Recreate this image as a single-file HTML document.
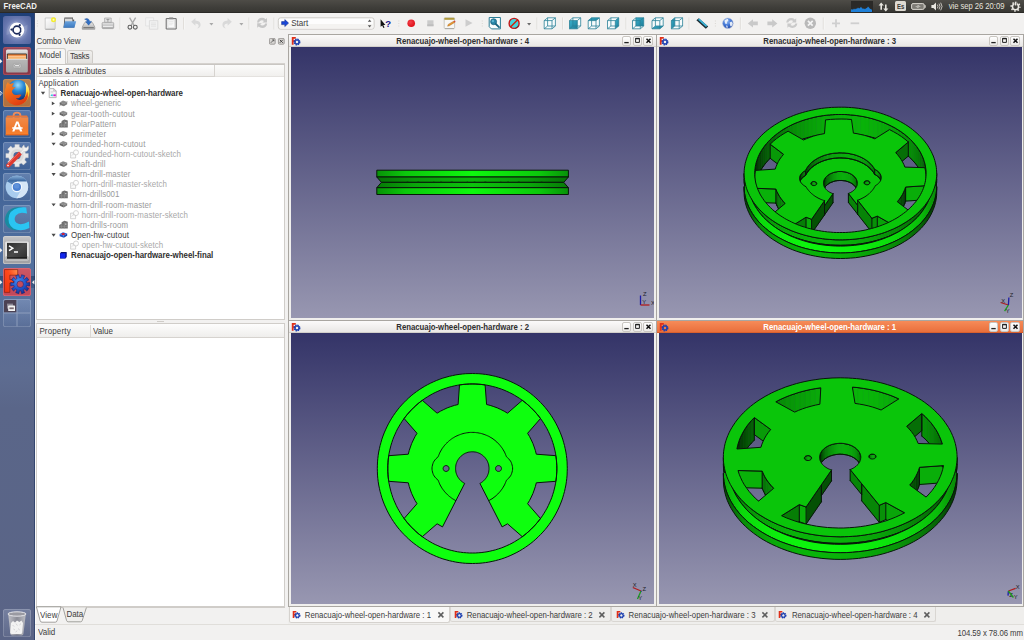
<!DOCTYPE html>
<html lang="es">
<head>
<meta charset="utf-8">
<title>FreeCAD</title>
<style>
html,body{margin:0;padding:0;background:#f2f1f0;}
body{width:1024px;height:640px;overflow:hidden;font-family:"Liberation Sans","DejaVu Sans",sans-serif;}
#root{position:relative;width:1024px;height:640px;overflow:hidden;background:#f2f1f0;}
#root div,#root span,#root svg{position:absolute;box-sizing:border-box;}
.t{white-space:pre;line-height:12px;height:12px;transform:scaleY(1.14);transform-origin:0 55%;}
.sub{border:1px solid #a9a6a1;background:#f0efed;}
.sub .tb{left:0;top:0;right:0;height:12px;background:linear-gradient(#fbfafa,#e9e7e5);border-bottom:1px solid #d2cfcb;}
.sub.active .tb{background:linear-gradient(#f68b58,#e96f3c);border-bottom:1px solid #d9602e;}
.sub .wi{left:1.5px;top:0.8px;}
.sub .wb{top:1.2px;width:9.4px;height:9.4px;border:1px solid #c9c6c1;border-radius:2px;background:linear-gradient(#ffffff,#eceae8);}
.sub.active .wb{border-color:#c9c6c1;}
.sub .wb svg{left:-0.8px;top:-0.8px;}
.v3d{display:block;}
</style>
</head>

<body>
<div id="root">
<!-- top panel -->
<div id="panel" style="left:0;top:0;width:1024px;height:13px;background:linear-gradient(#4e4c47,#3f3e3a 60%,#383733);border-bottom:1px solid #2b2a27"></div>
<!-- indicators -->
<div style="left:851px;top:1px;width:21.5px;height:11px;background:#2a2927"></div>
<svg style="left:851px;top:1px" width="22" height="11" viewBox="0 0 22 11"><path d="M0 11V8.6l1-.4 1 .6 1-1.2 1 .8 1-.9 1 .3 1-1.4 1 1.1 1-.5 1-1.3 1 1.6 1 .5 1-.2 1 .6 1-.9 1-.2 1-1.6 1 .9 1 1.4 1 .5 1 .4V11z" fill="#1f80d8"/></svg>
<svg style="left:878px;top:1.5px" width="11" height="10" viewBox="0 0 11 10"><path d="M3.2 0.6L0.6 3.6h1.8v4.2h1.6V3.6h1.8z M7.8 9.6l2.6-3H8.6V2.4H7v4.2H5.2z" fill="#e8e6e0"/></svg>
<div style="left:894.6px;top:1.4px;width:11.6px;height:9.8px;background:#dedad2;border-radius:1.5px"></div>
<svg style="left:911px;top:3px" width="15" height="7" viewBox="0 0 15 7"><rect x="0.6" y="0.6" width="12.6" height="5.8" rx="1.4" fill="#7d7b75" stroke="#d9d6cf" stroke-width="1"/><rect x="13.6" y="2.2" width="1.1" height="2.6" fill="#d9d6cf"/><path d="M4 3.5h3.2l-1-1.6 3.8 1.6H6.8l1 1.6z" fill="#eceae4"/></svg>
<svg style="left:931px;top:2px" width="12" height="9" viewBox="0 0 12 9"><path d="M0.4 3h2l2.6-2.4v7.8L2.4 6h-2z" fill="#e8e6e0"/><path d="M6.4 2.6q1.2 1.9 0 3.8M8 1.6q2 2.9 0 5.8M9.7 0.7q2.7 3.8 0 7.6" fill="none" stroke="#d6d3cc" stroke-width="0.9"/></svg>
<svg style="left:1009.5px;top:1.2px" width="11" height="11" viewBox="0 0 11 11"><circle cx="5.5" cy="5.7" r="3" fill="none" stroke="#e8e6e0" stroke-width="1.5"/><circle cx="5.5" cy="5.7" r="4.3" fill="none" stroke="#e8e6e0" stroke-width="1.6" stroke-dasharray="1.5 1.88" stroke-dashoffset="0.4"/><rect x="4.7" y="0.4" width="1.6" height="4.4" fill="#e8e6e0" stroke="#46443f" stroke-width="0.5"/></svg>

<!-- launcher background -->
<div id="launcherbg" style="left:0;top:13px;width:34.5px;height:627px;background:linear-gradient(#1e3f78 0%,#234880 8%,#2c528a 16%,#3a5e94 24%,#48689a 31%,#52709e 39%,#59719b 46%,#5c6c93 53%,#5e6d92 57%,#5a6689 63%,#5a6486 100%);border-right:1px solid #35466e"></div>

<div id="winedge" style="left:34.5px;top:13px;width:1px;height:627px;background:#fafafa"></div>
<!-- main toolbar area -->
<div style="left:35px;top:13px;width:989px;height:21px;background:#f2f1f0"></div>

<!-- Combo view dock -->
<svg style="left:268.5px;top:37.5px" width="16" height="7" viewBox="0 0 16 7"><rect x="0.4" y="0.4" width="5.8" height="5.8" rx="1" fill="#d8d6d3" stroke="#8e8c89" stroke-width="0.8"/><path d="M1.8 4.8l3-3M3.3 1.8h1.5v1.5" stroke="#4a4a4a" stroke-width="0.8" fill="none"/><rect x="9.4" y="0.4" width="5.8" height="5.8" rx="1" fill="#d8d6d3" stroke="#8e8c89" stroke-width="0.8"/><path d="M10.8 1.8l3 3M13.8 1.8l-3 3" stroke="#3a3a3a" stroke-width="0.9" fill="none"/></svg>
<!-- tabs Model / Tasks -->
<div style="left:36px;top:48px;width:30px;height:16px;background:#f6f5f4;border:1px solid #cfccc8;border-bottom:none;border-radius:2.5px 2.5px 0 0"></div>
<div style="left:66.5px;top:49.5px;width:26.5px;height:13px;background:linear-gradient(#f1f0ee,#e2e0dd);border:1px solid #cfccc8;border-bottom:none;border-radius:2.5px 2.5px 0 0"></div>
<div style="left:66px;top:62.5px;width:219px;height:1px;background:#d5d2ce"></div>
<!-- tree widget -->
<div style="left:36px;top:63.5px;width:249px;height:256px;background:#ffffff;border:1px solid #d0cdc9;border-top-color:#c9c6c2"></div>
<div style="left:37px;top:64.5px;width:178px;height:12.5px;background:linear-gradient(#fdfdfd,#efeeec);border-bottom:1px solid #d6d3cf;border-right:1px solid #d6d3cf"></div>
<div style="left:215px;top:64.5px;width:69px;height:12.5px;background:linear-gradient(#fbfbfa,#f1f0ee);border-bottom:1px solid #e4e2df"></div>
<!-- splitter handle -->
<div style="left:157px;top:320.8px;width:7px;height:1px;background:#cfccc8"></div>
<!-- property widget -->
<div style="left:36px;top:323px;width:249px;height:284px;background:#ffffff;border:1px solid #d0cdc9"></div>
<div style="left:37px;top:324px;width:247px;height:13.5px;background:linear-gradient(#fdfdfd,#efeeec);border-bottom:1px solid #d6d3cf"></div>
<div style="left:90px;top:325px;width:1px;height:11.5px;background:#dcd9d5"></div>
<!-- View / Data tabs (triangular) -->
<div style="left:36px;top:606.5px;width:249px;height:1px;background:#cfccc8"></div>
<svg style="left:35px;top:606px" width="60" height="18" viewBox="0 0 60 18"><path d="M1.4 0.8L5.2 14.8q0.4 1.4 1.8 1.4h13.2q1.4 0 1.8-1.4L26 0.8z" fill="#ffffff" stroke="#8d8b88" stroke-width="0.8"/><path d="M28 1.6L31.6 14.6q0.4 1.2 1.6 1.2h12.4q1.2 0 1.6-1.2L51.4 1.6" fill="#f0efed" stroke="#8d8b88" stroke-width="0.8"/></svg>

<!-- MDI area frame -->
<div style="left:288px;top:34px;width:736px;height:573px;background:#a9a6a1"></div>
<!-- tab bar for MDI -->
<div style="left:288px;top:607px;width:736px;height:16.5px;background:#efeeec"></div>
<div style="left:289px;top:607px;width:160.5px;height:15.5px;background:#f9f8f7;border:1px solid #d5d2ce;border-top:none;border-radius:0 0 2.5px 2.5px"></div>
<div style="left:449.5px;top:607px;width:161.5px;height:14.5px;background:#eeedeb;border:1px solid #d9d6d2;border-top:none;border-radius:0 0 2.5px 2.5px"></div>
<div style="left:611px;top:607px;width:163.5px;height:14.5px;background:#eeedeb;border:1px solid #d9d6d2;border-top:none;border-radius:0 0 2.5px 2.5px"></div>
<div style="left:774.5px;top:607px;width:161.5px;height:14.5px;background:#eeedeb;border:1px solid #d9d6d2;border-top:none;border-radius:0 0 2.5px 2.5px"></div>
<!-- status bar -->
<div style="left:35px;top:624px;width:989px;height:1px;background:#e0deda"></div>

<style>.lt{width:28px;height:28px;border-radius:2.6px;overflow:hidden}</style>
<div style="left:0;top:276px;width:34.5px;height:11.5px;background:linear-gradient(rgba(20,50,90,0.55),rgba(30,60,100,0.35))"></div>
<div class="lt" style="left:3.1px;top:16.0px;background:radial-gradient(circle at 50% 50%,#a2aed4 0%,#8290c0 38%,#6676ae 62%,#52639c 100%);"><svg width="28" height="28" viewBox="0 0 28 28" style="left:0;top:0"><path d="M3.5 19Q3 7 15 4.500Q7 8.500 6.500 18z" fill="#ffffff" opacity="0.130"/><path d="M24.500 9Q25 21 13 23.500Q21 19.500 21.500 10z" fill="#ffffff" opacity="0.130"/><circle cx="13.9" cy="14" r="7.4" fill="#ffffff"/><circle cx="13.9" cy="14" r="3.9" fill="none" stroke="#1b2a5c" stroke-width="1.7"/><circle cx="8.5" cy="13.6" r="1.1" fill="#1b2a5c"/><circle cx="16.8" cy="9.2" r="1.1" fill="#1b2a5c"/><circle cx="16.6" cy="18.8" r="1.1" fill="#1b2a5c"/><path d="M10.6 11.2l-1 -0.8M10.8 17l-1 .7M18 14h1.2" stroke="#fff" stroke-width="0.9"/></svg></div>
<div class="lt" style="left:3.1px;top:47.4px;background:linear-gradient(#9a4a5c,#8a3a4c 50%,#8c3848);box-shadow:inset 0 0 0 1px rgba(190,90,100,0.55);"><svg width="28" height="28" viewBox="0 0 28 28" style="left:0;top:0"><defs><linearGradient id="fl1" x1="0" y1="0" x2="0" y2="1"><stop offset="0" stop-color="#e9e9e9"/><stop offset="0.3" stop-color="#bcbcbc"/><stop offset="1" stop-color="#a4a4a4"/></linearGradient><linearGradient id="fl2" x1="0" y1="0" x2="0" y2="1"><stop offset="0" stop-color="#e8742a"/><stop offset="0.5" stop-color="#f8a860"/><stop offset="1" stop-color="#f6c890"/></linearGradient></defs><rect x="3" y="2.4" width="21.8" height="23" rx="1.5" fill="url(#fl1)"/><rect x="4" y="6.4" width="19.8" height="5.6" rx="0.8" fill="#3a3632"/><rect x="4.8" y="7.4" width="18.2" height="4.6" fill="url(#fl2)"/><path d="M5 9.4h17.8" stroke="#fde0c0" stroke-width="0.6"/><rect x="3.4" y="12" width="21" height="0.8" fill="#dedede"/><rect x="10.2" y="16.4" width="7.8" height="4.6" rx="1.6" fill="#c9c9c9" stroke="#9a9a9a" stroke-width="0.5"/><rect x="11.6" y="17.7" width="5" height="2" rx="1" fill="#f4f4f4" stroke="#7c7c7c" stroke-width="0.6"/></svg></div>
<div class="lt" style="left:3.1px;top:79.0px;background:linear-gradient(#b88050,#b47644 50%,#ae703e);box-shadow:inset 0 0 0 1px rgba(210,150,100,0.5);"><svg width="28" height="28" viewBox="0 0 28 28" style="left:0;top:0"><defs><radialGradient id="ffb" cx="0.5" cy="0.25" r="0.8"><stop offset="0" stop-color="#9adcf8"/><stop offset="0.35" stop-color="#2a8ad8"/><stop offset="0.8" stop-color="#103c88"/><stop offset="1" stop-color="#0a2458"/></radialGradient><linearGradient id="ffo" x1="0" y1="0" x2="0.6" y2="1"><stop offset="0" stop-color="#f58a2a"/><stop offset="0.5" stop-color="#ee6418"/><stop offset="1" stop-color="#e03c10"/></linearGradient><linearGradient id="ffy" x1="0" y1="0" x2="0" y2="1"><stop offset="0" stop-color="#fff6b0"/><stop offset="0.5" stop-color="#fcd020"/><stop offset="1" stop-color="#f08a18"/></linearGradient></defs><g transform="translate(14.1 13.5) scale(1.11) translate(-14.7 -13.8)"><circle cx="15.4" cy="12" r="9.6" fill="url(#ffb)"/><path d="M21.6 4.6Q27 9 25.4 16.6Q23.6 23.8 16 25Q22 20 22.6 14Q23.4 9 21.6 4.6z" fill="url(#ffy)"/><path d="M6.4 4.4Q7 6 8.4 6.2Q10 5.2 12 5.6Q10.2 7.2 10.4 9Q12 9.2 13.6 8.6Q12.2 10.2 11 11Q9.6 12.2 10.4 14Q11.6 16.4 14.4 16Q16.6 15.4 18.6 15.8Q17 19.6 13.4 19Q17 22 21 19Q23.6 16.6 23.8 12.6Q25.6 18 22.4 22Q18.6 26 12.6 25.2Q6.6 24 4.2 18.6Q2.4 13.6 4.6 9.2Q4.6 6.6 6.4 4.4z" fill="url(#ffo)"/></g></svg></div>
<div class="lt" style="left:3.1px;top:110.3px;background:linear-gradient(rgba(120,150,200,0.55),rgba(60,96,150,0.35));box-shadow:inset 0 0 0 0.8px rgba(255,255,255,0.22);"><svg width="28" height="28" viewBox="0 0 28 28" style="left:0;top:0"><defs><linearGradient id="bag" x1="0" y1="0" x2="0" y2="1"><stop offset="0" stop-color="#f08a48"/><stop offset="0.6" stop-color="#f07a30"/><stop offset="1" stop-color="#f8822c"/></linearGradient></defs><path d="M10.6 9V5.2Q10.6 2.6 14 2.6Q17.4 2.6 17.4 5.2V9" fill="none" stroke="#ee8c5a" stroke-width="1.8"/><path d="M2.8 7.6l1.4 -2.2h19.8l1.2 2.2z" fill="#e8763a"/><rect x="2.7" y="7.4" width="22.6" height="17.8" fill="url(#bag)"/><rect x="2.7" y="24" width="22.6" height="1.2" fill="#e86a20"/><path d="M9.2 21.6L13.2 11.6h2.2L19.4 21.6h-2.4l-0.7 -2h-4.2l-0.7 2z M12.9 17.4h2.8L14.3 13.6z" fill="#ffffff"/><rect x="9" y="17.2" width="10.8" height="1.5" rx="0.7" fill="#ffffff"/></svg></div>
<div class="lt" style="left:3.1px;top:141.9px;background:linear-gradient(rgba(130,155,200,0.5),rgba(70,100,150,0.3));box-shadow:inset 0 0 0 0.8px rgba(255,255,255,0.22);"><svg width="28" height="28" viewBox="0 0 28 28" style="left:0;top:0"><path d="M25.3 11.4L25.3 15.8L22.6 15.8L21.7 18.1L23.6 19.9L20.4 23.1L18.6 21.2L16.3 22.1L16.3 24.8L11.9 24.8L11.9 22.1L9.6 21.2L7.8 23.1L4.6 19.9L6.5 18.1L5.6 15.8L2.9 15.8L2.9 11.4L5.6 11.4L6.5 9.1L4.6 7.3L7.8 4.1L9.6 6.0L11.9 5.1L11.9 2.4L16.3 2.4L16.3 5.1L18.6 6.0L20.4 4.1L23.6 7.3L21.7 9.1L22.6 11.4Z" fill="#e9e9e9" stroke="#c8c8c8" stroke-width="0.4"/><circle cx="14.1" cy="13.6" r="6.6" fill="#dadada"/><circle cx="14.1" cy="13.6" r="3.6" fill="#4a6a9c"/><path d="M17.2 10.6L20 7.4Q18.6 4.4 21 2.8L21.6 5.4L23.6 5.8L25.2 3.8Q26.4 7 24 9Q22 10.2 20.6 9.6L18.6 12z" fill="#f2f2f2" stroke="#bdbdbd" stroke-width="0.4"/><path d="M3.4 22.4L16 9.6L18.8 12.4L6.4 25.2Q4.8 26 3.6 24.8Q2.6 23.6 3.4 22.4z" fill="#e03a30"/><path d="M4.4 22.6L16 10.8" stroke="#f47a70" stroke-width="0.7"/><circle cx="5" cy="23.6" r="0.8" fill="#fff"/></svg></div>
<div class="lt" style="left:3.1px;top:173.1px;background:linear-gradient(rgba(135,160,200,0.5),rgba(75,105,150,0.3));box-shadow:inset 0 0 0 0.8px rgba(255,255,255,0.22);"><svg width="28" height="28" viewBox="0 0 28 28" style="left:0;top:0"><defs><linearGradient id="ch1" x1="0" y1="0" x2="0" y2="1"><stop offset="0" stop-color="#8ab0d8"/><stop offset="1" stop-color="#32609a"/></linearGradient></defs><circle cx="13.9" cy="14" r="11.2" fill="#a9ccee"/><path d="M13.9 14L4.2 8.4A11.2 11.2 0 0 1 23.6 8.4z" fill="url(#ch1)"/><path d="M4.2 8.4A11.2 11.2 0 0 1 23.6 8.4H13z" fill="url(#ch1)"/><path d="M23.6 8.4A11.2 11.2 0 0 1 13.4 25.2L18.4 16.6L13.9 8.4z" fill="#d6e6f6"/><circle cx="13.9" cy="14" r="5.3" fill="#f2f7fc"/><circle cx="13.9" cy="14" r="4.1" fill="#4a80d2"/><circle cx="13.6" cy="13" r="2.6" fill="#6c9ce0" opacity="0.6"/></svg></div>
<div class="lt" style="left:3.1px;top:204.8px;background:linear-gradient(rgba(135,160,200,0.45),rgba(80,108,152,0.3));box-shadow:inset 0 0 0 0.8px rgba(255,255,255,0.22);"><svg width="28" height="28" viewBox="0 0 28 28" style="left:0;top:0"><path d="M20 2.4Q8 0.6 3.4 9Q-0.4 17 5.4 22.6Q9.4 26 15 25.2Q8 22 8.4 13Q9.4 5.4 20 2.4z" fill="#1a8aa0"/><path d="M23.2 2.4L24 8.6Q16.6 6 12.8 10.4Q10.2 14.4 13.4 17.8Q17.8 21 26 16.6L26.4 23Q17.6 27.4 10.4 23.6Q3.6 18.6 6.2 10Q9.6 1.6 23.2 2.4z" fill="#2ac4f2"/></svg></div>
<div class="lt" style="left:3.1px;top:236.3px;background:linear-gradient(#c6c6c8,#aeaeb0 30%,#a2a2a4);box-shadow:inset 0 0 0 0.8px rgba(220,220,220,0.6);"><svg width="28" height="28" viewBox="0 0 28 28" style="left:0;top:0"><defs><linearGradient id="tm1" x1="0" y1="0" x2="1" y2="1"><stop offset="0" stop-color="#2c2c2c"/><stop offset="0.5" stop-color="#4a4a4a"/><stop offset="1" stop-color="#2e2e2e"/></linearGradient></defs><rect x="2.1" y="5.4" width="23.8" height="19" rx="1.6" fill="#e4e4e4"/><rect x="2.1" y="20" width="23.8" height="4.4" rx="1.6" fill="#b8b8b8"/><rect x="4" y="6.9" width="20" height="15.6" fill="url(#tm1)"/><rect x="4" y="21.4" width="20" height="1.1" fill="#111"/><path d="M6 9.8l3.8 2.4L6 14.6" fill="none" stroke="#ffffff" stroke-width="1.5"/><path d="M11 16h4" stroke="#ffffff" stroke-width="1.5"/></svg></div>
<div class="lt" style="left:3.1px;top:267.7px;background:linear-gradient(#cf5866,#c44c5c 50%,#c2485a);box-shadow:inset 0 0 0 0.8px rgba(235,120,130,0.6);"><svg width="28" height="28" viewBox="0 0 28 28" style="left:0;top:0"><defs><linearGradient id="fcF" x1="0" y1="1" x2="1" y2="0"><stop offset="0" stop-color="#f03010"/><stop offset="0.6" stop-color="#ff4a1c"/><stop offset="1" stop-color="#ff9450"/></linearGradient><radialGradient id="fcG" cx="0.4" cy="0.35" r="0.7"><stop offset="0" stop-color="#4a8ef0"/><stop offset="0.6" stop-color="#1f50c4"/><stop offset="1" stop-color="#14308c"/></radialGradient></defs><path d="M1.4 1.6h13.3v5.6H6.8v4.4h3.6v3.4H6.8v9.4H1.4z" fill="url(#fcF)" stroke="#7a1a0a" stroke-width="0.6"/><path d="M26.7 14.5L26.7 17.9L23.7 17.5L23.2 18.9L25.8 20.4L23.9 23.1L21.7 21.1L20.5 21.9L21.7 24.7L18.6 25.7L17.9 22.8L16.5 22.8L15.8 25.7L12.7 24.7L13.9 21.9L12.7 21.1L10.5 23.1L8.6 20.4L11.2 18.9L10.7 17.5L7.7 17.9L7.7 14.5L10.7 14.9L11.2 13.5L8.6 12.0L10.5 9.3L12.7 11.3L13.9 10.5L12.7 7.7L15.8 6.7L16.5 9.6L17.9 9.6L18.6 6.7L21.7 7.7L20.5 10.5L21.7 11.3L23.9 9.3L25.8 12.0L23.2 13.5L23.7 14.9Z M20.3 16.2a0 0 0 0 0 0 0z" fill="url(#fcG)" stroke="#101c70" stroke-width="0.5"/><circle cx="17.2" cy="16.2" r="3.3" fill="#c44c5c" stroke="#101c70" stroke-width="0.5"/></svg></div>
<div class="lt" style="left:3.1px;top:299.1px;background:linear-gradient(rgba(140,160,200,0.5),rgba(85,110,155,0.25));box-shadow:inset 0 0 0 0.8px rgba(255,255,255,0.22);"><svg width="28" height="28" viewBox="0 0 28 28" style="left:0;top:0"><path d="M1 2.6Q1 1 2.6 1H13.6V13.6H1z" fill="#4c4254"/><path d="M14 0.6V27.4M0.6 14H27.4" stroke="#92a2c0" stroke-width="0.9"/><rect x="4" y="4.6" width="6" height="5" fill="#8c8894"/><rect x="5.2" y="6.6" width="6.8" height="5.4" rx="0.6" fill="#f4f4f4"/><rect x="6.4" y="8.4" width="4.4" height="1.8" fill="#7a6a72"/></svg></div>
<div class="lt" style="left:3.1px;top:609.0px;background:linear-gradient(rgba(150,160,190,0.45),rgba(110,120,150,0.25));box-shadow:inset 0 0 0 0.8px rgba(255,255,255,0.22);"><svg width="28" height="28" viewBox="0 0 28 28" style="left:0;top:0"><defs><linearGradient id="trs" x1="0" y1="0" x2="1" y2="0"><stop offset="0" stop-color="#c8c8cc"/><stop offset="0.5" stop-color="#8e8e96"/><stop offset="1" stop-color="#c4c4c8"/></linearGradient></defs><path d="M5.2 5L7.4 25Q7.6 26.4 9 26.4H18.8Q20.2 26.4 20.4 25L22.8 5z" fill="url(#trs)" opacity="0.9"/><ellipse cx="14" cy="5" rx="9" ry="2.2" fill="#9a9aa2" stroke="#e6e6ea" stroke-width="1"/><path d="M8 14l2 -2 2 1.4 2 -2 2.4 1.6 2 -1.6 1.6 2.6 -0.8 9.4q-0.1 1.6 -1.6 1.6h-8.8q-1.4 0 -1.6 -1.6z" fill="#f2f2f2"/><path d="M9.6 16l1.6 1.6M13 14.6l1.4 2M16.4 16l1.6 -1.4M10.4 20l1.6 1M15 19.6l1.8 1.4M12.6 23l1.6 -1.2" stroke="#c4c4c8" stroke-width="0.7"/></svg></div>
<svg style="left:0px;top:59px" width="3" height="5" viewBox="0 0 3 5"><path d="M0 0L2.4 2.2L0 4.4z" fill="#f0f0f0" stroke="#f0f0f0" stroke-width="0"/></svg>
<svg style="left:0px;top:90.5px" width="3" height="5" viewBox="0 0 3 5"><path d="M0 0L2.4 2.2L0 4.4z" fill="none" stroke="#f0f0f0" stroke-width="0.8"/></svg>
<svg style="left:0px;top:247.5px" width="3" height="5" viewBox="0 0 3 5"><path d="M0 0L2.4 2.2L0 4.4z" fill="#f0f0f0" stroke="#f0f0f0" stroke-width="0"/></svg>
<svg style="left:0px;top:279.5px" width="3" height="5" viewBox="0 0 3 5"><path d="M0 0L2.4 2.2L0 4.4z" fill="#f0f0f0" stroke="#f0f0f0" stroke-width="0"/></svg>
<svg style="left:31.6px;top:279.5px" width="3" height="5" viewBox="0 0 3 5"><path d="M2.4 0L0 2.2L2.4 4.4z" fill="#f0f0f0" stroke="#f0f0f0" stroke-width="0"/></svg>
<svg style="left:35px;top:13px" width="989" height="21" viewBox="35 13 989 21"><defs><linearGradient id="tPage" x1="0" y1="0" x2="1" y2="1"><stop offset="0" stop-color="#ffffff"/><stop offset="1" stop-color="#dcdcdc"/></linearGradient><linearGradient id="tBlue" x1="0" y1="0" x2="0" y2="1"><stop offset="0" stop-color="#6aa2dc"/><stop offset="1" stop-color="#3a78c0"/></linearGradient><linearGradient id="tTray" x1="0" y1="0" x2="0" y2="1"><stop offset="0" stop-color="#e6e6e6"/><stop offset="1" stop-color="#a8a8a8"/></linearGradient><radialGradient id="tGlobe" cx="0.4" cy="0.3" r="0.8"><stop offset="0" stop-color="#9cc0f4"/><stop offset="0.5" stop-color="#3f74d4"/><stop offset="1" stop-color="#1c3c94"/></radialGradient><radialGradient id="tRed" cx="0.4" cy="0.35" r="0.7"><stop offset="0" stop-color="#f4404a"/><stop offset="1" stop-color="#dc0c14"/></radialGradient><linearGradient id="tTeal" x1="0" y1="0" x2="1" y2="1"><stop offset="0" stop-color="#3ab0cc"/><stop offset="1" stop-color="#1c7c98"/></linearGradient></defs><path d="M37.4 20.4v1M37.4 22.9v1M37.4 25.4v1" stroke="#dcd9d5" stroke-width="1.1"/><path d="M45.2 18h10v10.6q0 .6-.6 .6h-8.8q-.6 0-.6-.6z" fill="url(#tPage)" stroke="#b9b9b9" stroke-width="0.7"/><path d="M45.4 29.3h9.6" stroke="#a2a2a2" stroke-width="0.8"/><circle cx="53.5" cy="19.8" r="2.5" fill="#f4ec30"/><circle cx="53.5" cy="19.8" r="1" fill="#fdfcc0"/><path d="M64.4 17.4h8.6v2h1.2v8h-10.6z" fill="#5c5c5c"/><path d="M65 18.6h7.4v8h-7.4z" fill="#d8d8d8"/><path d="M63.3 27.8l1.7-6.6h11.2l-1.8 6.6z" fill="url(#tBlue)"/><path d="M82.3 27l2.4-4.4h7.8l2.3 4.4v2.3h-12.5z" fill="url(#tTray)" stroke="#8a8a8a" stroke-width="0.6"/><path d="M83.4 27.6h10.4" stroke="#777" stroke-width="1.1"/><path d="M84.6 19.2Q88.4 17 89.8 21.4h1.8l-3 3.8-3-3.8h1.8Q87.2 19.6 84.6 19.2z" fill="#2f6fc4" stroke="#1c4c94" stroke-width="0.4"/><path d="M104.6 18h6.6v4.4h-6.6z" fill="#e2e2e2" stroke="#9a9a9a" stroke-width="0.6"/><path d="M106.4 19.4h3M107.9 19.4v2.4" stroke="#8c8c8c" stroke-width="0.8"/><path d="M102.1 23.4q0-1 1-1h9.6q1 0 1 1v4.2q0 1-1 1h-9.6q-1 0-1-1z" fill="url(#tTray)" stroke="#8e8e8e" stroke-width="0.6"/><path d="M103 26.4h9.8" stroke="#f6f6f6" stroke-width="0.9"/><path d="M120 17.5v12" stroke="#dddad6" stroke-width="1"/><path d="M120.8 17.5v12" stroke="#fafafa" stroke-width="0.6"/><path d="M129.6 17.6l4.6 8M135.6 17.6l-4.6 8" stroke="#a8a8a8" stroke-width="1.3"/><circle cx="129.9" cy="27.2" r="1.9" fill="none" stroke="#5e5e5e" stroke-width="1.1"/><circle cx="135.3" cy="27.2" r="1.9" fill="none" stroke="#5e5e5e" stroke-width="1.1"/><path d="M145.6 17.8h8v8.2h-8z" fill="#f4f4f4" stroke="#dedede" stroke-width="0.7"/><path d="M149.4 20.6h8.4v8.6h-8.4z" fill="#f1f1f1" stroke="#d6d6d6" stroke-width="0.7"/><path d="M151 23h5M151 24.6h5M151 26.2h5" stroke="#dcdcdc" stroke-width="0.7"/><path d="M166.2 18.6h10v10.4h-10z" fill="#efefef" stroke="#6a6a6a" stroke-width="1"/><path d="M168 19.8h6.4v7.8h-6.4z" fill="#fafafa" stroke="#cfcfcf" stroke-width="0.5"/><path d="M169.2 17.4h4v1.8h-4z" fill="#8a8a8a"/><path d="M169 21.6h4.4M169 23.2h4.4M169 24.8h3.4" stroke="#dadada" stroke-width="0.6"/><path d="M183.5 17.5v12" stroke="#dddad6" stroke-width="1"/><path d="M184.3 17.5v12" stroke="#fafafa" stroke-width="0.6"/><path d="M191.2 21.8l4.2-3.8v2.4q5.4 .4 5.2 4.6q-.2 2.6-3.4 3.4q2-1.6 1.4-3.4q-.6-1.6-3.2-1.6v2.4z" fill="#d9d9d9"/><path d="M209.4 23l2 2.6 2-2.6z" fill="#a9a9a9"/><path d="M231.8 21.8l-4.2-3.8v2.4q-5.4 .4-5.2 4.6q.2 2.6 3.4 3.4q-2-1.6-1.4-3.4q.6-1.6 3.2-1.6v2.4z" fill="#d9d9d9"/><path d="M239.4 23l2 2.6 2-2.6z" fill="#a9a9a9"/><path d="M249 17.5v12" stroke="#dddad6" stroke-width="1"/><path d="M249.8 17.5v12" stroke="#fafafa" stroke-width="0.6"/><path d="M257 22.4q.6-4.4 5-4.6q2.2 0 3.6 1.4l1.4-1.2v4.6h-4.6l1.6-1.6q-1-.8-2.2-.8q-2.4 .2-2.8 2.2z M267.2 23.4q-.6 4.4-5 4.6q-2.2 0-3.6-1.4l-1.4 1.2v-4.6h4.6l-1.6 1.6q1 .8 2.2 .8q2.400-.2 2.800-2.200z" fill="#c6c6c6"/><path d="M274 17.5v12" stroke="#dddad6" stroke-width="1"/><path d="M274.8 17.5v12" stroke="#fafafa" stroke-width="0.6"/><rect x="278.3" y="17.8" width="95.8" height="11.4" rx="2.4" fill="#fdfdfd" stroke="#c3c0bb" stroke-width="0.8"/><rect x="278.9" y="24" width="94.600" height="4.6" rx="1.6" fill="#f1f0ee" opacity="0.8"/><path d="M281.600 21.6h3.200v-2l3.800 3.500-3.800 3.500v-2h-3.200z" fill="#1846d8" stroke="#0c2480" stroke-width="0.5"/><path d="M367.800 21.800l1.800-2.200 1.800 2.200z M367.800 25.200l1.800 2.200 1.800-2.200z" fill="#555"/><path d="M380.600 19.200v7.600l1.600-1.400 1.200 2.600 1.100-.5-1.200-2.500h2.100z" fill="#111"/><text x="385.200" y="27.200" font-family="Liberation Sans, sans-serif" font-weight="bold" font-size="9.600" fill="#1a1a8c">?</text><path d="M398.8 20.4v1M398.8 22.9v1M398.8 25.4v1" stroke="#dcd9d5" stroke-width="1.1"/><circle cx="411.200" cy="23.300" r="3.800" fill="url(#tRed)"/><rect x="427.300" y="20.300" width="6.200" height="5.900" fill="#cbcbcb"/><rect x="427.300" y="24.300" width="6.200" height="1.900" fill="#bdbdbd"/><rect x="444.200" y="17.900" width="10.400" height="10.600" rx="0.800" fill="#f7f7f5" stroke="#b4b4ae" stroke-width="0.700"/><rect x="444.400" y="17.800" width="10" height="2" fill="#b09a3c"/><path d="M445 28.700h9" stroke="#9e9e98" stroke-width="0.800"/><path d="M447.600 26.200l.6-1.800 5.400-3.200 1.100 1.200-5.300 3.300z" fill="#e89a30" stroke="#a0601c" stroke-width="0.400"/><path d="M453.400 21.300l1.200-.7 1 1.200-1.100.700z" fill="#d84a3a"/><path d="M465.500 19.300l7 3.800-7 3.700z" fill="#cdcdcd"/><path d="M482.3 20.4v1M482.3 22.9v1M482.3 25.4v1" stroke="#dcd9d5" stroke-width="1.1"/><path d="M489.200 17.500h11.200v11.400h-9l-2.200-2.200z" fill="#fbfdfd" stroke="#2c7c94" stroke-width="1"/><circle cx="493.600" cy="21.700" r="3" fill="#2a86a8" stroke="#165c78" stroke-width="0.700"/><circle cx="492.900" cy="21" r="1.200" fill="#5cb4d0"/><path d="M495.800 24l3.200 3.200" stroke="#186480" stroke-width="1.800" stroke-linecap="round"/><circle cx="514.100" cy="23.400" r="4.600" fill="#42d4dc"/><path d="M510.600 26.800l7-7" stroke="#f4e04a" stroke-width="1.100"/><circle cx="514.100" cy="23.400" r="5" fill="none" stroke="#c01818" stroke-width="1.400"/><path d="M510.500 27l7.200-7.200" stroke="#c01818" stroke-width="1.300"/><path d="M515.200 28.400l3.400-2.200" stroke="#444" stroke-width="1"/><path d="M527.1 23l2 2.6 2-2.6z" fill="#6a6a6a"/><path d="M537 17.5v12" stroke="#dddad6" stroke-width="1"/><path d="M537.8 17.5v12" stroke="#fafafa" stroke-width="0.6"/><path d="M544.1999999999999 20.6H552.0V28.8H544.1999999999999zM544.1999999999999 20.6L547.5999999999999 17.8H555.4L552.0 20.6zM552.0 20.6L555.4 17.8V26.0L552.0 28.8z" fill="#f7fbfc" stroke="none"/><path d="M544.1999999999999 20.6H552.0V28.8H544.1999999999999zM547.5999999999999 17.8H555.4V26.0H547.5999999999999z M544.1999999999999 20.6l3.4 -2.8 M552.0 20.6l3.4 -2.8 M552.0 28.8l3.4 -2.8 M544.1999999999999 28.8l3.4 -2.8" fill="none" stroke="#2b8298" stroke-width="0.800" stroke-linejoin="round"/><path d="M562.5 17.5v12" stroke="#dddad6" stroke-width="1"/><path d="M563.3 17.5v12" stroke="#fafafa" stroke-width="0.6"/><path d="M569.5 20.6H577.3000000000001V28.8H569.5zM569.5 20.6L572.9 17.8H580.7L577.3000000000001 20.6zM577.3000000000001 20.6L580.7 17.8V26.0L577.3000000000001 28.8z" fill="#f7fbfc" stroke="none"/><path d="M569.5 20.6H577.3000000000001V28.8H569.5z" fill="url(#tTeal)"/><path d="M569.5 20.6H577.3000000000001V28.8H569.5zM572.9 17.8H580.7V26.0H572.9z M569.5 20.6l3.4 -2.8 M577.3000000000001 20.6l3.4 -2.8 M577.3000000000001 28.8l3.4 -2.8 M569.5 28.8l3.4 -2.8" fill="none" stroke="#2b8298" stroke-width="0.800" stroke-linejoin="round"/><path d="M588.1999999999999 20.6H596.0V28.8H588.1999999999999zM588.1999999999999 20.6L591.5999999999999 17.8H599.4L596.0 20.6zM596.0 20.6L599.4 17.8V26.0L596.0 28.8z" fill="#f7fbfc" stroke="none"/><path d="M588.1999999999999 20.6L591.5999999999999 17.8H599.4L596.0 20.6z" fill="url(#tTeal)"/><path d="M588.1999999999999 20.6H596.0V28.8H588.1999999999999zM591.5999999999999 17.8H599.4V26.0H591.5999999999999z M588.1999999999999 20.6l3.4 -2.8 M596.0 20.6l3.4 -2.8 M596.0 28.8l3.4 -2.8 M588.1999999999999 28.8l3.4 -2.8" fill="none" stroke="#2b8298" stroke-width="0.800" stroke-linejoin="round"/><path d="M607.5 20.6H615.3000000000001V28.8H607.5zM607.5 20.6L610.9 17.8H618.7L615.3000000000001 20.6zM615.3000000000001 20.6L618.7 17.8V26.0L615.3000000000001 28.8z" fill="#f7fbfc" stroke="none"/><path d="M615.3000000000001 20.6L618.7 17.8V26.0L615.3000000000001 28.8z" fill="url(#tTeal)"/><path d="M607.5 20.6H615.3000000000001V28.8H607.5zM610.9 17.8H618.7V26.0H610.9z M607.5 20.6l3.4 -2.8 M615.3000000000001 20.6l3.4 -2.8 M615.3000000000001 28.8l3.4 -2.8 M607.5 28.8l3.4 -2.8" fill="none" stroke="#2b8298" stroke-width="0.800" stroke-linejoin="round"/><path d="M626 17.5v12" stroke="#dddad6" stroke-width="1"/><path d="M626.8 17.5v12" stroke="#fafafa" stroke-width="0.6"/><path d="M632.5 20.6H640.3000000000001V28.8H632.5zM632.5 20.6L635.9 17.8H643.7L640.3000000000001 20.6zM640.3000000000001 20.6L643.7 17.8V26.0L640.3000000000001 28.8z" fill="#f7fbfc" stroke="none"/><path d="M635.9 17.8H643.7V26.0H635.9z" fill="url(#tTeal)"/><path d="M632.5 20.6H640.3000000000001V28.8H632.5zM635.9 17.8H643.7V26.0H635.9z M632.5 20.6l3.4 -2.8 M640.3000000000001 20.6l3.4 -2.8 M640.3000000000001 28.8l3.4 -2.8 M632.5 28.8l3.4 -2.8" fill="none" stroke="#2b8298" stroke-width="0.800" stroke-linejoin="round"/><path d="M652.0 20.6H659.8000000000001V28.8H652.0zM652.0 20.6L655.4 17.8H663.2L659.8000000000001 20.6zM659.8000000000001 20.6L663.2 17.8V26.0L659.8000000000001 28.8z" fill="#f7fbfc" stroke="none"/><path d="M652.0 28.8L655.4 26.0H663.2L659.8000000000001 28.8z" fill="url(#tTeal)"/><path d="M652.0 20.6H659.8000000000001V28.8H652.0zM655.4 17.8H663.2V26.0H655.4z M652.0 20.6l3.4 -2.8 M659.8000000000001 20.6l3.4 -2.8 M659.8000000000001 28.8l3.4 -2.8 M652.0 28.8l3.4 -2.8" fill="none" stroke="#2b8298" stroke-width="0.800" stroke-linejoin="round"/><path d="M671.4 20.6H679.2V28.8H671.4zM671.4 20.6L674.8 17.8H682.6L679.2 20.6zM679.2 20.6L682.6 17.8V26.0L679.2 28.8z" fill="#f7fbfc" stroke="none"/><path d="M671.4 20.6L674.8 17.8V26.0L671.4 28.8z" fill="url(#tTeal)"/><path d="M671.4 20.6H679.2V28.8H671.4zM674.8 17.8H682.6V26.0H674.8z M671.4 20.6l3.4 -2.8 M679.2 20.6l3.4 -2.8 M679.2 28.8l3.4 -2.8 M671.4 28.8l3.4 -2.8" fill="none" stroke="#2b8298" stroke-width="0.800" stroke-linejoin="round"/><path d="M689.1 17.5v12" stroke="#dddad6" stroke-width="1"/><path d="M689.9 17.5v12" stroke="#fafafa" stroke-width="0.6"/><path d="M696.400 20.200l2.400-2 9.400 8.400-2.400 2.200z" fill="#1c2c34"/><path d="M698 19.700l1.300-1.100 8 7.100-1.300 1.200z" fill="#3cb4d8"/><path d="M715.4 20.4v1M715.4 22.9v1M715.4 25.4v1" stroke="#dcd9d5" stroke-width="1.1"/><circle cx="727.900" cy="23.300" r="5.300" fill="url(#tGlobe)" stroke="#b8c4dc" stroke-width="0.600"/><path d="M724.400 20.600q1.600-1.800 3.400-1.600l.6 1.600-1.600 1.400.4 1.600-1.600.4-.8-1.800zM729.600 22.400l2-.8 1.200 1.600-.6 2.400-1.800 1-.4-2z M726 25.600l1.400.2.400 1.800-1 .4z" fill="#f2f6fc" opacity="0.920"/><path d="M740.4 17.5v12" stroke="#dddad6" stroke-width="1"/><path d="M741.1999999999999 17.5v12" stroke="#fafafa" stroke-width="0.6"/><path d="M747.800 23.400l5.200-4.200v2.400h4.800v3.600h-4.800v2.400z" fill="#c9c9c9"/><path d="M777.400 23.400l-5.200-4.200v2.400h-4.800v3.600h4.800v2.400z" fill="#c9c9c9"/><path d="M786.200 22.400q.6-4.200 5-4.400q2.200 0 3.600 1.400l1.400-1.200v4.400h-4.600l1.600-1.600q-1-.8-2.200-.8q-2.400 .2-2.800 2.200z M797.400 23.600q-.6 4.200-5 4.400q-2.200 0-3.600-1.400l-1.400 1.200v-4.400h4.600l-1.600 1.600q1 .8 2.200 .8q2.400-.2 2.800-2.200z" fill="#cacaca"/><circle cx="810.300" cy="23.300" r="5.700" fill="#b9b9b9"/><path d="M807.900 20.900l4.800 4.800M812.700 20.900l-4.800 4.800" stroke="#f4f4f4" stroke-width="1.700"/><path d="M823.3 17.5v12" stroke="#dddad6" stroke-width="1"/><path d="M824.0999999999999 17.5v12" stroke="#fafafa" stroke-width="0.6"/><path d="M832 23.300h8M836 19.300v8" stroke="#cfcfcf" stroke-width="1.800"/><path d="M850.600 23.300h8.600" stroke="#cfcfcf" stroke-width="1.800"/></svg>
<svg style="left:37px;top:78px" width="246" height="240" viewBox="37 78 246 240"><path d="M40.9 91.8h4.200l-2.100 2.900z" fill="#4a4a4a"/><path d="M49.200 88.6h4.600l2.400 2.400v6.600h-7z" fill="#f6f6f6" stroke="#9c9c9c" stroke-width="0.700"/><path d="M53.800 88.6v2.400h2.400" fill="none" stroke="#9c9c9c" stroke-width="0.600"/><path d="M50.600 91.5h3.800M50.600 92.7h2.600" stroke="#c8c8c8" stroke-width="0.500"/><path d="M50.400 95.3l2-1.300v2.600z" fill="#18c8d4"/><rect x="52.400" y="94.8" width="1" height="1" fill="#18c8d4"/><rect x="53.400" y="94.4" width="2.400" height="1.800" fill="#d818d0"/><path d="M51.8 101.5v3.800l3.100-1.900z" fill="#4a4a4a"/><path d="M59.600 102.4l3.400-1.800 4.200 1.400-3.400 2z" fill="#8c8c8c"/><path d="M59.600 102.4l4.200 1.600v2.200l-4.200-1.600z" fill="#666666"/><path d="M63.800 104.0l3.400-2v2.200l-3.400 2z" fill="#7c7c7c"/><path d="M59.200 106.0l8.400-4.400" stroke="#8a8a8a" stroke-width="0.600"/><path d="M51.8 111.7v3.800l3.100-1.900z" fill="#4a4a4a"/><path d="M59.600 112.6l3.400-1.800 4.200 1.400-3.400 2z" fill="#8c8c8c"/><path d="M59.600 112.6l4.200 1.600v2.200l-4.200-1.600z" fill="#666666"/><path d="M63.800 114.2l3.400-2v2.200l-3.400 2z" fill="#7c7c7c"/><path d="M59.200 127.4v-3.600l2.400-1.200v-1.600l2.800-1.400 3.400 1v6.800z" fill="#707070"/><path d="M61.600 122.7v4.800M64.400 121.1v6.400M59.200 125.1h8.600" stroke="#9a9a9a" stroke-width="0.500"/><path d="M65.200 122.3h1.200v1.200h-1.200z" fill="#d8d8d8"/><path d="M51.8 131.9v3.800l3.100-1.900z" fill="#4a4a4a"/><path d="M59.600 132.8l3.400-1.800 4.200 1.400-3.400 2z" fill="#8c8c8c"/><path d="M59.600 132.8l4.200 1.600v2.200l-4.200-1.600z" fill="#666666"/><path d="M63.800 134.4l3.400-2v2.200l-3.400 2z" fill="#7c7c7c"/><path d="M51.5 142.7h4.200l-2.100 2.900z" fill="#4a4a4a"/><path d="M59.600 142.9l3.400-1.800 4.200 1.400-3.400 2z" fill="#8c8c8c"/><path d="M59.600 142.9l4.200 1.600v2.200l-4.200-1.600z" fill="#666666"/><path d="M63.800 144.5l3.400-2v2.200l-3.400 2z" fill="#7c7c7c"/><path d="M70.600 152.4h5v5.600h-5z" fill="#fbfbfb" stroke="#c4c4c4" stroke-width="0.700"/><circle cx="76" cy="152.4" r="2.500" fill="#fdfdfd" stroke="#c4c4c4" stroke-width="0.700"/><path d="M71.400 155.8l2.400-2.200M72.600 153.4l1.400.2-.2 1.400" stroke="#cfcfcf" stroke-width="0.600" fill="none"/><path d="M51.8 162.2v3.800l3.100-1.900z" fill="#4a4a4a"/><path d="M59.600 163.1l3.400-1.800 4.200 1.400-3.400 2z" fill="#8c8c8c"/><path d="M59.600 163.1l4.200 1.600v2.200l-4.200-1.600z" fill="#666666"/><path d="M63.800 164.7l3.400-2v2.200l-3.400 2z" fill="#7c7c7c"/><path d="M51.5 173.1h4.200l-2.100 2.900z" fill="#4a4a4a"/><path d="M59.600 173.3l3.400-1.800 4.200 1.400-3.400 2z" fill="#8c8c8c"/><path d="M59.600 173.3l4.200 1.600v2.200l-4.200-1.600z" fill="#666666"/><path d="M63.800 174.9l3.400-2v2.200l-3.400 2z" fill="#7c7c7c"/><path d="M70.600 182.8h5v5.600h-5z" fill="#fbfbfb" stroke="#c4c4c4" stroke-width="0.700"/><circle cx="76" cy="182.8" r="2.500" fill="#fdfdfd" stroke="#c4c4c4" stroke-width="0.700"/><path d="M71.400 186.2l2.400-2.200M72.600 183.8l1.400.2-.2 1.400" stroke="#cfcfcf" stroke-width="0.600" fill="none"/><path d="M59.200 198.2v-3.600l2.400-1.200v-1.600l2.800-1.400 3.400 1v6.800z" fill="#707070"/><path d="M61.600 193.5v4.800M64.400 191.9v6.400M59.200 195.9h8.600" stroke="#9a9a9a" stroke-width="0.500"/><path d="M65.200 193.1h1.200v1.200h-1.200z" fill="#d8d8d8"/><path d="M51.5 203.4h4.200l-2.100 2.900z" fill="#4a4a4a"/><path d="M59.600 203.6l3.400-1.800 4.200 1.400-3.400 2z" fill="#8c8c8c"/><path d="M59.600 203.6l4.200 1.600v2.200l-4.200-1.600z" fill="#666666"/><path d="M63.800 205.2l3.400-2v2.200l-3.400 2z" fill="#7c7c7c"/><path d="M70.600 213.1h5v5.600h-5z" fill="#fbfbfb" stroke="#c4c4c4" stroke-width="0.700"/><circle cx="76" cy="213.1" r="2.500" fill="#fdfdfd" stroke="#c4c4c4" stroke-width="0.700"/><path d="M71.400 216.5l2.400-2.200M72.600 214.1l1.400.2-.2 1.400" stroke="#cfcfcf" stroke-width="0.600" fill="none"/><path d="M59.200 228.6v-3.600l2.400-1.200v-1.600l2.800-1.400 3.400 1v6.800z" fill="#707070"/><path d="M61.600 223.9v4.800M64.400 222.3v6.400M59.200 226.3h8.600" stroke="#9a9a9a" stroke-width="0.500"/><path d="M65.200 223.5h1.200v1.200h-1.200z" fill="#d8d8d8"/><path d="M51.5 233.8h4.200l-2.100 2.900z" fill="#4a4a4a"/><path d="M59.600 234.0l3.400-1.800 4.200 1.400-3.400 2z" fill="#2a6ae0"/><path d="M59.600 234.0l4.200 1.600v2.200l-4.200-1.600z" fill="#1c52c8"/><path d="M63.800 235.6l3.400-2v2.200l-3.400 2z" fill="#1846b0"/><ellipse cx="63.200" cy="233.9" rx="1.700" ry="1" fill="#e01828"/><path d="M70.600 243.5h5v5.600h-5z" fill="#fbfbfb" stroke="#c4c4c4" stroke-width="0.700"/><circle cx="76" cy="243.5" r="2.500" fill="#fdfdfd" stroke="#c4c4c4" stroke-width="0.700"/><path d="M71.400 246.9l2.400-2.200M72.600 244.5l1.400.2-.2 1.400" stroke="#cfcfcf" stroke-width="0.600" fill="none"/><path d="M60 253.2l1.200-1.200h5.400v5l-1.200 1.400h-5.400z" fill="#0a1270"/><path d="M60.200 253.3h5.200v5h-5.200z" fill="#1226ee"/><path d="M65.400 253.3l1-1.100v4.900l-1 1.200z" fill="#0c1aa8"/></svg>
<svg style="left:292.2px;top:610.2px" width="9" height="9" viewBox="0 0 10 10"><path d="M0.800 1h4v1.800h-2.200v1.400h1.600v1.600h-1.600v3h-1.800z" fill="#e0301a"/><circle cx="6" cy="6" r="2.500" fill="none" stroke="#1c3fb0" stroke-width="1.900" stroke-dasharray="1.300 0.660"/><circle cx="6" cy="6" r="2" fill="none" stroke="#1c3fb0" stroke-width="1.200"/></svg>
<svg style="left:436.6px;top:611.0px" width="8" height="8" viewBox="0 0 8 8"><path d="M1.400 1.400l5 5M6.400 1.400l-5 5" stroke="#5e5e5e" stroke-width="1.500"/></svg>
<svg style="left:453.8px;top:610.2px" width="9" height="9" viewBox="0 0 10 10"><path d="M0.800 1h4v1.800h-2.200v1.400h1.600v1.600h-1.600v3h-1.800z" fill="#e0301a"/><circle cx="6" cy="6" r="2.500" fill="none" stroke="#1c3fb0" stroke-width="1.900" stroke-dasharray="1.300 0.660"/><circle cx="6" cy="6" r="2" fill="none" stroke="#1c3fb0" stroke-width="1.200"/></svg>
<svg style="left:598.4px;top:611.0px" width="8" height="8" viewBox="0 0 8 8"><path d="M1.400 1.400l5 5M6.400 1.400l-5 5" stroke="#5e5e5e" stroke-width="1.500"/></svg>
<svg style="left:615.8px;top:610.2px" width="9" height="9" viewBox="0 0 10 10"><path d="M0.800 1h4v1.800h-2.200v1.400h1.600v1.600h-1.600v3h-1.800z" fill="#e0301a"/><circle cx="6" cy="6" r="2.500" fill="none" stroke="#1c3fb0" stroke-width="1.900" stroke-dasharray="1.300 0.660"/><circle cx="6" cy="6" r="2" fill="none" stroke="#1c3fb0" stroke-width="1.200"/></svg>
<svg style="left:761.2px;top:611.0px" width="8" height="8" viewBox="0 0 8 8"><path d="M1.400 1.400l5 5M6.400 1.400l-5 5" stroke="#5e5e5e" stroke-width="1.500"/></svg>
<svg style="left:777.8px;top:610.2px" width="9" height="9" viewBox="0 0 10 10"><path d="M0.800 1h4v1.800h-2.200v1.400h1.600v1.600h-1.600v3h-1.800z" fill="#e0301a"/><circle cx="6" cy="6" r="2.500" fill="none" stroke="#1c3fb0" stroke-width="1.900" stroke-dasharray="1.300 0.660"/><circle cx="6" cy="6" r="2" fill="none" stroke="#1c3fb0" stroke-width="1.200"/></svg>
<svg style="left:922.8px;top:611.0px" width="8" height="8" viewBox="0 0 8 8"><path d="M1.400 1.400l5 5M6.400 1.400l-5 5" stroke="#5e5e5e" stroke-width="1.500"/></svg>
<div class="sub" style="left:288px;top:34px;width:369px;height:287px"><div class="tb"><svg class="wi" width="10" height="10" viewBox="0 0 10 10"><path d="M0.8 1h4v1.8h-2.2v1.4h1.6v1.6h-1.6v3h-1.8z" fill="#e0301a"/><circle cx="6" cy="6" r="2.5" fill="none" stroke="#1c3fb0" stroke-width="1.9" stroke-dasharray="1.3 0.66"/><circle cx="6" cy="6" r="2" fill="none" stroke="#1c3fb0" stroke-width="1.2"/></svg><span class="wb" style="left:333.0px"><svg width="9" height="9"><path d="M2.3 6.6h4.4" stroke="#222" stroke-width="1.3"/></svg></span><span class="wb" style="left:343.7px"><svg width="9" height="9"><path d="M2.6 2.4h3.8v4h-3.8z" fill="none" stroke="#222" stroke-width="1"/><path d="M2.4 2.6h4.2" stroke="#222" stroke-width="1.4"/></svg></span><span class="wb" style="left:354.4px"><svg width="9" height="9"><path d="M2.5 2.7l4 4M6.5 2.7l-4 4" stroke="#111" stroke-width="1.5"/></svg></span></div><svg class="v3d" style="left:2px;top:12px" width="363" height="271" viewBox="291 47 363 271"><defs><linearGradient id="bg4" x1="0" y1="0" x2="0" y2="1"><stop offset="0" stop-color="#343468"/><stop offset="1" stop-color="#9897b1"/></linearGradient></defs><rect x="291" y="47" width="363" height="271" fill="url(#bg4)"/><linearGradient id="sv_a" x1="0" y1="0" x2="1" y2="0"><stop offset="0" stop-color="#089208"/><stop offset="0.15" stop-color="#0cc80c"/><stop offset="0.5" stop-color="#0ef80e"/><stop offset="0.85" stop-color="#0cc80c"/><stop offset="1" stop-color="#089208"/></linearGradient>
<linearGradient id="sv_b" x1="0" y1="0" x2="1" y2="0"><stop offset="0" stop-color="#067006"/><stop offset="0.2" stop-color="#0a960a"/><stop offset="0.5" stop-color="#0bb40b"/><stop offset="0.8" stop-color="#0a960a"/><stop offset="1" stop-color="#067006"/></linearGradient>
<linearGradient id="sv_c" x1="0" y1="0" x2="1" y2="0"><stop offset="0" stop-color="#067a06"/><stop offset="0.2" stop-color="#0aa60a"/><stop offset="0.5" stop-color="#0cc40c"/><stop offset="0.8" stop-color="#0aa60a"/><stop offset="1" stop-color="#067a06"/></linearGradient>
<path d="M376.8 170.2 H568.4 V177.0 H376.8 Z" fill="url(#sv_a)" stroke="#08160a" stroke-width="1.0" stroke-linejoin="round"/>
<path d="M376.8 177.0 H568.4 L563.8 182.35 H381.40000000000003 Z" fill="url(#sv_b)" stroke="#08160a" stroke-width="1.0" stroke-linejoin="round"/>
<path d="M381.40000000000003 182.35 H563.8 L568.4 187.7 H376.8 Z" fill="url(#sv_c)" stroke="#08160a" stroke-width="1.0" stroke-linejoin="round"/>
<path d="M376.8 187.7 H568.4 V194.5 H376.8 Z" fill="url(#sv_a)" stroke="#08160a" stroke-width="1.0" stroke-linejoin="round"/>
<path d="M406.8 181.75 H543.4" stroke="#0a3a0a" stroke-width="0.6" stroke-dasharray="1.5 9 2 14 1 6" fill="none"/><path d="M640.5 305 l0 -9.5" stroke="#1c1ca8" stroke-width="1.3" fill="none"/><text x="642.9" y="295.5" font-size="5.8" fill="#24242a" font-family="Liberation Sans, sans-serif">Z</text><path d="M640.5 305 l9 0" stroke="#b01c1c" stroke-width="1.3" fill="none"/><text x="651.1" y="304.5" font-size="5.8" fill="#24242a" font-family="Liberation Sans, sans-serif">X</text><path d="M640.5 305 l0 0" stroke="#000" stroke-width="1.3" fill="none"/><text x="642.3" y="303.8" font-size="5.8" fill="#24242a" font-family="Liberation Sans, sans-serif">Y</text></svg></div><div class="sub" style="left:656px;top:34px;width:368px;height:287px"><div class="tb"><svg class="wi" width="10" height="10" viewBox="0 0 10 10"><path d="M0.8 1h4v1.8h-2.2v1.4h1.6v1.6h-1.6v3h-1.8z" fill="#e0301a"/><circle cx="6" cy="6" r="2.5" fill="none" stroke="#1c3fb0" stroke-width="1.9" stroke-dasharray="1.3 0.66"/><circle cx="6" cy="6" r="2" fill="none" stroke="#1c3fb0" stroke-width="1.2"/></svg><span class="wb" style="left:332.0px"><svg width="9" height="9"><path d="M2.3 6.6h4.4" stroke="#222" stroke-width="1.3"/></svg></span><span class="wb" style="left:342.7px"><svg width="9" height="9"><path d="M2.6 2.4h3.8v4h-3.8z" fill="none" stroke="#222" stroke-width="1"/><path d="M2.4 2.6h4.2" stroke="#222" stroke-width="1.4"/></svg></span><span class="wb" style="left:353.4px"><svg width="9" height="9"><path d="M2.5 2.7l4 4M6.5 2.7l-4 4" stroke="#111" stroke-width="1.5"/></svg></span></div><svg class="v3d" style="left:2px;top:12px" width="363" height="271" viewBox="659 47 363 271"><defs><linearGradient id="bg3" x1="0" y1="0" x2="0" y2="1"><stop offset="0" stop-color="#343468"/><stop offset="1" stop-color="#9897b1"/></linearGradient></defs><rect x="659" y="47" width="363" height="271" fill="url(#bg3)"/><path d="M838.5 114.5 L842.9 114.5 L842.9 133.1 L838.5 133.1Z" fill="#09b009" stroke="#09b009" stroke-width="0.5"/>
<path d="M834 114.6 L838.5 114.5 L838.5 133.1 L834 133.2Z" fill="#09ae09" stroke="#09ae09" stroke-width="0.5"/>
<path d="M842.9 114.5 L847.4 114.6 L847.4 133.3 L842.9 133.1Z" fill="#09b109" stroke="#09b109" stroke-width="0.5"/>
<path d="M829.5 114.9 L834 114.6 L834 133.2 L829.5 133.6Z" fill="#09ac09" stroke="#09ac09" stroke-width="0.5"/>
<path d="M847.4 114.6 L851.9 115 L851.9 133.6 L847.4 133.3Z" fill="#09b209" stroke="#09b209" stroke-width="0.5"/>
<path d="M825.1 115.4 L829.5 114.9 L829.5 133.6 L825.1 134Z" fill="#09aa09" stroke="#09aa09" stroke-width="0.5"/>
<path d="M851.9 115 L856.3 115.5 L856.3 134.1 L851.9 133.6Z" fill="#09b209" stroke="#09b209" stroke-width="0.5"/>
<path d="M820.7 116 L825.1 115.4 L825.1 134 L820.7 134.7Z" fill="#09a809" stroke="#09a809" stroke-width="0.5"/>
<path d="M856.3 115.5 L860.7 116.1 L860.7 134.8 L856.3 134.1Z" fill="#09b209" stroke="#09b209" stroke-width="0.5"/>
<path d="M816.3 116.8 L820.7 116 L820.7 134.7 L816.3 135.5Z" fill="#09a509" stroke="#09a509" stroke-width="0.5"/>
<path d="M860.7 116.1 L865 116.9 L865 135.6 L860.7 134.8Z" fill="#09b209" stroke="#09b209" stroke-width="0.5"/>
<path d="M812.1 117.8 L816.3 116.8 L816.3 135.5 L812.1 136.4Z" fill="#08a208" stroke="#08a208" stroke-width="0.5"/>
<path d="M865 116.9 L869.3 117.9 L869.3 136.5 L865 135.6Z" fill="#09b109" stroke="#09b109" stroke-width="0.5"/>
<path d="M807.9 118.9 L812.1 117.8 L812.1 136.4 L807.9 137.5Z" fill="#089f08" stroke="#089f08" stroke-width="0.5"/>
<path d="M869.3 117.9 L873.5 119 L873.5 137.7 L869.3 136.5Z" fill="#09b009" stroke="#09b009" stroke-width="0.5"/>
<path d="M803.8 120.1 L807.9 118.9 L807.9 137.5 L803.8 138.7Z" fill="#089b08" stroke="#089b08" stroke-width="0.5"/>
<path d="M873.5 119 L877.6 120.3 L877.6 138.9 L873.5 137.7Z" fill="#09af09" stroke="#09af09" stroke-width="0.5"/>
<path d="M799.8 121.5 L803.8 120.1 L803.8 138.7 L799.8 140.1Z" fill="#089708" stroke="#089708" stroke-width="0.5"/>
<path d="M877.6 120.3 L881.6 121.7 L881.6 140.3 L877.6 138.9Z" fill="#09ad09" stroke="#09ad09" stroke-width="0.5"/>
<path d="M795.9 123 L799.8 121.5 L799.8 140.1 L795.9 141.7Z" fill="#089308" stroke="#089308" stroke-width="0.5"/>
<path d="M881.6 121.7 L885.4 123.3 L885.4 141.9 L881.6 140.3Z" fill="#09ab09" stroke="#09ab09" stroke-width="0.5"/>
<path d="M792.1 124.7 L795.9 123 L795.9 141.7 L792.1 143.4Z" fill="#078e07" stroke="#078e07" stroke-width="0.5"/>
<path d="M885.4 123.3 L889.2 125 L889.2 143.6 L885.4 141.9Z" fill="#09a909" stroke="#09a909" stroke-width="0.5"/>
<path d="M788.5 126.5 L792.1 124.7 L792.1 143.4 L788.5 145.2Z" fill="#078907" stroke="#078907" stroke-width="0.5"/>
<path d="M889.2 125 L892.8 126.8 L892.8 145.4 L889.2 143.6Z" fill="#09a609" stroke="#09a609" stroke-width="0.5"/>
<path d="M785 128.5 L788.5 126.5 L788.5 145.2 L785 147.1Z" fill="#078407" stroke="#078407" stroke-width="0.5"/>
<path d="M892.8 126.8 L896.3 128.7 L896.3 147.4 L892.8 145.4Z" fill="#09a309" stroke="#09a309" stroke-width="0.5"/>
<path d="M781.6 130.5 L785 128.5 L785 147.1 L781.6 149.2Z" fill="#077f07" stroke="#077f07" stroke-width="0.5"/>
<path d="M896.3 128.7 L899.6 130.8 L899.6 149.4 L896.3 147.4Z" fill="#08a008" stroke="#08a008" stroke-width="0.5"/>
<path d="M778.4 132.7 L781.6 130.5 L781.6 149.2 L778.4 151.3Z" fill="#067a06" stroke="#067a06" stroke-width="0.5"/>
<path d="M899.6 130.8 L902.8 133 L902.8 151.6 L899.6 149.4Z" fill="#089d08" stroke="#089d08" stroke-width="0.5"/>
<path d="M775.4 135 L778.4 132.7 L778.4 151.3 L775.4 153.6Z" fill="#067406" stroke="#067406" stroke-width="0.5"/>
<path d="M902.8 133 L905.8 135.3 L905.8 153.9 L902.8 151.6Z" fill="#089908" stroke="#089908" stroke-width="0.5"/>
<path d="M772.6 137.4 L775.4 135 L775.4 153.6 L772.6 156Z" fill="#066e06" stroke="#066e06" stroke-width="0.5"/>
<path d="M905.8 135.3 L908.6 137.7 L908.6 156.3 L905.8 153.9Z" fill="#089508" stroke="#089508" stroke-width="0.5"/>
<path d="M769.9 139.9 L772.6 137.4 L772.6 156 L769.9 158.5Z" fill="#056805" stroke="#056805" stroke-width="0.5"/>
<path d="M908.6 137.7 L911.2 140.2 L911.2 158.9 L908.6 156.3Z" fill="#079007" stroke="#079007" stroke-width="0.5"/>
<path d="M767.5 142.5 L769.9 139.9 L769.9 158.5 L767.5 161.1Z" fill="#056205" stroke="#056205" stroke-width="0.5"/>
<path d="M911.2 140.2 L913.6 142.8 L913.6 161.5 L911.2 158.9Z" fill="#078b07" stroke="#078b07" stroke-width="0.5"/>
<path d="M765.2 145.1 L767.5 142.5 L767.5 161.1 L765.2 163.8Z" fill="#055c05" stroke="#055c05" stroke-width="0.5"/>
<path d="M913.6 142.8 L915.9 145.5 L915.9 164.1 L913.6 161.5Z" fill="#078707" stroke="#078707" stroke-width="0.5"/>
<path d="M763.2 147.9 L765.2 145.1 L765.2 163.8 L763.2 166.5Z" fill="#045504" stroke="#045504" stroke-width="0.5"/>
<path d="M915.9 145.5 L917.9 148.3 L917.9 166.9 L915.9 164.1Z" fill="#078107" stroke="#078107" stroke-width="0.5"/>
<path d="M761.3 150.7 L763.2 147.9 L763.2 166.5 L761.3 169.3Z" fill="#044f04" stroke="#044f04" stroke-width="0.5"/>
<path d="M917.9 148.3 L919.7 151.1 L919.7 169.7 L917.9 166.9Z" fill="#067c06" stroke="#067c06" stroke-width="0.5"/>
<path d="M759.7 153.6 L761.3 150.7 L761.3 169.3 L759.7 172.2Z" fill="#044804" stroke="#044804" stroke-width="0.5"/>
<path d="M919.7 151.1 L921.3 154 L921.3 172.6 L919.7 169.7Z" fill="#067706" stroke="#067706" stroke-width="0.5"/>
<path d="M758.3 156.5 L759.7 153.6 L759.7 172.2 L758.3 175.2Z" fill="#034203" stroke="#034203" stroke-width="0.5"/>
<path d="M921.3 154 L922.7 156.9 L922.7 175.6 L921.3 172.6Z" fill="#067106" stroke="#067106" stroke-width="0.5"/>
<path d="M757.1 159.5 L758.3 156.5 L758.3 175.2 L757.1 178.1Z" fill="#033b03" stroke="#033b03" stroke-width="0.5"/>
<path d="M922.7 156.9 L923.8 159.9 L923.8 178.5 L922.7 175.6Z" fill="#056b05" stroke="#056b05" stroke-width="0.5"/>
<path d="M756.2 162.5 L757.1 159.5 L757.1 178.1 L756.2 181.2Z" fill="#023402" stroke="#023402" stroke-width="0.5"/>
<path d="M923.8 159.9 L924.7 162.9 L924.7 181.6 L923.8 178.5Z" fill="#056505" stroke="#056505" stroke-width="0.5"/>
<path d="M755.5 165.6 L756.2 162.5 L756.2 181.2 L755.5 184.2Z" fill="#023302" stroke="#023302" stroke-width="0.5"/>
<path d="M924.7 162.9 L925.4 166 L925.4 184.6 L924.7 181.6Z" fill="#055f05" stroke="#055f05" stroke-width="0.5"/>
<path d="M755 168.7 L755.5 165.6 L755.5 184.2 L755 187.3Z" fill="#023302" stroke="#023302" stroke-width="0.5"/>
<path d="M925.4 166 L925.9 169.1 L925.9 187.7 L925.4 184.6Z" fill="#045804" stroke="#045804" stroke-width="0.5"/>
<path d="M754.7 171.7 L755 168.7 L755 187.3 L754.7 190.4Z" fill="#023302" stroke="#023302" stroke-width="0.5"/>
<path d="M925.9 169.1 L926.1 172.2 L926.1 190.8 L925.9 187.7Z" fill="#045204" stroke="#045204" stroke-width="0.5"/>
<path d="M838.5 114.5 L842.9 114.5 M838.5 133.1 L842.9 133.1M834 114.6 L838.5 114.5 M834 133.2 L838.5 133.1M842.9 114.5 L847.4 114.6 M842.9 133.1 L847.4 133.3M829.5 114.9 L834 114.6 M829.5 133.6 L834 133.2M847.4 114.6 L851.9 115 M847.4 133.3 L851.9 133.6M825.1 115.4 L829.5 114.9 M825.1 134 L829.5 133.6M851.9 115 L856.3 115.5 M851.9 133.6 L856.3 134.1M820.7 116 L825.1 115.4 M820.7 134.7 L825.1 134M856.3 115.5 L860.7 116.1 M856.3 134.1 L860.7 134.8M816.3 116.8 L820.7 116 M816.3 135.5 L820.7 134.7M860.7 116.1 L865 116.9 M860.7 134.8 L865 135.6M812.1 117.8 L816.3 116.8 M812.1 136.4 L816.3 135.5M865 116.9 L869.3 117.9 M865 135.6 L869.3 136.5M807.9 118.9 L812.1 117.8 M807.9 137.5 L812.1 136.4M869.3 117.9 L873.5 119 M869.3 136.5 L873.5 137.7M803.8 120.1 L807.9 118.9 M803.8 138.7 L807.9 137.5M873.5 119 L877.6 120.3 M873.5 137.7 L877.6 138.9M799.8 121.5 L803.8 120.1 M799.8 140.1 L803.8 138.7M877.6 120.3 L881.6 121.7 M877.6 138.9 L881.6 140.3M795.9 123 L799.8 121.5 M795.9 141.7 L799.8 140.1M881.6 121.7 L885.4 123.3 M881.6 140.3 L885.4 141.9M792.1 124.7 L795.9 123 M792.1 143.4 L795.9 141.7M885.4 123.3 L889.2 125 M885.4 141.9 L889.2 143.6M788.5 126.5 L792.1 124.7 M788.5 145.2 L792.1 143.4M889.2 125 L892.8 126.8 M889.2 143.6 L892.8 145.4M785 128.5 L788.5 126.5 M785 147.1 L788.5 145.2M892.8 126.8 L896.3 128.7 M892.8 145.4 L896.3 147.4M781.6 130.5 L785 128.5 M781.6 149.2 L785 147.1M896.3 128.7 L899.6 130.8 M896.3 147.4 L899.6 149.4M778.4 132.7 L781.6 130.5 M778.4 151.3 L781.6 149.2M899.6 130.8 L902.8 133 M899.6 149.4 L902.8 151.6M775.4 135 L778.4 132.7 M775.4 153.6 L778.4 151.3M902.8 133 L905.8 135.3 M902.8 151.6 L905.8 153.9M772.6 137.4 L775.4 135 M772.6 156 L775.4 153.6M905.8 135.3 L908.6 137.7 M905.8 153.9 L908.6 156.3M769.9 139.9 L772.6 137.4 M769.9 158.5 L772.6 156M908.6 137.7 L911.2 140.2 M908.6 156.3 L911.2 158.9M767.5 142.5 L769.9 139.9 M767.5 161.1 L769.9 158.5M911.2 140.2 L913.6 142.8 M911.2 158.9 L913.6 161.5M765.2 145.1 L767.5 142.5 M765.2 163.8 L767.5 161.1M913.6 142.8 L915.9 145.5 M913.6 161.5 L915.9 164.1M763.2 147.9 L765.2 145.1 M763.2 166.5 L765.2 163.8M915.9 145.5 L917.9 148.3 M915.9 164.1 L917.9 166.9M761.3 150.7 L763.2 147.9 M761.3 169.3 L763.2 166.5M917.9 148.3 L919.7 151.1 M917.9 166.9 L919.7 169.7M759.7 153.6 L761.3 150.7 M759.7 172.2 L761.3 169.3M919.7 151.1 L921.3 154 M919.7 169.7 L921.3 172.6M758.3 156.5 L759.7 153.6 M758.3 175.2 L759.7 172.2M921.3 154 L922.7 156.9 M921.3 172.6 L922.7 175.6M757.1 159.5 L758.3 156.5 M757.1 178.1 L758.3 175.2M922.7 156.9 L923.8 159.9 M922.7 175.6 L923.8 178.5M756.2 162.5 L757.1 159.5 M756.2 181.2 L757.1 178.1M923.8 159.9 L924.7 162.9 M923.8 178.5 L924.7 181.6M755.5 165.6 L756.2 162.5 M755.5 184.2 L756.2 181.2M924.7 162.9 L925.4 166 M924.7 181.6 L925.4 184.6M755 168.7 L755.5 165.6 M755 187.3 L755.5 184.2M925.4 166 L925.9 169.1 M925.4 184.6 L925.9 187.7M754.7 171.7 L755 168.7 M754.7 190.4 L755 187.3M925.9 169.1 L926.1 172.2 M925.9 187.7 L926.1 190.8" fill="none" stroke="#08160a" stroke-width="1.0" stroke-linecap="round"/>
<path d="M840 171.5 L840.9 171.5 L840.9 180.5 L840 180.5Z" fill="#09b009" stroke="#09b009" stroke-width="0.5"/>
<path d="M839.1 171.5 L840 171.5 L840 180.5 L839.1 180.5Z" fill="#09ae09" stroke="#09ae09" stroke-width="0.5"/>
<path d="M840.9 171.5 L841.8 171.5 L841.8 180.5 L840.9 180.5Z" fill="#09b109" stroke="#09b109" stroke-width="0.5"/>
<path d="M838.2 171.5 L839.1 171.5 L839.1 180.5 L838.2 180.6Z" fill="#09ac09" stroke="#09ac09" stroke-width="0.5"/>
<path d="M841.8 171.5 L842.7 171.6 L842.7 180.6 L841.8 180.5Z" fill="#09b209" stroke="#09b209" stroke-width="0.5"/>
<path d="M837.4 171.6 L838.2 171.5 L838.2 180.6 L837.4 180.6Z" fill="#09aa09" stroke="#09aa09" stroke-width="0.5"/>
<path d="M842.7 171.6 L843.5 171.7 L843.5 180.7 L842.7 180.6Z" fill="#09b209" stroke="#09b209" stroke-width="0.5"/>
<path d="M836.5 171.8 L837.4 171.6 L837.4 180.6 L836.5 180.8Z" fill="#09a809" stroke="#09a809" stroke-width="0.5"/>
<path d="M843.5 171.7 L844.4 171.8 L844.4 180.8 L843.5 180.7Z" fill="#09b209" stroke="#09b209" stroke-width="0.5"/>
<path d="M835.6 171.9 L836.5 171.8 L836.5 180.8 L835.6 180.9Z" fill="#09a509" stroke="#09a509" stroke-width="0.5"/>
<path d="M844.4 171.8 L845.3 171.9 L845.3 180.9 L844.4 180.8Z" fill="#09b209" stroke="#09b209" stroke-width="0.5"/>
<path d="M834.8 172.1 L835.6 171.9 L835.6 180.9 L834.8 181.1Z" fill="#08a208" stroke="#08a208" stroke-width="0.5"/>
<path d="M845.3 171.9 L846.1 172.1 L846.1 181.1 L845.3 180.9Z" fill="#09b109" stroke="#09b109" stroke-width="0.5"/>
<path d="M834 172.3 L834.8 172.1 L834.8 181.1 L834 181.3Z" fill="#089f08" stroke="#089f08" stroke-width="0.5"/>
<path d="M846.1 172.1 L846.9 172.4 L846.9 181.4 L846.1 181.1Z" fill="#09b009" stroke="#09b009" stroke-width="0.5"/>
<path d="M833.2 172.6 L834 172.3 L834 181.3 L833.2 181.6Z" fill="#089b08" stroke="#089b08" stroke-width="0.5"/>
<path d="M846.9 172.4 L847.8 172.6 L847.8 181.6 L846.9 181.4Z" fill="#09af09" stroke="#09af09" stroke-width="0.5"/>
<path d="M832.4 172.8 L833.2 172.6 L833.2 181.6 L832.4 181.9Z" fill="#089708" stroke="#089708" stroke-width="0.5"/>
<path d="M847.8 172.6 L848.5 172.9 L848.5 181.9 L847.8 181.6Z" fill="#09ad09" stroke="#09ad09" stroke-width="0.5"/>
<path d="M831.6 173.2 L832.4 172.8 L832.4 181.9 L831.6 182.2Z" fill="#089308" stroke="#089308" stroke-width="0.5"/>
<path d="M848.5 172.9 L849.3 173.2 L849.3 182.2 L848.5 181.9Z" fill="#09ab09" stroke="#09ab09" stroke-width="0.5"/>
<path d="M830.8 173.5 L831.6 173.2 L831.6 182.2 L830.8 182.5Z" fill="#078e07" stroke="#078e07" stroke-width="0.5"/>
<path d="M849.3 173.2 L850 173.5 L850 182.5 L849.3 182.2Z" fill="#09a909" stroke="#09a909" stroke-width="0.5"/>
<path d="M830.1 173.8 L830.8 173.5 L830.8 182.5 L830.1 182.8Z" fill="#078907" stroke="#078907" stroke-width="0.5"/>
<path d="M850 173.5 L850.8 173.9 L850.8 182.9 L850 182.5Z" fill="#09a609" stroke="#09a609" stroke-width="0.5"/>
<path d="M829.4 174.2 L830.1 173.8 L830.1 182.8 L829.4 183.2Z" fill="#078407" stroke="#078407" stroke-width="0.5"/>
<path d="M850.8 173.9 L851.5 174.3 L851.5 183.3 L850.8 182.9Z" fill="#09a309" stroke="#09a309" stroke-width="0.5"/>
<path d="M828.8 174.6 L829.4 174.2 L829.4 183.2 L828.8 183.6Z" fill="#077f07" stroke="#077f07" stroke-width="0.5"/>
<path d="M851.5 174.3 L852.1 174.7 L852.1 183.7 L851.5 183.3Z" fill="#08a008" stroke="#08a008" stroke-width="0.5"/>
<path d="M828.1 175.1 L828.8 174.6 L828.8 183.6 L828.1 184.1Z" fill="#067a06" stroke="#067a06" stroke-width="0.5"/>
<path d="M852.1 174.7 L852.7 175.1 L852.7 184.1 L852.1 183.7Z" fill="#089d08" stroke="#089d08" stroke-width="0.5"/>
<path d="M827.6 175.5 L828.1 175.1 L828.1 184.1 L827.6 184.5Z" fill="#067406" stroke="#067406" stroke-width="0.5"/>
<path d="M852.7 175.1 L853.3 175.6 L853.3 184.6 L852.7 184.1Z" fill="#089908" stroke="#089908" stroke-width="0.5"/>
<path d="M827 176 L827.6 175.5 L827.6 184.5 L827 185Z" fill="#066e06" stroke="#066e06" stroke-width="0.5"/>
<path d="M853.3 175.6 L853.9 176.1 L853.9 185.1 L853.3 184.6Z" fill="#089508" stroke="#089508" stroke-width="0.5"/>
<path d="M826.5 176.5 L827 176 L827 185 L826.5 185.5Z" fill="#056805" stroke="#056805" stroke-width="0.5"/>
<path d="M853.9 176.1 L854.4 176.5 L854.4 185.6 L853.9 185.1Z" fill="#079007" stroke="#079007" stroke-width="0.5"/>
<path d="M826 177 L826.5 176.5 L826.5 185.5 L826 186Z" fill="#056205" stroke="#056205" stroke-width="0.5"/>
<path d="M854.4 176.5 L854.9 177.1 L854.9 186.1 L854.4 185.6Z" fill="#078b07" stroke="#078b07" stroke-width="0.5"/>
<path d="M825.5 177.5 L826 177 L826 186 L825.5 186.5Z" fill="#055c05" stroke="#055c05" stroke-width="0.5"/>
<path d="M854.9 177.1 L855.3 177.6 L855.3 186.6 L854.9 186.1Z" fill="#078707" stroke="#078707" stroke-width="0.5"/>
<path d="M825.1 178.1 L825.5 177.5 L825.5 186.5 L825.1 187.1Z" fill="#045504" stroke="#045504" stroke-width="0.5"/>
<path d="M855.3 177.6 L855.7 178.1 L855.7 187.1 L855.3 186.6Z" fill="#078107" stroke="#078107" stroke-width="0.5"/>
<path d="M824.8 178.6 L825.1 178.1 L825.1 187.1 L824.8 187.6Z" fill="#044f04" stroke="#044f04" stroke-width="0.5"/>
<path d="M855.7 178.1 L856.1 178.7 L856.1 187.7 L855.7 187.1Z" fill="#067c06" stroke="#067c06" stroke-width="0.5"/>
<path d="M824.4 179.2 L824.8 178.6 L824.8 187.6 L824.4 188.2Z" fill="#044804" stroke="#044804" stroke-width="0.5"/>
<path d="M856.1 178.7 L856.4 179.3 L856.4 188.3 L856.1 187.7Z" fill="#067706" stroke="#067706" stroke-width="0.5"/>
<path d="M824.2 179.8 L824.4 179.2 L824.4 188.2 L824.2 188.8Z" fill="#034203" stroke="#034203" stroke-width="0.5"/>
<path d="M856.4 179.3 L856.7 179.9 L856.7 188.9 L856.4 188.3Z" fill="#067106" stroke="#067106" stroke-width="0.5"/>
<path d="M823.9 180.4 L824.2 179.8 L824.2 188.8 L823.9 189.4Z" fill="#033b03" stroke="#033b03" stroke-width="0.5"/>
<path d="M856.7 179.9 L856.9 180.4 L856.9 189.4 L856.7 188.9Z" fill="#056b05" stroke="#056b05" stroke-width="0.5"/>
<path d="M823.7 181 L823.9 180.4 L823.9 189.4 L823.7 190Z" fill="#023402" stroke="#023402" stroke-width="0.5"/>
<path d="M866.9 180.7 L867.8 180.7 L867.8 189.7 L866.9 189.7Z" fill="#09b209" stroke="#09b209" stroke-width="0.5"/>
<path d="M866 180.8 L866.9 180.7 L866.9 189.7 L866 189.8Z" fill="#09a909" stroke="#09a909" stroke-width="0.5"/>
<path d="M856.9 180.4 L857.1 181 L857.1 190 L856.9 189.4Z" fill="#056505" stroke="#056505" stroke-width="0.5"/>
<path d="M867.8 180.7 L868.7 181 L868.7 190 L867.8 189.7Z" fill="#09ae09" stroke="#09ae09" stroke-width="0.5"/>
<path d="M865.2 181.1 L866 180.8 L866 189.8 L865.2 190.1Z" fill="#089508" stroke="#089508" stroke-width="0.5"/>
<path d="M868.7 181 L869.3 181.5 L869.3 190.5 L868.7 190Z" fill="#089e08" stroke="#089e08" stroke-width="0.5"/>
<path d="M823.6 181.6 L823.7 181 L823.7 190 L823.6 190.6Z" fill="#023302" stroke="#023302" stroke-width="0.5"/>
<path d="M864.5 181.5 L865.2 181.1 L865.2 190.1 L864.5 190.5Z" fill="#067706" stroke="#067706" stroke-width="0.5"/>
<path d="M857.1 181 L857.2 181.6 L857.2 190.7 L857.1 190Z" fill="#055f05" stroke="#055f05" stroke-width="0.5"/>
<path d="M813.8 181.5 L814.7 181.6 L814.7 190.6 L813.8 190.5Z" fill="#09b209" stroke="#09b209" stroke-width="0.5"/>
<path d="M812.8 181.6 L813.8 181.5 L813.8 190.5 L812.8 190.6Z" fill="#09a909" stroke="#09a909" stroke-width="0.5"/>
<path d="M814.7 181.6 L815.5 181.9 L815.5 190.9 L814.7 190.6Z" fill="#09ae09" stroke="#09ae09" stroke-width="0.5"/>
<path d="M869.3 181.5 L869.8 182 L869.8 191 L869.3 190.5Z" fill="#078407" stroke="#078407" stroke-width="0.5"/>
<path d="M812 181.9 L812.8 181.6 L812.8 190.6 L812 190.9Z" fill="#089508" stroke="#089508" stroke-width="0.5"/>
<path d="M864.1 182.1 L864.5 181.5 L864.5 190.5 L864.1 191.1Z" fill="#045204" stroke="#045204" stroke-width="0.5"/>
<path d="M823.5 182.2 L823.6 181.6 L823.6 190.6 L823.5 191.2Z" fill="#023302" stroke="#023302" stroke-width="0.5"/>
<path d="M857.2 181.6 L857.3 182.3 L857.3 191.3 L857.2 190.7Z" fill="#045804" stroke="#045804" stroke-width="0.5"/>
<path d="M815.5 181.9 L816.2 182.3 L816.2 191.3 L815.5 190.9Z" fill="#089e08" stroke="#089e08" stroke-width="0.5"/>
<path d="M811.4 182.4 L812 181.9 L812 190.9 L811.4 191.4Z" fill="#067706" stroke="#067706" stroke-width="0.5"/>
<path d="M869.8 182 L870 182.7 L870 191.7 L869.8 191Z" fill="#056205" stroke="#056205" stroke-width="0.5"/>
<path d="M864 182.8 L864.1 182.1 L864.1 191.1 L864 191.8Z" fill="#023302" stroke="#023302" stroke-width="0.5"/>
<path d="M823.5 182.8 L823.5 182.2 L823.5 191.2 L823.5 191.8Z" fill="#023302" stroke="#023302" stroke-width="0.5"/>
<path d="M857.3 182.3 L857.3 182.9 L857.3 191.9 L857.3 191.3Z" fill="#045204" stroke="#045204" stroke-width="0.5"/>
<path d="M816.2 182.3 L816.6 182.9 L816.6 191.9 L816.2 191.3Z" fill="#078407" stroke="#078407" stroke-width="0.5"/>
<path d="M811 183 L811.4 182.4 L811.4 191.4 L811 192Z" fill="#045204" stroke="#045204" stroke-width="0.5"/>
<path d="M816.6 182.9 L816.8 183.5 L816.8 192.5 L816.6 191.9Z" fill="#056205" stroke="#056205" stroke-width="0.5"/>
<path d="M810.8 183.6 L811 183 L811 192 L810.8 192.6Z" fill="#023302" stroke="#023302" stroke-width="0.5"/>
<path d="M848.4 193.4 L857.7 205.3 L857.7 214.3 L848.4 202.4Z" fill="#078407" stroke="#078407" stroke-width="0.5"/>
<path d="M824.5 205.8 L833 193.7 L833 202.7 L824.5 214.9Z" fill="#045204" stroke="#045204" stroke-width="0.5"/>
<path d="M840 171.5 L840.9 171.5 M840 180.5 L840.9 180.5M839.1 171.5 L840 171.5 M839.1 180.5 L840 180.5M840.9 171.5 L841.8 171.5 M840.9 180.5 L841.8 180.5M838.2 171.5 L839.1 171.5 M838.2 180.6 L839.1 180.5M841.8 171.5 L842.7 171.6 M841.8 180.5 L842.7 180.6M837.4 171.6 L838.2 171.5 M837.4 180.6 L838.2 180.6M842.7 171.6 L843.5 171.7 M842.7 180.6 L843.5 180.7M836.5 171.8 L837.4 171.6 M836.5 180.8 L837.4 180.6M843.5 171.7 L844.4 171.8 M843.5 180.7 L844.4 180.8M835.6 171.9 L836.5 171.8 M835.6 180.9 L836.5 180.8M844.4 171.8 L845.3 171.9 M844.4 180.8 L845.3 180.9M834.8 172.1 L835.6 171.9 M834.8 181.1 L835.6 180.9M845.3 171.9 L846.1 172.1 M845.3 180.9 L846.1 181.1M834 172.3 L834.8 172.1 M834 181.3 L834.8 181.1M846.1 172.1 L846.9 172.4 M846.1 181.1 L846.9 181.4M833.2 172.6 L834 172.3 M833.2 181.6 L834 181.3M846.9 172.4 L847.8 172.6 M846.9 181.4 L847.8 181.6M832.4 172.8 L833.2 172.6 M832.4 181.9 L833.2 181.6M847.8 172.6 L848.5 172.9 M847.8 181.6 L848.5 181.9M831.6 173.2 L832.4 172.8 M831.6 182.2 L832.4 181.9M848.5 172.9 L849.3 173.2 M848.5 181.9 L849.3 182.2M830.8 173.5 L831.6 173.2 M830.8 182.5 L831.6 182.2M849.3 173.2 L850 173.5 M849.3 182.2 L850 182.5M830.1 173.8 L830.8 173.5 M830.1 182.8 L830.8 182.5M850 173.5 L850.8 173.9 M850 182.5 L850.8 182.9M829.4 174.2 L830.1 173.8 M829.4 183.2 L830.1 182.8M850.8 173.9 L851.5 174.3 M850.8 182.9 L851.5 183.3M828.8 174.6 L829.4 174.2 M828.8 183.6 L829.4 183.2M851.5 174.3 L852.1 174.7 M851.5 183.3 L852.1 183.7M828.1 175.1 L828.8 174.6 M828.1 184.1 L828.8 183.6M852.1 174.7 L852.7 175.1 M852.1 183.7 L852.7 184.1M827.6 175.5 L828.1 175.1 M827.6 184.5 L828.1 184.1M852.7 175.1 L853.3 175.6 M852.7 184.1 L853.3 184.6M827 176 L827.6 175.5 M827 185 L827.6 184.5M853.3 175.6 L853.9 176.1 M853.3 184.6 L853.9 185.1M826.5 176.5 L827 176 M826.5 185.5 L827 185M853.9 176.1 L854.4 176.5 M853.9 185.1 L854.4 185.6M826 177 L826.5 176.5 M826 186 L826.5 185.5M854.4 176.5 L854.9 177.1 M854.4 185.6 L854.9 186.1M825.5 177.5 L826 177 M825.5 186.5 L826 186M854.9 177.1 L855.3 177.6 M854.9 186.1 L855.3 186.6M825.1 178.1 L825.5 177.5 M825.1 187.1 L825.5 186.5M855.3 177.6 L855.7 178.1 M855.3 186.6 L855.7 187.1M824.8 178.6 L825.1 178.1 M824.8 187.6 L825.1 187.1M855.7 178.1 L856.1 178.7 M855.7 187.1 L856.1 187.7M824.4 179.2 L824.8 178.6 M824.4 188.2 L824.8 187.6M856.1 178.7 L856.4 179.3 M856.1 187.7 L856.4 188.3M824.2 179.8 L824.4 179.2 M824.2 188.8 L824.4 188.2M856.4 179.3 L856.7 179.9 M856.4 188.3 L856.7 188.9M823.9 180.4 L824.2 179.8 M823.9 189.4 L824.2 188.8M856.7 179.9 L856.9 180.4 M856.7 188.9 L856.9 189.4M823.7 181 L823.9 180.4 M823.7 190 L823.9 189.4M866.9 180.7 L867.8 180.7 M866.9 189.7 L867.8 189.7M866 180.8 L866.9 180.7 M866 189.8 L866.9 189.7M856.9 180.4 L857.1 181 M856.9 189.4 L857.1 190M867.8 180.7 L868.7 181 M867.8 189.7 L868.7 190M865.2 181.1 L866 180.8 M865.2 190.1 L866 189.8M868.7 181 L869.3 181.5 M868.7 190 L869.3 190.5M823.6 181.6 L823.7 181 M823.6 190.6 L823.7 190M864.5 181.5 L865.2 181.1 M864.5 190.5 L865.2 190.1M857.1 181 L857.2 181.6 M857.1 190 L857.2 190.7M813.8 181.5 L814.7 181.6 M813.8 190.5 L814.7 190.6M812.8 181.6 L813.8 181.5 M812.8 190.6 L813.8 190.5M814.7 181.6 L815.5 181.9 M814.7 190.6 L815.5 190.9M869.3 181.5 L869.8 182 M869.3 190.5 L869.8 191M812 181.9 L812.8 181.6 M812 190.9 L812.8 190.6M864.1 182.1 L864.5 181.5 M864.1 191.1 L864.5 190.5M823.5 182.2 L823.6 181.6 M823.5 191.2 L823.6 190.6M857.2 181.6 L857.3 182.3 M857.2 190.7 L857.3 191.3M815.5 181.9 L816.2 182.3 M815.5 190.9 L816.2 191.3M811.4 182.4 L812 181.9 M811.4 191.4 L812 190.9M869.8 182 L870 182.7 M869.8 191 L870 191.7M864 182.8 L864.1 182.1 M864 191.8 L864.1 191.1M823.5 182.8 L823.5 182.2 M823.5 191.8 L823.5 191.2M857.3 182.3 L857.3 182.9 M857.3 191.3 L857.3 191.9M816.2 182.3 L816.6 182.9 M816.2 191.3 L816.6 191.9M811 183 L811.4 182.4 M811 192 L811.4 191.4M816.6 182.9 L816.8 183.5 M816.6 191.9 L816.8 192.5M810.8 183.6 L811 183 M810.8 192.6 L811 192M848.4 193.4 L857.7 205.3 M848.4 202.4 L857.7 214.3M824.5 205.8 L833 193.7 M824.5 214.9 L833 202.7M824.5 205.8 L824.5 214.9M833 193.7 L833 202.7M848.4 193.4 L848.4 202.4M857.7 205.3 L857.7 214.3" fill="none" stroke="#08160a" stroke-width="1.0" stroke-linecap="round"/>
<path d="M857.7 205.3 L858.9 204.9 L860 204.4 L861 204 L862.1 203.5 L863.1 202.9 L864.1 202.4 L865 201.8 L866 201.2 L866.9 200.5 L867.7 199.9 L868.6 199.2 L869.4 198.5 L870.1 197.8 L870.8 197.1 L871.5 196.4 L872.2 195.6 L872.8 194.9 L873.4 194.1 L873.9 193.3 L874.4 192.5 L874.9 191.6 L875.3 190.8 L876.4 190.1 L877.5 189.4 L878.4 188.6 L879.2 187.7 L879.9 186.8 L880.5 185.9 L880.9 184.9 L881.1 184 L881.2 183 L881.2 182 L881 181 L880.7 180.1 L880.2 179.1 L879.6 178.2 L878.9 177.3 L878 176.5 L877 175.8 L875.9 175 L874.7 174.4 L874.3 173.6 L873.8 172.8 L873.2 172 L872.6 171.2 L872 170.4 L871.3 169.7 L870.6 168.9 L869.9 168.2 L869.1 167.5 L868.3 166.8 L867.5 166.2 L866.6 165.5 L865.7 164.9 L864.7 164.3 L863.8 163.7 L862.8 163.2 L861.8 162.7 L860.7 162.2 L859.6 161.7 L858.5 161.2 L857.4 160.8 L856.3 160.4 L855.1 160 L853.9 159.7 L852.7 159.4 L851.5 159.1 L850.3 158.9 L849.1 158.6 L847.8 158.4 L846.6 158.3 L845.3 158.1 L844 158 L842.8 158 L841.5 157.9 L840.2 157.9 L838.9 157.9 L837.7 158 L836.4 158.1 L835.1 158.2 L833.9 158.3 L832.6 158.5 L831.4 158.7 L830.1 158.9 L828.9 159.2 L827.7 159.5 L826.5 159.8 L825.3 160.2 L824.2 160.5 L823.1 160.9 L821.9 161.4 L820.8 161.8 L819.8 162.3 L818.7 162.8 L817.7 163.3 L816.7 163.9 L815.8 164.5 L814.8 165.1 L813.9 165.7 L813.1 166.4 L812.2 167 L811.4 167.7 L810.7 168.4 L810 169.1 L809.3 169.9 L808.6 170.6 L808 171.4 L807.4 172.2 L806.9 173 L806.4 173.8 L805.9 174.6 L805.5 175.5 L804.4 176.2 L803.3 176.9 L802.4 177.7 L801.6 178.6 L800.9 179.4 L800.3 180.4 L799.9 181.3 L799.7 182.3 L799.6 183.3 L799.6 184.3 L799.8 185.2 L800.1 186.2 L800.6 187.1 L801.2 188 L801.9 188.9 L802.8 189.7 L803.8 190.5 L804.9 191.2 L806.1 191.9 L806.5 192.7 L807 193.5 L807.6 194.3 L808.2 195.1 L808.8 195.9 L809.5 196.6 L810.2 197.3 L810.9 198.1 L811.7 198.8 L812.5 199.4 L813.3 200.1 L814.2 200.7 L815.1 201.4 L816.1 202 L817 202.5 L818 203.1 L819 203.6 L820.1 204.1 L821.2 204.6 L822.3 205 L823.4 205.5 L824.5 205.8 L833 193.7 L832.3 193.4 L831.5 193.1 L830.8 192.7 L830 192.4 L829.3 192 L828.7 191.6 L828.1 191.1 L827.5 190.7 L826.9 190.2 L826.4 189.7 L825.9 189.2 L825.5 188.7 L825.1 188.1 L824.7 187.6 L824.4 187 L824.1 186.4 L823.9 185.8 L823.7 185.2 L823.6 184.6 L823.5 184 L823.5 183.4 L823.5 182.8 L823.5 182.2 L823.6 181.6 L823.7 181 L823.9 180.4 L824.2 179.8 L824.4 179.2 L824.8 178.6 L825.1 178.1 L825.5 177.5 L826 177 L826.5 176.5 L827 176 L827.6 175.5 L828.1 175.1 L828.8 174.6 L829.4 174.2 L830.1 173.8 L830.8 173.5 L831.6 173.2 L832.4 172.8 L833.2 172.6 L834 172.3 L834.8 172.1 L835.6 171.9 L836.5 171.8 L837.4 171.6 L838.2 171.5 L839.1 171.5 L840 171.5 L840.9 171.5 L841.8 171.5 L842.7 171.6 L843.5 171.7 L844.4 171.8 L845.3 171.9 L846.1 172.1 L846.9 172.4 L847.8 172.6 L848.5 172.9 L849.3 173.2 L850 173.5 L850.8 173.9 L851.5 174.3 L852.1 174.7 L852.7 175.1 L853.3 175.6 L853.9 176.1 L854.4 176.5 L854.9 177.1 L855.3 177.6 L855.7 178.1 L856.1 178.7 L856.4 179.3 L856.7 179.9 L856.9 180.4 L857.1 181 L857.2 181.6 L857.3 182.3 L857.3 182.9 L857.3 183.5 L857.3 184.1 L857.2 184.7 L857.1 185.3 L856.9 185.9 L856.6 186.5 L856.4 187.1 L856 187.6 L855.7 188.2 L855.3 188.7 L854.8 189.3 L854.3 189.8 L853.8 190.3 L853.2 190.7 L852.7 191.2 L852 191.6 L851.4 192 L850.7 192.4 L850 192.8 L849.2 193.1 L848.4 193.4ZM870 182.7 L869.8 182 L869.3 181.5 L868.7 181 L867.8 180.7 L866.9 180.7 L866 180.8 L865.2 181.1 L864.5 181.5 L864.1 182.1 L864 182.8 L864.2 183.4 L864.6 184 L865.3 184.4 L866.1 184.7 L867 184.8 L868 184.7 L868.8 184.4 L869.4 183.9 L869.8 183.3ZM816.8 183.5 L816.6 182.9 L816.2 182.3 L815.5 181.9 L814.7 181.6 L813.8 181.5 L812.8 181.6 L812 181.9 L811.4 182.4 L811 183 L810.8 183.6 L811 184.2 L811.5 184.8 L812.1 185.2 L813 185.5 L813.9 185.6 L814.8 185.5 L815.6 185.2 L816.3 184.7 L816.7 184.1Z" fill="#0ac50a" fill-rule="evenodd" stroke="#08160a" stroke-width="1.0" stroke-linejoin="round"/>
<path d="M840.2 152.8 L841.5 152.8 L841.5 157.9 L840.2 157.9Z" fill="#09b009" stroke="#09b009" stroke-width="0.5"/>
<path d="M838.9 152.8 L840.2 152.8 L840.2 157.9 L838.9 157.9Z" fill="#09af09" stroke="#09af09" stroke-width="0.5"/>
<path d="M841.5 152.8 L842.8 152.9 L842.8 158 L841.5 157.9Z" fill="#09b109" stroke="#09b109" stroke-width="0.5"/>
<path d="M837.7 152.9 L838.9 152.8 L838.9 157.9 L837.7 158Z" fill="#09ae09" stroke="#09ae09" stroke-width="0.5"/>
<path d="M842.8 152.9 L844 152.9 L844 158 L842.8 158Z" fill="#09b109" stroke="#09b109" stroke-width="0.5"/>
<path d="M836.4 153 L837.7 152.9 L837.7 158 L836.4 158.1Z" fill="#09ad09" stroke="#09ad09" stroke-width="0.5"/>
<path d="M844 152.9 L845.3 153 L845.3 158.1 L844 158Z" fill="#09b209" stroke="#09b209" stroke-width="0.5"/>
<path d="M835.1 153.1 L836.4 153 L836.4 158.1 L835.1 158.2Z" fill="#09ab09" stroke="#09ab09" stroke-width="0.5"/>
<path d="M845.3 153 L846.6 153.2 L846.6 158.3 L845.3 158.1Z" fill="#09b209" stroke="#09b209" stroke-width="0.5"/>
<path d="M833.9 153.2 L835.1 153.1 L835.1 158.2 L833.9 158.3Z" fill="#09aa09" stroke="#09aa09" stroke-width="0.5"/>
<path d="M846.6 153.2 L847.8 153.3 L847.8 158.4 L846.6 158.3Z" fill="#09b209" stroke="#09b209" stroke-width="0.5"/>
<path d="M832.6 153.4 L833.9 153.2 L833.9 158.3 L832.6 158.5Z" fill="#09a809" stroke="#09a809" stroke-width="0.5"/>
<path d="M847.8 153.3 L849.1 153.5 L849.1 158.6 L847.8 158.4Z" fill="#09b209" stroke="#09b209" stroke-width="0.5"/>
<path d="M831.4 153.6 L832.6 153.4 L832.6 158.5 L831.4 158.7Z" fill="#09a609" stroke="#09a609" stroke-width="0.5"/>
<path d="M849.1 153.5 L850.3 153.8 L850.3 158.9 L849.1 158.6Z" fill="#09b209" stroke="#09b209" stroke-width="0.5"/>
<path d="M830.1 153.8 L831.4 153.6 L831.4 158.7 L830.1 158.9Z" fill="#09a509" stroke="#09a509" stroke-width="0.5"/>
<path d="M850.3 153.8 L851.5 154 L851.5 159.1 L850.3 158.9Z" fill="#09b209" stroke="#09b209" stroke-width="0.5"/>
<path d="M828.9 154.1 L830.1 153.8 L830.1 158.9 L828.9 159.2Z" fill="#08a208" stroke="#08a208" stroke-width="0.5"/>
<path d="M851.5 154 L852.7 154.3 L852.7 159.4 L851.5 159.1Z" fill="#09b109" stroke="#09b109" stroke-width="0.5"/>
<path d="M827.7 154.4 L828.9 154.1 L828.9 159.2 L827.7 159.5Z" fill="#08a008" stroke="#08a008" stroke-width="0.5"/>
<path d="M852.7 154.3 L853.9 154.6 L853.9 159.7 L852.7 159.4Z" fill="#09b009" stroke="#09b009" stroke-width="0.5"/>
<path d="M826.5 154.7 L827.7 154.4 L827.7 159.5 L826.5 159.8Z" fill="#089e08" stroke="#089e08" stroke-width="0.5"/>
<path d="M853.9 154.6 L855.1 154.9 L855.1 160 L853.9 159.7Z" fill="#09b009" stroke="#09b009" stroke-width="0.5"/>
<path d="M825.3 155 L826.5 154.7 L826.5 159.8 L825.3 160.2Z" fill="#089b08" stroke="#089b08" stroke-width="0.5"/>
<path d="M855.1 154.9 L856.3 155.3 L856.3 160.4 L855.1 160Z" fill="#09af09" stroke="#09af09" stroke-width="0.5"/>
<path d="M824.2 155.4 L825.3 155 L825.3 160.2 L824.2 160.5Z" fill="#089908" stroke="#089908" stroke-width="0.5"/>
<path d="M856.3 155.3 L857.4 155.7 L857.4 160.8 L856.3 160.4Z" fill="#09ae09" stroke="#09ae09" stroke-width="0.5"/>
<path d="M823.1 155.8 L824.2 155.4 L824.2 160.5 L823.1 160.9Z" fill="#089608" stroke="#089608" stroke-width="0.5"/>
<path d="M857.4 155.7 L858.5 156.1 L858.5 161.2 L857.4 160.8Z" fill="#09ac09" stroke="#09ac09" stroke-width="0.5"/>
<path d="M821.9 156.3 L823.1 155.8 L823.1 160.9 L821.9 161.4Z" fill="#089308" stroke="#089308" stroke-width="0.5"/>
<path d="M858.5 156.1 L859.6 156.6 L859.6 161.7 L858.5 161.2Z" fill="#09ab09" stroke="#09ab09" stroke-width="0.5"/>
<path d="M820.8 156.7 L821.9 156.3 L821.9 161.4 L820.8 161.8Z" fill="#079007" stroke="#079007" stroke-width="0.5"/>
<path d="M859.6 156.6 L860.7 157 L860.7 162.2 L859.6 161.7Z" fill="#09a909" stroke="#09a909" stroke-width="0.5"/>
<path d="M819.8 157.2 L820.8 156.7 L820.8 161.8 L819.8 162.3Z" fill="#078d07" stroke="#078d07" stroke-width="0.5"/>
<path d="M860.7 157 L861.8 157.6 L861.8 162.7 L860.7 162.2Z" fill="#09a809" stroke="#09a809" stroke-width="0.5"/>
<path d="M818.7 157.7 L819.8 157.2 L819.8 162.3 L818.7 162.8Z" fill="#078a07" stroke="#078a07" stroke-width="0.5"/>
<path d="M861.8 157.6 L862.8 158.1 L862.8 163.2 L861.8 162.7Z" fill="#09a609" stroke="#09a609" stroke-width="0.5"/>
<path d="M817.7 158.2 L818.7 157.7 L818.7 162.8 L817.7 163.3Z" fill="#078707" stroke="#078707" stroke-width="0.5"/>
<path d="M862.8 158.1 L863.8 158.6 L863.8 163.7 L862.8 163.2Z" fill="#09a409" stroke="#09a409" stroke-width="0.5"/>
<path d="M816.7 158.8 L817.7 158.2 L817.7 163.3 L816.7 163.9Z" fill="#078307" stroke="#078307" stroke-width="0.5"/>
<path d="M863.8 158.6 L864.7 159.2 L864.7 164.3 L863.8 163.7Z" fill="#08a208" stroke="#08a208" stroke-width="0.5"/>
<path d="M815.8 159.4 L816.7 158.8 L816.7 163.9 L815.8 164.5Z" fill="#078007" stroke="#078007" stroke-width="0.5"/>
<path d="M864.7 159.2 L865.7 159.8 L865.7 164.9 L864.7 164.3Z" fill="#08a008" stroke="#08a008" stroke-width="0.5"/>
<path d="M814.8 160 L815.8 159.4 L815.8 164.5 L814.8 165.1Z" fill="#067c06" stroke="#067c06" stroke-width="0.5"/>
<path d="M865.7 159.8 L866.6 160.4 L866.6 165.5 L865.7 164.9Z" fill="#089d08" stroke="#089d08" stroke-width="0.5"/>
<path d="M813.9 160.6 L814.8 160 L814.8 165.1 L813.9 165.7Z" fill="#067906" stroke="#067906" stroke-width="0.5"/>
<path d="M866.6 160.4 L867.5 161.1 L867.5 166.2 L866.6 165.5Z" fill="#089b08" stroke="#089b08" stroke-width="0.5"/>
<path d="M813.1 161.3 L813.9 160.6 L813.9 165.7 L813.1 166.4Z" fill="#067506" stroke="#067506" stroke-width="0.5"/>
<path d="M867.5 161.1 L868.3 161.7 L868.3 166.8 L867.5 166.2Z" fill="#089808" stroke="#089808" stroke-width="0.5"/>
<path d="M812.2 161.9 L813.1 161.3 L813.1 166.4 L812.2 167Z" fill="#067106" stroke="#067106" stroke-width="0.5"/>
<path d="M868.3 161.7 L869.1 162.4 L869.1 167.5 L868.3 166.8Z" fill="#089508" stroke="#089508" stroke-width="0.5"/>
<path d="M811.4 162.6 L812.2 161.9 L812.2 167 L811.4 167.7Z" fill="#066d06" stroke="#066d06" stroke-width="0.5"/>
<path d="M869.1 162.4 L869.9 163.1 L869.9 168.2 L869.1 167.5Z" fill="#089208" stroke="#089208" stroke-width="0.5"/>
<path d="M810.7 163.3 L811.4 162.6 L811.4 167.7 L810.7 168.4Z" fill="#056905" stroke="#056905" stroke-width="0.5"/>
<path d="M869.9 163.1 L870.6 163.8 L870.6 168.9 L869.9 168.2Z" fill="#078f07" stroke="#078f07" stroke-width="0.5"/>
<path d="M810 164 L810.7 163.3 L810.7 168.4 L810 169.1Z" fill="#056505" stroke="#056505" stroke-width="0.5"/>
<path d="M870.6 163.8 L871.3 164.6 L871.3 169.7 L870.6 168.9Z" fill="#078c07" stroke="#078c07" stroke-width="0.5"/>
<path d="M809.3 164.8 L810 164 L810 169.1 L809.3 169.9Z" fill="#056105" stroke="#056105" stroke-width="0.5"/>
<path d="M871.3 164.6 L872 165.3 L872 170.4 L871.3 169.7Z" fill="#078907" stroke="#078907" stroke-width="0.5"/>
<path d="M808.6 165.5 L809.3 164.8 L809.3 169.9 L808.6 170.6Z" fill="#055d05" stroke="#055d05" stroke-width="0.5"/>
<path d="M872 165.3 L872.6 166.1 L872.6 171.2 L872 170.4Z" fill="#078607" stroke="#078607" stroke-width="0.5"/>
<path d="M808 166.3 L808.6 165.5 L808.6 170.6 L808 171.4Z" fill="#045804" stroke="#045804" stroke-width="0.5"/>
<path d="M872.6 166.1 L873.2 166.9 L873.2 172 L872.6 171.2Z" fill="#078207" stroke="#078207" stroke-width="0.5"/>
<path d="M807.4 167.1 L808 166.3 L808 171.4 L807.4 172.2Z" fill="#045404" stroke="#045404" stroke-width="0.5"/>
<path d="M873.2 166.9 L873.8 167.7 L873.8 172.8 L873.2 172Z" fill="#077f07" stroke="#077f07" stroke-width="0.5"/>
<path d="M806.9 167.9 L807.4 167.1 L807.4 172.2 L806.9 173Z" fill="#045004" stroke="#045004" stroke-width="0.5"/>
<path d="M873.8 167.7 L874.3 168.5 L874.3 173.6 L873.8 172.8Z" fill="#067b06" stroke="#067b06" stroke-width="0.5"/>
<path d="M806.4 168.7 L806.9 167.9 L806.9 173 L806.4 173.8Z" fill="#044c04" stroke="#044c04" stroke-width="0.5"/>
<path d="M874.3 168.5 L874.7 169.3 L874.7 174.4 L874.3 173.6Z" fill="#067706" stroke="#067706" stroke-width="0.5"/>
<path d="M805.9 169.5 L806.4 168.7 L806.4 173.8 L805.9 174.6Z" fill="#034703" stroke="#034703" stroke-width="0.5"/>
<path d="M874.7 169.3 L875.9 169.9 L875.9 175 L874.7 174.4Z" fill="#08a308" stroke="#08a308" stroke-width="0.5"/>
<path d="M805.5 170.4 L805.9 169.5 L805.9 174.6 L805.5 175.5Z" fill="#034303" stroke="#034303" stroke-width="0.5"/>
<path d="M875.9 169.9 L877 170.6 L877 175.8 L875.9 175Z" fill="#08a108" stroke="#08a108" stroke-width="0.5"/>
<path d="M804.4 171.1 L805.5 170.4 L805.5 175.5 L804.4 176.2Z" fill="#067e06" stroke="#067e06" stroke-width="0.5"/>
<path d="M877 170.6 L878 171.4 L878 176.5 L877 175.8Z" fill="#089908" stroke="#089908" stroke-width="0.5"/>
<path d="M803.3 171.8 L804.4 171.1 L804.4 176.2 L803.3 176.9Z" fill="#067a06" stroke="#067a06" stroke-width="0.5"/>
<path d="M878 171.4 L878.9 172.2 L878.9 177.3 L878 176.5Z" fill="#079107" stroke="#079107" stroke-width="0.5"/>
<path d="M802.4 172.6 L803.3 171.8 L803.3 176.9 L802.4 177.7Z" fill="#066f06" stroke="#066f06" stroke-width="0.5"/>
<path d="M878.9 172.2 L879.6 173.1 L879.6 178.2 L878.9 177.3Z" fill="#078707" stroke="#078707" stroke-width="0.5"/>
<path d="M801.6 173.5 L802.4 172.6 L802.4 177.7 L801.6 178.6Z" fill="#056305" stroke="#056305" stroke-width="0.5"/>
<path d="M879.6 173.1 L880.2 174 L880.2 179.1 L879.6 178.2Z" fill="#067d06" stroke="#067d06" stroke-width="0.5"/>
<path d="M800.9 174.3 L801.6 173.5 L801.6 178.6 L800.9 179.4Z" fill="#045604" stroke="#045604" stroke-width="0.5"/>
<path d="M880.2 174 L880.7 175 L880.7 180.1 L880.2 179.1Z" fill="#067206" stroke="#067206" stroke-width="0.5"/>
<path d="M800.3 175.3 L800.9 174.3 L800.9 179.4 L800.3 180.4Z" fill="#044904" stroke="#044904" stroke-width="0.5"/>
<path d="M880.7 175 L881 175.9 L881 181 L880.7 180.1Z" fill="#056705" stroke="#056705" stroke-width="0.5"/>
<path d="M799.9 176.2 L800.3 175.3 L800.3 180.4 L799.9 181.3Z" fill="#033d03" stroke="#033d03" stroke-width="0.5"/>
<path d="M881 175.9 L881.2 176.9 L881.2 182 L881 181Z" fill="#055b05" stroke="#055b05" stroke-width="0.5"/>
<path d="M799.7 177.2 L799.9 176.2 L799.9 181.3 L799.7 182.3Z" fill="#023302" stroke="#023302" stroke-width="0.5"/>
<path d="M881.2 176.9 L881.2 177.9 L881.2 183 L881.2 182Z" fill="#044f04" stroke="#044f04" stroke-width="0.5"/>
<path d="M799.6 178.2 L799.7 177.2 L799.7 182.3 L799.6 183.3Z" fill="#023302" stroke="#023302" stroke-width="0.5"/>
<path d="M840.2 152.8 L841.5 152.8 M840.2 157.9 L841.5 157.9M838.9 152.8 L840.2 152.8 M838.9 157.9 L840.2 157.9M841.5 152.8 L842.8 152.9 M841.5 157.9 L842.8 158M837.7 152.9 L838.9 152.8 M837.7 158 L838.9 157.9M842.8 152.9 L844 152.9 M842.8 158 L844 158M836.4 153 L837.7 152.9 M836.4 158.1 L837.7 158M844 152.9 L845.3 153 M844 158 L845.3 158.1M835.1 153.1 L836.4 153 M835.1 158.2 L836.4 158.1M845.3 153 L846.6 153.2 M845.3 158.1 L846.6 158.3M833.9 153.2 L835.1 153.1 M833.9 158.3 L835.1 158.2M846.6 153.2 L847.8 153.3 M846.6 158.3 L847.8 158.4M832.6 153.4 L833.9 153.2 M832.6 158.5 L833.9 158.3M847.8 153.3 L849.1 153.5 M847.8 158.4 L849.1 158.6M831.4 153.6 L832.6 153.4 M831.4 158.7 L832.6 158.5M849.1 153.5 L850.3 153.8 M849.1 158.6 L850.3 158.9M830.1 153.8 L831.4 153.6 M830.1 158.9 L831.4 158.7M850.3 153.8 L851.5 154 M850.3 158.9 L851.5 159.1M828.9 154.1 L830.1 153.8 M828.9 159.2 L830.1 158.9M851.5 154 L852.7 154.3 M851.5 159.1 L852.7 159.4M827.7 154.4 L828.9 154.1 M827.7 159.5 L828.9 159.2M852.7 154.3 L853.9 154.6 M852.7 159.4 L853.9 159.7M826.5 154.7 L827.7 154.4 M826.5 159.8 L827.7 159.5M853.9 154.6 L855.1 154.9 M853.9 159.7 L855.1 160M825.3 155 L826.5 154.7 M825.3 160.2 L826.5 159.8M855.1 154.9 L856.3 155.3 M855.1 160 L856.3 160.4M824.2 155.4 L825.3 155 M824.2 160.5 L825.3 160.2M856.3 155.3 L857.4 155.7 M856.3 160.4 L857.4 160.8M823.1 155.8 L824.2 155.4 M823.1 160.9 L824.2 160.5M857.4 155.7 L858.5 156.1 M857.4 160.8 L858.5 161.2M821.9 156.3 L823.1 155.8 M821.9 161.4 L823.1 160.9M858.5 156.1 L859.6 156.6 M858.5 161.2 L859.6 161.7M820.8 156.7 L821.9 156.3 M820.8 161.8 L821.9 161.4M859.6 156.6 L860.7 157 M859.6 161.7 L860.7 162.2M819.8 157.2 L820.8 156.7 M819.8 162.3 L820.8 161.8M860.7 157 L861.8 157.6 M860.7 162.2 L861.8 162.7M818.7 157.7 L819.8 157.2 M818.7 162.8 L819.8 162.3M861.8 157.6 L862.8 158.1 M861.8 162.7 L862.8 163.2M817.7 158.2 L818.7 157.7 M817.7 163.3 L818.7 162.8M862.8 158.1 L863.8 158.6 M862.8 163.2 L863.8 163.7M816.7 158.8 L817.7 158.2 M816.7 163.9 L817.7 163.3M863.8 158.6 L864.7 159.2 M863.8 163.7 L864.7 164.3M815.8 159.4 L816.7 158.8 M815.8 164.5 L816.7 163.9M864.7 159.2 L865.7 159.8 M864.7 164.3 L865.7 164.9M814.8 160 L815.8 159.4 M814.8 165.1 L815.8 164.5M865.7 159.8 L866.6 160.4 M865.7 164.9 L866.6 165.5M813.9 160.6 L814.8 160 M813.9 165.7 L814.8 165.1M866.6 160.4 L867.5 161.1 M866.6 165.5 L867.5 166.2M813.1 161.3 L813.9 160.6 M813.1 166.4 L813.9 165.7M867.5 161.1 L868.3 161.7 M867.5 166.2 L868.3 166.8M812.2 161.9 L813.1 161.3 M812.2 167 L813.1 166.4M868.3 161.7 L869.1 162.4 M868.3 166.8 L869.1 167.5M811.4 162.6 L812.2 161.9 M811.4 167.7 L812.2 167M869.1 162.4 L869.9 163.1 M869.1 167.5 L869.9 168.2M810.7 163.3 L811.4 162.6 M810.7 168.4 L811.4 167.7M869.9 163.1 L870.6 163.8 M869.9 168.2 L870.6 168.9M810 164 L810.7 163.3 M810 169.1 L810.7 168.4M870.6 163.8 L871.3 164.6 M870.6 168.9 L871.3 169.7M809.3 164.8 L810 164 M809.3 169.9 L810 169.1M871.3 164.6 L872 165.3 M871.3 169.7 L872 170.4M808.6 165.5 L809.3 164.8 M808.6 170.6 L809.3 169.9M872 165.3 L872.6 166.1 M872 170.4 L872.6 171.2M808 166.3 L808.6 165.5 M808 171.4 L808.6 170.6M872.6 166.1 L873.2 166.9 M872.6 171.2 L873.2 172M807.4 167.1 L808 166.3 M807.4 172.2 L808 171.4M873.2 166.9 L873.8 167.7 M873.2 172 L873.8 172.8M806.9 167.9 L807.4 167.1 M806.9 173 L807.4 172.2M873.8 167.7 L874.3 168.5 M873.8 172.8 L874.3 173.6M806.4 168.7 L806.9 167.9 M806.4 173.8 L806.9 173M874.3 168.5 L874.7 169.3 M874.3 173.6 L874.7 174.4M805.9 169.5 L806.4 168.7 M805.9 174.6 L806.4 173.8M874.7 169.3 L875.9 169.9 M874.7 174.4 L875.9 175M805.5 170.4 L805.9 169.5 M805.5 175.5 L805.9 174.6M875.9 169.9 L877 170.6 M875.9 175 L877 175.8M804.4 171.1 L805.5 170.4 M804.4 176.2 L805.5 175.5M877 170.6 L878 171.4 M877 175.8 L878 176.5M803.3 171.8 L804.4 171.1 M803.3 176.9 L804.4 176.2M878 171.4 L878.9 172.2 M878 176.5 L878.9 177.3M802.4 172.6 L803.3 171.8 M802.4 177.7 L803.3 176.9M878.9 172.2 L879.6 173.1 M878.9 177.3 L879.6 178.2M801.6 173.5 L802.4 172.6 M801.6 178.6 L802.4 177.7M879.6 173.1 L880.2 174 M879.6 178.2 L880.2 179.1M800.9 174.3 L801.6 173.5 M800.9 179.4 L801.6 178.6M880.2 174 L880.7 175 M880.2 179.1 L880.7 180.1M800.3 175.3 L800.9 174.3 M800.3 180.4 L800.9 179.4M880.7 175 L881 175.9 M880.7 180.1 L881 181M799.9 176.2 L800.3 175.3 M799.9 181.3 L800.3 180.4M881 175.9 L881.2 176.9 M881 181 L881.2 182M799.7 177.2 L799.9 176.2 M799.7 182.3 L799.9 181.3M881.2 176.9 L881.2 177.9 M881.2 182 L881.2 183M799.6 178.2 L799.7 177.2 M799.6 183.3 L799.7 182.3M805.5 170.4 L805.5 175.5M874.7 169.3 L874.7 174.4" fill="none" stroke="#08160a" stroke-width="1.0" stroke-linecap="round"/>
<path d="M895.7 152.6 L908.3 142 L908.3 156.1 L895.7 166.7Z" fill="#066f06" stroke="#066f06" stroke-width="0.5"/>
<path d="M770.2 144.2 L783.5 154.3 L783.5 168.5 L770.2 158.3Z" fill="#089908" stroke="#089908" stroke-width="0.5"/>
<path d="M754.7 177.6 L754.8 181.2 L754.8 195.3 L754.7 191.7Z" fill="#044f04" stroke="#044f04" stroke-width="0.5"/>
<path d="M925.9 182.1 L926.1 178.5 L926.1 192.6 L925.9 196.2Z" fill="#023302" stroke="#023302" stroke-width="0.5"/>
<path d="M754.8 181.2 L755.2 184.7 L755.2 198.9 L754.8 195.3Z" fill="#045604" stroke="#045604" stroke-width="0.5"/>
<path d="M925.4 185.7 L925.9 182.1 L925.9 196.2 L925.4 199.8Z" fill="#023302" stroke="#023302" stroke-width="0.5"/>
<path d="M905.6 187 L925.4 185.7 L925.4 199.8 L905.6 201.1Z" fill="#09ad09" stroke="#09ad09" stroke-width="0.5"/>
<path d="M755.2 184.7 L756 188.3 L756 202.4 L755.2 198.9Z" fill="#055d05" stroke="#055d05" stroke-width="0.5"/>
<path d="M904.7 189.5 L905.6 187 L905.6 201.1 L904.7 203.7Z" fill="#023602" stroke="#023602" stroke-width="0.5"/>
<path d="M756 188.3 L775.9 189 L775.9 203.1 L756 202.4Z" fill="#09b109" stroke="#09b109" stroke-width="0.5"/>
<path d="M775.9 189 L776.9 191.5 L776.9 205.6 L775.9 203.1Z" fill="#056c05" stroke="#056c05" stroke-width="0.5"/>
<path d="M903.6 192.1 L904.7 189.5 L904.7 203.7 L903.6 206.2Z" fill="#033d03" stroke="#033d03" stroke-width="0.5"/>
<path d="M776.9 191.5 L778.2 194 L778.2 208.2 L776.9 205.6Z" fill="#067306" stroke="#067306" stroke-width="0.5"/>
<path d="M902.4 194.6 L903.6 192.1 L903.6 206.2 L902.4 208.7Z" fill="#034503" stroke="#034503" stroke-width="0.5"/>
<path d="M778.2 194 L779.6 196.5 L779.6 210.6 L778.2 208.2Z" fill="#067906" stroke="#067906" stroke-width="0.5"/>
<path d="M900.9 197 L902.4 194.6 L902.4 208.7 L900.9 211.1Z" fill="#044c04" stroke="#044c04" stroke-width="0.5"/>
<path d="M779.6 196.5 L781.3 198.9 L781.3 213 L779.6 210.6Z" fill="#077f07" stroke="#077f07" stroke-width="0.5"/>
<path d="M899.2 199.4 L900.9 197 L900.9 211.1 L899.2 213.5Z" fill="#045304" stroke="#045304" stroke-width="0.5"/>
<path d="M781.3 198.9 L783.1 201.2 L783.1 215.3 L781.3 213Z" fill="#078507" stroke="#078507" stroke-width="0.5"/>
<path d="M897.3 201.7 L899.2 199.4 L899.2 213.5 L897.3 215.8Z" fill="#045a04" stroke="#045a04" stroke-width="0.5"/>
<path d="M783.1 201.2 L785.1 203.5 L785.1 217.6 L783.1 215.3Z" fill="#078a07" stroke="#078a07" stroke-width="0.5"/>
<path d="M857.7 200.2 L871.9 218.3 L871.9 232.4 L857.7 214.3Z" fill="#078407" stroke="#078407" stroke-width="0.5"/>
<path d="M811.6 219.3 L824.5 200.7 L824.5 214.9 L811.6 233.4Z" fill="#045204" stroke="#045204" stroke-width="0.5"/>
<path d="M907.5 214.8 L910.6 211.9 L910.6 226 L907.5 228.9Z" fill="#056905" stroke="#056905" stroke-width="0.5"/>
<path d="M772.5 214 L775.8 216.8 L775.8 230.9 L772.5 228.1Z" fill="#089508" stroke="#089508" stroke-width="0.5"/>
<path d="M904.1 217.5 L907.5 214.8 L907.5 228.9 L904.1 231.6Z" fill="#067006" stroke="#067006" stroke-width="0.5"/>
<path d="M871.9 218.3 L877.3 216.1 L877.3 230.2 L871.9 232.4Z" fill="#079107" stroke="#079107" stroke-width="0.5"/>
<path d="M775.8 216.8 L779.3 219.5 L779.3 233.6 L775.8 230.9Z" fill="#089a08" stroke="#089a08" stroke-width="0.5"/>
<path d="M806 217.2 L811.6 219.3 L811.6 233.4 L806 231.3Z" fill="#09ad09" stroke="#09ad09" stroke-width="0.5"/>
<path d="M900.5 220.1 L904.1 217.5 L904.1 231.6 L900.5 234.2Z" fill="#067706" stroke="#067706" stroke-width="0.5"/>
<path d="M877.3 216.1 L892.7 224.8 L892.7 238.9 L877.3 230.2Z" fill="#08a308" stroke="#08a308" stroke-width="0.5"/>
<path d="M779.3 219.5 L783.1 221.9 L783.1 236 L779.3 233.6Z" fill="#089e08" stroke="#089e08" stroke-width="0.5"/>
<path d="M896.7 222.5 L900.5 220.1 L900.5 234.2 L896.7 236.7Z" fill="#067d06" stroke="#067d06" stroke-width="0.5"/>
<path d="M791.3 226.4 L806 217.2 L806 231.3 L791.3 240.5Z" fill="#067e06" stroke="#067e06" stroke-width="0.5"/>
<path d="M783.1 221.9 L787.1 224.3 L787.1 238.4 L783.1 236Z" fill="#08a208" stroke="#08a208" stroke-width="0.5"/>
<path d="M892.7 224.8 L896.7 222.5 L896.7 236.7 L892.7 238.9Z" fill="#078307" stroke="#078307" stroke-width="0.5"/>
<path d="M787.1 224.3 L791.3 226.4 L791.3 240.5 L787.1 238.4Z" fill="#09a609" stroke="#09a609" stroke-width="0.5"/>
<path d="M895.7 152.6 L908.3 142 M895.7 166.7 L908.3 156.1M770.2 144.2 L783.5 154.3 M770.2 158.3 L783.5 168.5M754.7 177.6 L754.8 181.2 M754.7 191.7 L754.8 195.3M925.9 182.1 L926.1 178.5 M925.9 196.2 L926.1 192.6M754.8 181.2 L755.2 184.7 M754.8 195.3 L755.2 198.9M925.4 185.7 L925.9 182.1 M925.4 199.8 L925.9 196.2M905.6 187 L925.4 185.7 M905.6 201.1 L925.4 199.8M755.2 184.7 L756 188.3 M755.2 198.9 L756 202.4M904.7 189.5 L905.6 187 M904.7 203.7 L905.6 201.1M756 188.3 L775.9 189 M756 202.4 L775.9 203.1M775.9 189 L776.9 191.5 M775.9 203.1 L776.9 205.6M903.6 192.1 L904.7 189.5 M903.6 206.2 L904.7 203.7M776.9 191.5 L778.2 194 M776.9 205.6 L778.2 208.2M902.4 194.6 L903.6 192.1 M902.4 208.7 L903.6 206.2M778.2 194 L779.6 196.5 M778.2 208.2 L779.6 210.6M900.9 197 L902.4 194.6 M900.9 211.1 L902.4 208.7M779.6 196.5 L781.3 198.9 M779.6 210.6 L781.3 213M899.2 199.4 L900.9 197 M899.2 213.5 L900.9 211.1M781.3 198.9 L783.1 201.2 M781.3 213 L783.1 215.3M897.3 201.7 L899.2 199.4 M897.3 215.8 L899.2 213.5M783.1 201.2 L785.1 203.5 M783.1 215.3 L785.1 217.6M857.7 200.2 L871.9 218.3 M857.7 214.3 L871.9 232.4M811.6 219.3 L824.5 200.7 M811.6 233.4 L824.5 214.9M907.5 214.8 L910.6 211.9 M907.5 228.9 L910.6 226M772.5 214 L775.8 216.8 M772.5 228.1 L775.8 230.9M904.1 217.5 L907.5 214.8 M904.1 231.6 L907.5 228.9M871.9 218.3 L877.3 216.1 M871.9 232.4 L877.3 230.2M775.8 216.8 L779.3 219.5 M775.8 230.9 L779.3 233.6M806 217.2 L811.6 219.3 M806 231.3 L811.6 233.4M900.5 220.1 L904.1 217.5 M900.5 234.2 L904.1 231.6M877.3 216.1 L892.7 224.8 M877.3 230.2 L892.7 238.9M779.3 219.5 L783.1 221.9 M779.3 233.6 L783.1 236M896.7 222.5 L900.5 220.1 M896.7 236.7 L900.5 234.2M791.3 226.4 L806 217.2 M791.3 240.5 L806 231.3M783.1 221.9 L787.1 224.3 M783.1 236 L787.1 238.4M892.7 224.8 L896.7 222.5 M892.7 238.9 L896.7 236.7M787.1 224.3 L791.3 226.4 M787.1 238.4 L791.3 240.5M857.7 200.2 L857.7 214.3M871.9 218.3 L871.9 232.4M877.3 216.1 L877.3 230.2M892.7 224.8 L892.7 238.9M910.6 211.9 L910.6 226M897.3 201.7 L897.3 215.8M905.6 187 L905.6 201.1M925.4 185.7 L925.4 199.8M895.7 152.6 L895.7 166.7M908.3 142 L908.3 156.1M770.2 144.2 L770.2 158.3M783.5 154.3 L783.5 168.5M756 188.3 L756 202.4M775.9 189 L775.9 203.1M785.1 203.5 L785.1 217.6M772.5 214 L772.5 228.1M791.3 226.4 L791.3 240.5M806 217.2 L806 231.3M811.6 219.3 L811.6 233.4M824.5 200.7 L824.5 214.9" fill="none" stroke="#08160a" stroke-width="1.0" stroke-linecap="round"/>
<path d="M871.9 218.3 L877.3 216.1 L892.7 224.8 L896.7 222.5 L900.5 220.1 L904.1 217.5 L907.5 214.8 L910.6 211.9 L897.3 201.7 L899.2 199.4 L900.9 197 L902.4 194.6 L903.6 192.1 L904.7 189.5 L905.6 187 L925.4 185.7 L925.9 182.1 L926.1 178.5 L926 174.9 L925.6 171.3 L924.8 167.7 L904.9 167.1 L903.9 164.5 L902.6 162 L901.2 159.6 L899.5 157.2 L897.7 154.8 L895.7 152.6 L908.3 142 L905 139.2 L901.5 136.6 L897.7 134.1 L893.7 131.8 L889.5 129.6 L874.8 138.8 L871.4 137.5 L868 136.4 L864.4 135.3 L860.8 134.5 L857.1 133.7 L853.4 133.1 L851.5 119.5 L846.3 119.1 L841.1 119 L835.8 119.1 L830.6 119.4 L825.5 119.9 L824.5 133.6 L820.8 134.3 L817.1 135.1 L813.6 136.1 L810.1 137.3 L806.7 138.6 L803.5 140 L788.1 131.2 L784.1 133.5 L780.3 135.9 L776.7 138.5 L773.3 141.3 L770.2 144.2 L783.5 154.3 L781.6 156.7 L779.9 159 L778.4 161.5 L777.2 164 L776.1 166.5 L775.2 169.1 L755.4 170.4 L754.9 174 L754.7 177.6 L754.8 181.2 L755.2 184.7 L756 188.3 L775.9 189 L776.9 191.5 L778.2 194 L779.6 196.5 L781.3 198.9 L783.1 201.2 L785.1 203.5 L772.5 214 L775.8 216.8 L779.3 219.5 L783.1 221.9 L787.1 224.3 L791.3 226.4 L806 217.2 L811.6 219.3 L824.5 200.7 L823.4 200.3 L822.3 199.9 L821.2 199.5 L820.1 199 L819 198.5 L818 198 L817 197.4 L816.1 196.9 L815.1 196.3 L814.2 195.6 L813.3 195 L812.5 194.3 L811.7 193.7 L810.9 193 L810.2 192.2 L809.5 191.5 L808.8 190.7 L808.2 190 L807.6 189.2 L807 188.4 L806.5 187.6 L806.1 186.8 L804.9 186.1 L803.8 185.4 L802.8 184.6 L801.9 183.8 L801.2 182.9 L800.6 182 L800.1 181.1 L799.8 180.1 L799.6 179.2 L799.6 178.2 L799.7 177.2 L799.9 176.2 L800.3 175.3 L800.9 174.3 L801.6 173.5 L802.4 172.6 L803.3 171.8 L804.4 171.1 L805.5 170.4 L805.9 169.5 L806.4 168.7 L806.9 167.9 L807.4 167.1 L808 166.3 L808.6 165.5 L809.3 164.8 L810 164 L810.7 163.3 L811.4 162.6 L812.2 161.9 L813.1 161.3 L813.9 160.6 L814.8 160 L815.8 159.4 L816.7 158.8 L817.7 158.2 L818.7 157.7 L819.8 157.2 L820.8 156.7 L821.9 156.3 L823.1 155.8 L824.2 155.4 L825.3 155 L826.5 154.7 L827.7 154.4 L828.9 154.1 L830.1 153.8 L831.4 153.6 L832.6 153.4 L833.9 153.2 L835.1 153.1 L836.4 153 L837.7 152.9 L838.9 152.8 L840.2 152.8 L841.5 152.8 L842.8 152.9 L844 152.9 L845.3 153 L846.6 153.2 L847.8 153.3 L849.1 153.5 L850.3 153.8 L851.5 154 L852.7 154.3 L853.9 154.6 L855.1 154.9 L856.3 155.3 L857.4 155.7 L858.5 156.1 L859.6 156.6 L860.7 157 L861.8 157.6 L862.8 158.1 L863.8 158.6 L864.7 159.2 L865.7 159.8 L866.6 160.4 L867.5 161.1 L868.3 161.7 L869.1 162.4 L869.9 163.1 L870.6 163.8 L871.3 164.6 L872 165.3 L872.6 166.1 L873.2 166.9 L873.8 167.7 L874.3 168.5 L874.7 169.3 L875.9 169.9 L877 170.6 L878 171.4 L878.9 172.2 L879.6 173.1 L880.2 174 L880.7 175 L881 175.9 L881.2 176.9 L881.2 177.9 L881.1 178.9 L880.9 179.8 L880.5 180.8 L879.9 181.7 L879.2 182.6 L878.4 183.5 L877.5 184.3 L876.4 185 L875.3 185.7 L874.9 186.5 L874.4 187.3 L873.9 188.2 L873.4 189 L872.8 189.7 L872.2 190.5 L871.5 191.3 L870.8 192 L870.1 192.7 L869.4 193.4 L868.6 194.1 L867.7 194.8 L866.9 195.4 L866 196.1 L865 196.7 L864.1 197.3 L863.1 197.8 L862.1 198.3 L861 198.9 L860 199.3 L858.9 199.8 L857.7 200.2Z" fill="#0ac50a" fill-rule="evenodd" stroke="#08160a" stroke-width="1.0" stroke-linejoin="round"/>
<linearGradient id="g3_0" gradientUnits="userSpaceOnUse" x1="744.1" y1="0" x2="936.7" y2="0"><stop offset="0.000" stop-color="#044c04"/><stop offset="0.083" stop-color="#078d07"/><stop offset="0.167" stop-color="#08a108"/><stop offset="0.250" stop-color="#09ab09"/><stop offset="0.333" stop-color="#09b109"/><stop offset="0.417" stop-color="#09b209"/><stop offset="0.500" stop-color="#09b009"/><stop offset="0.583" stop-color="#09aa09"/><stop offset="0.667" stop-color="#08a008"/><stop offset="0.750" stop-color="#089208"/><stop offset="0.833" stop-color="#077f07"/><stop offset="0.917" stop-color="#056305"/><stop offset="1.000" stop-color="#023302"/></linearGradient>
<path d="M744.1 173.5 L744.2 177 L744.6 180.4 L745.3 183.9 L746.2 187.3 L747.4 190.7 L748.8 194 L750.5 197.3 L752.4 200.5 L754.6 203.6 L757 206.7 L759.6 209.6 L762.5 212.5 L765.6 215.3 L768.8 217.9 L772.3 220.4 L776 222.8 L779.8 225.1 L783.8 227.2 L788 229.1 L792.2 231 L796.7 232.6 L801.2 234.1 L805.9 235.4 L810.6 236.6 L815.5 237.6 L820.4 238.4 L825.3 239 L830.3 239.5 L835.4 239.8 L840.4 239.9 L845.4 239.8 L850.5 239.5 L855.5 239 L860.4 238.4 L865.3 237.6 L870.2 236.6 L874.9 235.4 L879.6 234.1 L884.1 232.6 L888.5 231 L892.8 229.1 L897 227.2 L901 225.1 L904.8 222.8 L908.5 220.4 L912 217.9 L915.2 215.3 L918.3 212.5 L921.2 209.6 L923.8 206.7 L926.2 203.6 L928.4 200.5 L930.3 197.3 L932 194 L933.4 190.7 L934.6 187.3 L935.5 183.9 L936.2 180.4 L936.6 177 L936.7 173.5 L936.7 179 L936.6 182.5 L936.2 185.9 L935.5 189.4 L934.6 192.8 L933.4 196.2 L932 199.5 L930.3 202.8 L928.4 206 L926.2 209.1 L923.8 212.2 L921.2 215.1 L918.3 218 L915.2 220.7 L912 223.4 L908.5 225.9 L904.8 228.3 L901 230.6 L897 232.7 L892.8 234.6 L888.5 236.5 L884.1 238.1 L879.6 239.6 L874.9 240.9 L870.2 242.1 L865.3 243.1 L860.4 243.9 L855.5 244.5 L850.5 245 L845.4 245.2 L840.4 245.3 L835.4 245.2 L830.3 245 L825.3 244.5 L820.4 243.9 L815.5 243.1 L810.6 242.1 L805.9 240.9 L801.2 239.6 L796.7 238.1 L792.2 236.5 L788 234.6 L783.8 232.7 L779.8 230.6 L776 228.3 L772.3 225.9 L768.8 223.4 L765.6 220.7 L762.5 218 L759.6 215.1 L757 212.2 L754.6 209.1 L752.4 206 L750.5 202.8 L748.8 199.5 L747.4 196.2 L746.2 192.8 L745.3 189.4 L744.6 185.9 L744.2 182.5 L744.1 179Z" fill="url(#g3_0)" stroke="#08160a" stroke-width="1.0" stroke-linejoin="round"/>
<linearGradient id="g3_1" gradientUnits="userSpaceOnUse" x1="744.1" y1="0" x2="936.7" y2="0"><stop offset="0.000" stop-color="#023302"/><stop offset="0.083" stop-color="#023302"/><stop offset="0.167" stop-color="#023302"/><stop offset="0.250" stop-color="#023302"/><stop offset="0.333" stop-color="#023302"/><stop offset="0.417" stop-color="#023302"/><stop offset="0.500" stop-color="#023302"/><stop offset="0.583" stop-color="#023302"/><stop offset="0.667" stop-color="#023302"/><stop offset="0.750" stop-color="#023302"/><stop offset="0.833" stop-color="#023302"/><stop offset="0.917" stop-color="#023302"/><stop offset="1.000" stop-color="#023302"/></linearGradient>
<path d="M744.1 179 L744.2 182.5 L744.6 185.9 L745.3 189.4 L746.2 192.8 L747.4 196.2 L748.8 199.5 L750.5 202.8 L752.4 206 L754.6 209.1 L757 212.2 L759.6 215.1 L762.5 218 L765.6 220.7 L768.8 223.4 L772.3 225.9 L776 228.3 L779.8 230.6 L783.8 232.7 L788 234.6 L792.2 236.5 L796.7 238.1 L801.2 239.6 L805.9 240.9 L810.6 242.1 L815.5 243.1 L820.4 243.9 L825.3 244.5 L830.3 245 L835.4 245.2 L840.4 245.3 L845.4 245.2 L850.5 245 L855.5 244.5 L860.4 243.9 L865.3 243.1 L870.2 242.1 L874.9 240.9 L879.6 239.6 L884.1 238.1 L888.5 236.5 L892.8 234.6 L897 232.7 L901 230.6 L904.8 228.3 L908.5 225.9 L912 223.4 L915.2 220.7 L918.3 218 L921.2 215.1 L923.8 212.2 L926.2 209.1 L928.4 206 L930.3 202.8 L932 199.5 L933.4 196.2 L934.6 192.8 L935.5 189.4 L936.2 185.9 L936.6 182.5 L936.7 179 L932.2 182.8 L932 186.1 L931.7 189.4 L931 192.7 L930.2 196 L929 199.2 L927.7 202.4 L926.1 205.5 L924.2 208.5 L922.2 211.5 L919.9 214.4 L917.4 217.3 L914.6 220 L911.7 222.6 L908.6 225.1 L905.3 227.5 L901.8 229.8 L898.2 232 L894.3 234 L890.4 235.9 L886.3 237.6 L882.1 239.2 L877.7 240.6 L873.3 241.9 L868.8 243 L864.2 243.9 L859.5 244.7 L854.8 245.3 L850 245.7 L845.2 246 L840.4 246.1 L835.6 246 L830.8 245.7 L826 245.3 L821.3 244.7 L816.6 243.9 L812 243 L807.5 241.9 L803.1 240.6 L798.7 239.2 L794.5 237.6 L790.4 235.9 L786.5 234 L782.6 232 L779 229.8 L775.5 227.5 L772.2 225.1 L769.1 222.6 L766.2 220 L763.4 217.3 L760.9 214.4 L758.6 211.5 L756.6 208.5 L754.7 205.5 L753.1 202.4 L751.8 199.2 L750.6 196 L749.8 192.7 L749.1 189.4 L748.8 186.1 L748.6 182.8Z" fill="url(#g3_1)" stroke="#08160a" stroke-width="1.0" stroke-linejoin="round"/>
<linearGradient id="g3_2" gradientUnits="userSpaceOnUse" x1="744.1" y1="0" x2="936.7" y2="0"><stop offset="0.000" stop-color="#09ab09"/><stop offset="0.083" stop-color="#0bd90b"/><stop offset="0.167" stop-color="#0ce70c"/><stop offset="0.250" stop-color="#0def0d"/><stop offset="0.333" stop-color="#0df30d"/><stop offset="0.417" stop-color="#0df40d"/><stop offset="0.500" stop-color="#0df20d"/><stop offset="0.583" stop-color="#0dee0d"/><stop offset="0.667" stop-color="#0ce70c"/><stop offset="0.750" stop-color="#0cdd0c"/><stop offset="0.833" stop-color="#0bd00b"/><stop offset="0.917" stop-color="#0abc0a"/><stop offset="1.000" stop-color="#078807"/></linearGradient>
<path d="M748.6 182.8 L748.8 186.1 L749.1 189.4 L749.8 192.7 L750.6 196 L751.8 199.2 L753.1 202.4 L754.7 205.5 L756.6 208.5 L758.6 211.5 L760.9 214.4 L763.4 217.3 L766.2 220 L769.1 222.6 L772.2 225.1 L775.5 227.5 L779 229.8 L782.6 232 L786.5 234 L790.4 235.9 L794.5 237.6 L798.7 239.2 L803.1 240.6 L807.5 241.9 L812 243 L816.6 243.9 L821.3 244.7 L826 245.3 L830.8 245.7 L835.6 246 L840.4 246.1 L845.2 246 L850 245.7 L854.8 245.3 L859.5 244.7 L864.2 243.9 L868.8 243 L873.3 241.9 L877.7 240.6 L882.1 239.2 L886.3 237.6 L890.4 235.9 L894.3 234 L898.2 232 L901.8 229.8 L905.3 227.5 L908.6 225.1 L911.7 222.6 L914.6 220 L917.4 217.3 L919.9 214.4 L922.2 211.5 L924.2 208.5 L926.1 205.5 L927.7 202.4 L929 199.2 L930.2 196 L931 192.7 L931.7 189.4 L932 186.1 L932.2 182.8 L936.7 186.6 L936.6 190.1 L936.2 193.6 L935.5 197 L934.6 200.4 L933.4 203.8 L932 207.1 L930.3 210.4 L928.4 213.6 L926.2 216.8 L923.8 219.8 L921.2 222.8 L918.3 225.6 L915.2 228.4 L912 231 L908.5 233.6 L904.8 236 L901 238.2 L897 240.3 L892.8 242.3 L888.5 244.1 L884.1 245.8 L879.6 247.3 L874.9 248.6 L870.2 249.7 L865.3 250.7 L860.4 251.5 L855.5 252.2 L850.5 252.6 L845.4 252.9 L840.4 253 L835.4 252.9 L830.3 252.6 L825.3 252.2 L820.4 251.5 L815.5 250.7 L810.6 249.7 L805.9 248.6 L801.2 247.3 L796.7 245.8 L792.2 244.1 L788 242.3 L783.8 240.3 L779.8 238.2 L776 236 L772.3 233.6 L768.8 231 L765.6 228.4 L762.5 225.6 L759.6 222.8 L757 219.8 L754.6 216.8 L752.4 213.6 L750.5 210.4 L748.8 207.1 L747.4 203.8 L746.2 200.4 L745.3 197 L744.6 193.6 L744.2 190.1 L744.1 186.6Z" fill="url(#g3_2)" stroke="#08160a" stroke-width="1.0" stroke-linejoin="round"/>
<linearGradient id="g3_3" gradientUnits="userSpaceOnUse" x1="744.1" y1="0" x2="936.7" y2="0"><stop offset="0.000" stop-color="#044c04"/><stop offset="0.083" stop-color="#078d07"/><stop offset="0.167" stop-color="#08a108"/><stop offset="0.250" stop-color="#09ab09"/><stop offset="0.333" stop-color="#09b109"/><stop offset="0.417" stop-color="#09b209"/><stop offset="0.500" stop-color="#09b009"/><stop offset="0.583" stop-color="#09aa09"/><stop offset="0.667" stop-color="#08a008"/><stop offset="0.750" stop-color="#089208"/><stop offset="0.833" stop-color="#077f07"/><stop offset="0.917" stop-color="#056305"/><stop offset="1.000" stop-color="#023302"/></linearGradient>
<path d="M744.1 186.6 L744.2 190.1 L744.6 193.6 L745.3 197 L746.2 200.4 L747.4 203.8 L748.8 207.1 L750.5 210.4 L752.4 213.6 L754.6 216.8 L757 219.8 L759.6 222.8 L762.5 225.6 L765.6 228.4 L768.8 231 L772.3 233.6 L776 236 L779.8 238.2 L783.8 240.3 L788 242.3 L792.2 244.1 L796.7 245.8 L801.2 247.3 L805.9 248.6 L810.6 249.7 L815.5 250.7 L820.4 251.5 L825.3 252.2 L830.3 252.6 L835.4 252.9 L840.4 253 L845.4 252.9 L850.5 252.6 L855.5 252.2 L860.4 251.5 L865.3 250.7 L870.2 249.7 L874.9 248.6 L879.6 247.3 L884.1 245.8 L888.5 244.1 L892.8 242.3 L897 240.3 L901 238.2 L904.8 236 L908.5 233.6 L912 231 L915.2 228.4 L918.3 225.6 L921.2 222.8 L923.8 219.8 L926.2 216.8 L928.4 213.6 L930.3 210.4 L932 207.1 L933.4 203.8 L934.6 200.4 L935.5 197 L936.2 193.6 L936.6 190.1 L936.7 186.6 L936.7 192.1 L936.6 195.6 L936.2 199.1 L935.5 202.5 L934.6 205.9 L933.4 209.3 L932 212.6 L930.3 215.9 L928.4 219.1 L926.2 222.3 L923.8 225.3 L921.2 228.3 L918.3 231.1 L915.2 233.9 L912 236.5 L908.5 239.1 L904.8 241.4 L901 243.7 L897 245.8 L892.8 247.8 L888.5 249.6 L884.1 251.3 L879.6 252.7 L874.9 254.1 L870.2 255.2 L865.3 256.2 L860.4 257 L855.5 257.7 L850.5 258.1 L845.4 258.4 L840.4 258.5 L835.4 258.4 L830.3 258.1 L825.3 257.7 L820.4 257 L815.5 256.2 L810.6 255.2 L805.9 254.1 L801.2 252.7 L796.7 251.3 L792.2 249.6 L788 247.8 L783.8 245.8 L779.8 243.7 L776 241.4 L772.3 239.1 L768.8 236.5 L765.6 233.9 L762.5 231.1 L759.6 228.3 L757 225.3 L754.6 222.3 L752.4 219.1 L750.5 215.9 L748.8 212.6 L747.4 209.3 L746.2 205.9 L745.3 202.5 L744.6 199.1 L744.2 195.6 L744.1 192.1Z" fill="url(#g3_3)" stroke="#08160a" stroke-width="1.0" stroke-linejoin="round"/>
<path d="M936.7 172 L936.5 169.7 L936.3 167.4 L935.9 165.1 L935.4 162.8 L934.8 160.5 L934.1 158.2 L933.3 156 L932.3 153.8 L931.3 151.6 L930.1 149.4 L928.8 147.3 L927.5 145.1 L926 143.1 L924.4 141 L922.7 139 L920.9 137.1 L919 135.2 L917 133.3 L914.9 131.5 L912.7 129.7 L910.5 128 L908.1 126.3 L905.7 124.7 L903.2 123.2 L900.6 121.7 L898 120.3 L895.2 119 L892.4 117.7 L889.6 116.4 L886.6 115.3 L883.7 114.2 L880.6 113.2 L877.6 112.3 L874.4 111.4 L871.3 110.7 L868.1 109.9 L864.8 109.3 L861.6 108.8 L858.3 108.3 L855 107.9 L851.6 107.6 L848.3 107.4 L844.9 107.2 L841.6 107.2 L838.2 107.2 L834.9 107.3 L831.5 107.4 L828.2 107.7 L824.8 108 L821.5 108.4 L818.2 108.9 L815 109.5 L811.8 110.2 L808.6 110.9 L805.4 111.7 L802.3 112.6 L799.2 113.5 L796.2 114.5 L793.3 115.6 L790.4 116.8 L787.5 118 L784.8 119.3 L782 120.7 L779.4 122.2 L776.8 123.7 L774.4 125.2 L772 126.8 L769.6 128.5 L767.4 130.2 L765.2 132 L763.2 133.8 L761.2 135.7 L759.4 137.7 L757.6 139.6 L755.9 141.6 L754.4 143.7 L752.9 145.8 L751.6 147.9 L750.3 150 L749.2 152.2 L748.2 154.4 L747.3 156.7 L746.5 158.9 L745.8 161.2 L745.2 163.5 L744.8 165.8 L744.4 168.1 L744.2 170.4 L744.1 172.7 L744.1 175 L744.3 177.3 L744.5 179.6 L744.9 181.9 L745.4 184.2 L746 186.5 L746.7 188.8 L747.5 191 L748.5 193.2 L749.5 195.4 L750.7 197.6 L752 199.7 L753.3 201.9 L754.8 203.9 L756.4 206 L758.1 208 L759.9 209.9 L761.8 211.8 L763.8 213.7 L765.9 215.5 L768.1 217.3 L770.3 219 L772.7 220.7 L775.1 222.3 L777.6 223.8 L780.2 225.3 L782.8 226.7 L785.6 228 L788.4 229.3 L791.2 230.6 L794.2 231.7 L797.1 232.8 L800.2 233.8 L803.2 234.7 L806.4 235.6 L809.5 236.3 L812.7 237.1 L816 237.7 L819.2 238.2 L822.5 238.7 L825.8 239.1 L829.2 239.4 L832.5 239.6 L835.9 239.8 L839.2 239.8 L842.6 239.8 L845.9 239.7 L849.3 239.6 L852.6 239.3 L856 239 L859.3 238.6 L862.6 238.1 L865.8 237.5 L869 236.8 L872.2 236.1 L875.4 235.3 L878.5 234.4 L881.6 233.5 L884.6 232.5 L887.5 231.4 L890.4 230.2 L893.3 229 L896 227.7 L898.8 226.3 L901.4 224.8 L904 223.3 L906.4 221.8 L908.8 220.2 L911.2 218.5 L913.4 216.8 L915.6 215 L917.6 213.2 L919.6 211.3 L921.4 209.3 L923.2 207.4 L924.9 205.4 L926.4 203.3 L927.9 201.2 L929.2 199.1 L930.5 197 L931.6 194.8 L932.6 192.6 L933.5 190.3 L934.3 188.1 L935 185.8 L935.6 183.5 L936 181.2 L936.4 178.9 L936.6 176.6 L936.7 174.3ZM926.1 172.2 L926 170.1 L925.7 168 L925.4 166 L925 164 L924.4 161.9 L923.8 159.9 L923.1 157.9 L922.2 155.9 L921.3 154 L920.3 152 L919.1 150.1 L917.9 148.3 L916.6 146.4 L915.1 144.6 L913.6 142.8 L912 141.1 L910.3 139.4 L908.6 137.7 L906.7 136.1 L904.8 134.5 L902.8 133 L900.7 131.5 L898.5 130.1 L896.3 128.7 L894 127.4 L891.6 126.2 L889.2 125 L886.7 123.8 L884.2 122.7 L881.6 121.7 L878.9 120.7 L876.2 119.9 L873.5 119 L870.7 118.3 L867.9 117.6 L865 116.9 L862.1 116.4 L859.2 115.9 L856.3 115.5 L853.4 115.1 L850.4 114.9 L847.4 114.6 L844.4 114.5 L841.4 114.5 L838.5 114.5 L835.5 114.5 L832.5 114.7 L829.5 114.9 L826.5 115.2 L823.6 115.6 L820.7 116 L817.8 116.5 L814.9 117.1 L812.1 117.8 L809.3 118.5 L806.5 119.3 L803.8 120.1 L801.1 121 L798.5 122 L795.9 123 L793.3 124.1 L790.9 125.3 L788.5 126.5 L786.1 127.8 L783.8 129.1 L781.6 130.5 L779.5 132 L777.4 133.5 L775.4 135 L773.5 136.6 L771.7 138.2 L769.9 139.9 L768.3 141.6 L766.7 143.4 L765.2 145.1 L763.8 147 L762.5 148.8 L761.3 150.7 L760.2 152.6 L759.2 154.6 L758.3 156.5 L757.5 158.5 L756.8 160.5 L756.2 162.5 L755.7 164.6 L755.3 166.6 L755 168.7 L754.8 170.7 L754.7 172.8 L754.7 174.8 L754.8 176.9 L755.1 179 L755.4 181 L755.8 183 L756.4 185.1 L757 187.1 L757.7 189.1 L758.6 191.1 L759.5 193 L760.5 195 L761.7 196.9 L762.9 198.7 L764.2 200.6 L765.7 202.4 L767.2 204.2 L768.8 205.9 L770.5 207.6 L772.2 209.3 L774.1 210.9 L776 212.5 L778 214 L780.1 215.5 L782.3 216.9 L784.5 218.3 L786.8 219.6 L789.2 220.8 L791.6 222 L794.1 223.2 L796.6 224.3 L799.2 225.3 L801.9 226.3 L804.6 227.1 L807.3 228 L810.1 228.7 L812.9 229.4 L815.8 230.1 L818.7 230.6 L821.6 231.1 L824.5 231.5 L827.4 231.9 L830.4 232.1 L833.4 232.4 L836.4 232.5 L839.4 232.5 L842.3 232.5 L845.3 232.5 L848.3 232.3 L851.3 232.1 L854.3 231.8 L857.2 231.4 L860.1 231 L863 230.5 L865.9 229.9 L868.7 229.2 L871.5 228.5 L874.3 227.7 L877 226.9 L879.7 226 L882.3 225 L884.9 224 L887.5 222.9 L889.9 221.7 L892.3 220.5 L894.7 219.2 L897 217.9 L899.2 216.5 L901.3 215 L903.4 213.5 L905.4 212 L907.3 210.4 L909.1 208.8 L910.9 207.1 L912.5 205.4 L914.1 203.6 L915.6 201.9 L917 200 L918.3 198.2 L919.5 196.3 L920.6 194.4 L921.6 192.4 L922.5 190.5 L923.3 188.5 L924 186.5 L924.6 184.5 L925.1 182.4 L925.5 180.4 L925.8 178.3 L926 176.3 L926.1 174.2Z" fill="#0ac50a" fill-rule="evenodd" stroke="#08160a" stroke-width="1.0" stroke-linejoin="round"/><path d="M1008.4 305 l-7.8 -2.5" stroke="#b01c1c" stroke-width="1.3" fill="none"/><text x="1001.1999999999999" y="302.5" font-size="5.8" fill="#24242a" font-family="Liberation Sans, sans-serif">X</text><path d="M1008.4 305 l-3.8 6.2" stroke="#1c9a1c" stroke-width="1.3" fill="none"/><text x="1005.6999999999999" y="313" font-size="5.8" fill="#24242a" font-family="Liberation Sans, sans-serif">Y</text><path d="M1008.4 305 l0.5 -7.5" stroke="#1c1ca8" stroke-width="1.3" fill="none"/><text x="1009.6999999999999" y="297" font-size="5.8" fill="#24242a" font-family="Liberation Sans, sans-serif">Z</text></svg></div><div class="sub" style="left:288px;top:320px;width:369px;height:287px"><div class="tb"><svg class="wi" width="10" height="10" viewBox="0 0 10 10"><path d="M0.8 1h4v1.8h-2.2v1.4h1.6v1.6h-1.6v3h-1.8z" fill="#e0301a"/><circle cx="6" cy="6" r="2.5" fill="none" stroke="#1c3fb0" stroke-width="1.9" stroke-dasharray="1.3 0.66"/><circle cx="6" cy="6" r="2" fill="none" stroke="#1c3fb0" stroke-width="1.2"/></svg><span class="wb" style="left:333.0px"><svg width="9" height="9"><path d="M2.3 6.6h4.4" stroke="#222" stroke-width="1.3"/></svg></span><span class="wb" style="left:343.7px"><svg width="9" height="9"><path d="M2.6 2.4h3.8v4h-3.8z" fill="none" stroke="#222" stroke-width="1"/><path d="M2.4 2.6h4.2" stroke="#222" stroke-width="1.4"/></svg></span><span class="wb" style="left:354.4px"><svg width="9" height="9"><path d="M2.5 2.7l4 4M6.5 2.7l-4 4" stroke="#111" stroke-width="1.5"/></svg></span></div><svg class="v3d" style="left:2px;top:12px" width="363" height="271" viewBox="291 333 363 271"><defs><linearGradient id="bg2" x1="0" y1="0" x2="0" y2="1"><stop offset="0" stop-color="#343468"/><stop offset="1" stop-color="#9897b1"/></linearGradient></defs><rect x="291" y="333" width="363" height="271" fill="url(#bg2)"/><path d="M567.3 468.5 L567.2 465.2 L567.1 461.9 L566.8 458.6 L566.4 455.3 L565.9 452 L565.2 448.7 L564.5 445.5 L563.6 442.3 L562.7 439.1 L561.6 436 L560.4 432.9 L559.1 429.9 L557.7 426.9 L556.2 423.9 L554.6 421 L552.9 418.2 L551.1 415.4 L549.2 412.7 L547.2 410 L545.1 407.4 L542.9 404.9 L540.6 402.5 L538.3 400.2 L535.9 397.9 L533.4 395.7 L530.8 393.6 L528.1 391.6 L525.4 389.7 L522.6 387.9 L519.8 386.2 L516.9 384.6 L513.9 383.1 L510.9 381.7 L507.9 380.4 L504.8 379.2 L501.7 378.1 L498.5 377.2 L495.3 376.3 L492.1 375.6 L488.8 374.9 L485.5 374.4 L482.2 374 L478.9 373.7 L475.6 373.6 L472.3 373.5 L469 373.6 L465.7 373.7 L462.4 374 L459.1 374.4 L455.8 374.9 L452.5 375.6 L449.3 376.3 L446.1 377.2 L442.9 378.1 L439.8 379.2 L436.7 380.4 L433.7 381.7 L430.7 383.1 L427.7 384.6 L424.8 386.2 L422 387.9 L419.2 389.7 L416.5 391.6 L413.8 393.6 L411.2 395.7 L408.7 397.9 L406.3 400.2 L404 402.5 L401.7 404.9 L399.5 407.4 L397.4 410 L395.4 412.7 L393.5 415.4 L391.7 418.2 L390 421 L388.4 423.9 L386.9 426.9 L385.5 429.9 L384.2 432.9 L383 436 L381.9 439.1 L381 442.3 L380.1 445.5 L379.4 448.7 L378.7 452 L378.2 455.3 L377.8 458.6 L377.5 461.9 L377.4 465.2 L377.3 468.5 L377.4 471.8 L377.5 475.1 L377.8 478.4 L378.2 481.7 L378.7 485 L379.4 488.3 L380.1 491.5 L381 494.7 L381.9 497.9 L383 501 L384.2 504.1 L385.5 507.1 L386.9 510.1 L388.4 513.1 L390 516 L391.7 518.8 L393.5 521.6 L395.4 524.3 L397.4 527 L399.5 529.6 L401.7 532.1 L404 534.5 L406.3 536.8 L408.7 539.1 L411.2 541.3 L413.8 543.4 L416.5 545.4 L419.2 547.3 L422 549.1 L424.8 550.8 L427.7 552.4 L430.7 553.9 L433.7 555.3 L436.7 556.6 L439.8 557.8 L442.9 558.9 L446.1 559.8 L449.3 560.7 L452.5 561.4 L455.8 562.1 L459.1 562.6 L462.4 563 L465.7 563.3 L469 563.4 L472.3 563.5 L475.6 563.4 L478.9 563.3 L482.2 563 L485.5 562.6 L488.8 562.1 L492.1 561.4 L495.3 560.7 L498.5 559.8 L501.7 558.9 L504.8 557.8 L507.9 556.6 L510.9 555.3 L513.9 553.9 L516.9 552.4 L519.8 550.8 L522.6 549.1 L525.4 547.3 L528.1 545.4 L530.8 543.4 L533.4 541.3 L535.9 539.1 L538.3 536.8 L540.6 534.5 L542.9 532.1 L545.1 529.6 L547.2 527 L549.2 524.3 L551.1 521.6 L552.9 518.8 L554.6 516 L556.2 513.1 L557.7 510.1 L559.1 507.1 L560.4 504.1 L561.6 501 L562.7 497.9 L563.6 494.7 L564.5 491.5 L565.2 488.3 L565.9 485 L566.4 481.7 L566.8 478.4 L567.1 475.1 L567.2 471.8ZM556.9 468.5 L556.8 465.5 L556.6 462.6 L556.4 459.7 L556 456.7 L555.6 453.8 L555 450.9 L554.3 448 L553.6 445.2 L552.7 442.4 L551.8 439.6 L550.7 436.8 L549.5 434.1 L548.3 431.4 L547 428.8 L545.5 426.2 L544 423.7 L542.4 421.2 L540.7 418.8 L538.9 416.4 L537.1 414.2 L535.1 411.9 L533.1 409.8 L531 407.7 L528.9 405.7 L526.6 403.7 L524.4 401.9 L522 400.1 L519.6 398.4 L517.1 396.8 L514.6 395.3 L512 393.8 L509.4 392.5 L506.7 391.3 L504 390.1 L501.2 389 L498.4 388.1 L495.6 387.2 L492.8 386.5 L489.9 385.8 L487 385.2 L484.1 384.8 L481.1 384.4 L478.2 384.2 L475.3 384 L472.3 383.9 L469.3 384 L466.4 384.2 L463.5 384.4 L460.5 384.8 L457.6 385.2 L454.7 385.8 L451.8 386.5 L449 387.2 L446.2 388.1 L443.4 389 L440.6 390.1 L437.9 391.3 L435.2 392.5 L432.6 393.8 L430 395.3 L427.5 396.8 L425 398.4 L422.6 400.1 L420.2 401.9 L418 403.7 L415.7 405.7 L413.6 407.7 L411.5 409.8 L409.5 411.9 L407.5 414.2 L405.7 416.4 L403.9 418.8 L402.2 421.2 L400.6 423.7 L399.1 426.2 L397.6 428.8 L396.3 431.4 L395.1 434.1 L393.9 436.8 L392.8 439.6 L391.9 442.4 L391 445.2 L390.3 448 L389.6 450.9 L389 453.8 L388.6 456.7 L388.2 459.7 L388 462.6 L387.8 465.5 L387.8 468.5 L387.8 471.5 L388 474.4 L388.2 477.3 L388.6 480.3 L389 483.2 L389.6 486.1 L390.3 489 L391 491.8 L391.9 494.6 L392.8 497.4 L393.9 500.2 L395.1 502.9 L396.3 505.6 L397.6 508.2 L399.1 510.8 L400.6 513.3 L402.2 515.8 L403.9 518.2 L405.7 520.6 L407.5 522.8 L409.5 525.1 L411.5 527.2 L413.6 529.3 L415.7 531.3 L418 533.3 L420.2 535.1 L422.6 536.9 L425 538.6 L427.5 540.2 L430 541.7 L432.6 543.2 L435.2 544.5 L437.9 545.7 L440.6 546.9 L443.4 548 L446.2 548.9 L449 549.8 L451.8 550.5 L454.7 551.2 L457.6 551.8 L460.5 552.2 L463.5 552.6 L466.4 552.8 L469.3 553 L472.3 553 L475.3 553 L478.2 552.8 L481.1 552.6 L484.1 552.2 L487 551.8 L489.9 551.2 L492.8 550.5 L495.6 549.8 L498.4 548.9 L501.2 548 L504 546.9 L506.7 545.7 L509.4 544.5 L512 543.2 L514.6 541.7 L517.1 540.2 L519.6 538.6 L522 536.9 L524.4 535.1 L526.6 533.3 L528.9 531.3 L531 529.3 L533.1 527.2 L535.1 525.1 L537.1 522.8 L538.9 520.6 L540.7 518.2 L542.4 515.8 L544 513.3 L545.5 510.8 L547 508.2 L548.3 505.6 L549.5 502.9 L550.7 500.2 L551.8 497.4 L552.7 494.6 L553.6 491.8 L554.3 489 L555 486.1 L555.6 483.2 L556 480.3 L556.4 477.3 L556.6 474.4 L556.8 471.5ZM502.1 526.9 L507.5 523.8 L522.3 536.7 L526.4 533.5 L530.2 530.1 L533.9 526.4 L537.3 522.6 L540.5 518.5 L527.6 503.7 L529.6 500.4 L531.3 497 L532.9 493.6 L534.2 490 L535.4 486.4 L536.3 482.8 L555.9 481.3 L556.5 476.2 L556.8 471.1 L556.8 465.9 L556.5 460.8 L555.9 455.7 L536.3 454.2 L535.4 450.6 L534.2 447 L532.9 443.4 L531.3 440 L529.6 436.6 L527.6 433.3 L540.5 418.5 L537.3 414.4 L533.9 410.6 L530.2 406.9 L526.4 403.5 L522.3 400.3 L507.5 413.2 L504.2 411.2 L500.8 409.5 L497.4 407.9 L493.8 406.6 L490.2 405.4 L486.6 404.5 L485.1 384.9 L480 384.3 L474.9 384 L469.7 384 L464.6 384.3 L459.5 384.9 L458.1 404.5 L454.4 405.4 L450.8 406.6 L447.2 407.9 L443.8 409.5 L440.4 411.2 L437.1 413.2 L422.3 400.3 L418.2 403.5 L414.4 406.9 L410.7 410.6 L407.3 414.4 L404.1 418.5 L417 433.3 L415 436.6 L413.3 440 L411.7 443.4 L410.4 447 L409.2 450.6 L408.3 454.2 L388.7 455.7 L388.1 460.8 L387.8 465.9 L387.8 471.1 L388.1 476.2 L388.7 481.3 L408.3 482.8 L409.2 486.4 L410.4 490 L411.7 493.6 L413.3 497 L415 500.4 L417 503.7 L404.1 518.5 L407.3 522.6 L410.7 526.4 L414.4 530.1 L418.2 533.5 L422.3 536.7 L437.1 523.8 L442.5 526.9 L464.7 483.4 L463.9 483 L463.2 482.5 L462.5 482 L461.8 481.5 L461.1 480.9 L460.5 480.3 L459.9 479.7 L459.3 479 L458.8 478.3 L458.3 477.6 L457.8 476.9 L457.4 476.1 L457 475.3 L456.7 474.5 L456.4 473.7 L456.1 472.8 L455.9 472 L455.8 471.1 L455.7 470.2 L455.6 469.4 L455.6 468.5 L455.6 467.6 L455.7 466.8 L455.8 465.9 L455.9 465 L456.1 464.2 L456.4 463.3 L456.7 462.5 L457 461.7 L457.4 460.9 L457.8 460.1 L458.3 459.4 L458.8 458.7 L459.3 458 L459.9 457.3 L460.5 456.7 L461.1 456.1 L461.8 455.5 L462.5 455 L463.2 454.5 L463.9 454 L464.7 453.6 L465.5 453.2 L466.3 452.9 L467.1 452.6 L468 452.3 L468.8 452.1 L469.7 452 L470.6 451.9 L471.4 451.8 L472.3 451.8 L473.2 451.8 L474 451.9 L474.9 452 L475.8 452.1 L476.6 452.3 L477.5 452.6 L478.3 452.9 L479.1 453.2 L479.9 453.6 L480.7 454 L481.4 454.5 L482.1 455 L482.8 455.5 L483.5 456.1 L484.1 456.7 L484.7 457.3 L485.3 458 L485.8 458.7 L486.3 459.4 L486.8 460.1 L487.2 460.9 L487.6 461.7 L487.9 462.5 L488.2 463.3 L488.5 464.2 L488.7 465 L488.8 465.9 L488.9 466.8 L489 467.6 L489 468.5 L489 469.4 L488.9 470.2 L488.8 471.1 L488.7 472 L488.5 472.8 L488.2 473.7 L487.9 474.5 L487.6 475.3 L487.2 476.1 L486.8 476.9 L486.3 477.6 L485.8 478.3 L485.3 479 L484.7 479.7 L484.1 480.3 L483.5 480.9 L482.8 481.5 L482.1 482 L481.4 482.5 L480.7 483 L479.9 483.4ZM501.5 468.5 L501.3 467.6 L500.9 466.8 L500.3 466.1 L499.4 465.7 L498.5 465.6 L497.6 465.7 L496.8 466.1 L496.1 466.8 L495.7 467.6 L495.6 468.5 L495.7 469.4 L496.1 470.2 L496.8 470.9 L497.6 471.3 L498.5 471.4 L499.4 471.3 L500.3 470.9 L500.9 470.2 L501.3 469.4ZM449 468.5 L448.9 467.6 L448.5 466.8 L447.8 466.1 L447 465.7 L446.1 465.6 L445.2 465.7 L444.3 466.1 L443.7 466.8 L443.3 467.6 L443.1 468.5 L443.3 469.4 L443.7 470.2 L444.3 470.9 L445.2 471.3 L446.1 471.4 L447 471.3 L447.8 470.9 L448.5 470.2 L448.9 469.4Z" fill="#0eff0e" fill-rule="evenodd" stroke="#08160a" stroke-width="1.0" stroke-linejoin="round"/>
<path d="M488.7 500.7 L489.8 500.1 L490.9 499.4 L492 498.8 L493 498.1 L494 497.3 L495 496.6 L496 495.7 L496.9 494.9 L497.8 494 L498.7 493.1 L499.5 492.2 L500.4 491.2 L501.1 490.2 L501.9 489.2 L502.6 488.2 L503.2 487.1 L503.9 486 L504.5 484.9 L505 483.8 L505.5 482.6 L506 481.4 L506.4 480.3 L507.5 479.3 L508.7 478.2 L509.6 477.1 L510.5 475.9 L511.2 474.7 L511.7 473.3 L512.1 472 L512.4 470.6 L512.6 469.2 L512.6 467.8 L512.4 466.4 L512.1 465 L511.7 463.7 L511.2 462.3 L510.5 461.1 L509.6 459.9 L508.7 458.8 L507.5 457.7 L506.4 456.7 L506 455.6 L505.5 454.4 L505 453.2 L504.5 452.1 L503.9 451 L503.2 449.9 L502.6 448.8 L501.9 447.8 L501.1 446.8 L500.4 445.8 L499.5 444.8 L498.7 443.9 L497.8 443 L496.9 442.1 L496 441.3 L495 440.4 L494 439.7 L493 438.9 L492 438.2 L490.9 437.6 L489.8 436.9 L488.7 436.3 L487.6 435.8 L486.4 435.3 L485.2 434.8 L484.1 434.4 L482.9 434 L481.6 433.6 L480.4 433.3 L479.2 433.1 L477.9 432.8 L476.7 432.7 L475.4 432.5 L474.2 432.4 L472.9 432.4 L471.7 432.4 L470.4 432.4 L469.2 432.5 L467.9 432.7 L466.7 432.8 L465.4 433.1 L464.2 433.3 L463 433.6 L461.7 434 L460.5 434.4 L459.4 434.8 L458.2 435.3 L457 435.8 L455.9 436.3 L454.8 436.9 L453.7 437.6 L452.6 438.2 L451.6 438.9 L450.6 439.7 L449.6 440.4 L448.6 441.3 L447.7 442.1 L446.8 443 L445.9 443.9 L445.1 444.8 L444.2 445.8 L443.5 446.8 L442.7 447.8 L442 448.8 L441.4 449.9 L440.7 451 L440.1 452.1 L439.6 453.2 L439.1 454.4 L438.6 455.6 L438.2 456.7 L437.1 457.7 L435.9 458.8 L435 459.9 L434.1 461.1 L433.4 462.3 L432.9 463.7 L432.5 465 L432.2 466.4 L432 467.8 L432 469.2 L432.2 470.6 L432.5 472 L432.9 473.3 L433.4 474.7 L434.1 475.9 L435 477.1 L435.9 478.2 L437.1 479.3 L438.2 480.3 L438.6 481.4 L439.1 482.6 L439.6 483.8 L440.1 484.9 L440.7 486 L441.4 487.1 L442 488.2 L442.7 489.2 L443.5 490.2 L444.2 491.2 L445.1 492.2 L445.9 493.1 L446.8 494 L447.7 494.9 L448.6 495.7 L449.6 496.6 L450.6 497.3 L451.6 498.1 L452.6 498.8 L453.7 499.4 L454.8 500.1 L455.9 500.7" fill="none" stroke="#08160a" stroke-width="1.0"/><path d="M641 591 l-8.2 -3.5" stroke="#b01c1c" stroke-width="1.3" fill="none"/><text x="632.7" y="587" font-size="5.8" fill="#24242a" font-family="Liberation Sans, sans-serif">X</text><path d="M641 591 l-3.5 8" stroke="#1c9a1c" stroke-width="1.3" fill="none"/><text x="638.2" y="600" font-size="5.8" fill="#24242a" font-family="Liberation Sans, sans-serif">Y</text><path d="M641 591 l0.6 0.4" stroke="#1c1ca8" stroke-width="1.3" fill="none"/><text x="642.4" y="591" font-size="5.8" fill="#24242a" font-family="Liberation Sans, sans-serif">Z</text></svg></div><div class="sub active" style="left:656px;top:320px;width:368px;height:287px"><div class="tb"><svg class="wi" width="10" height="10" viewBox="0 0 10 10"><path d="M0.8 1h4v1.8h-2.2v1.4h1.6v1.6h-1.6v3h-1.8z" fill="#e0301a"/><circle cx="6" cy="6" r="2.5" fill="none" stroke="#1c3fb0" stroke-width="1.9" stroke-dasharray="1.3 0.66"/><circle cx="6" cy="6" r="2" fill="none" stroke="#1c3fb0" stroke-width="1.2"/></svg><span class="wb" style="left:332.0px"><svg width="9" height="9"><path d="M2.3 6.6h4.4" stroke="#222" stroke-width="1.3"/></svg></span><span class="wb" style="left:342.7px"><svg width="9" height="9"><path d="M2.6 2.4h3.8v4h-3.8z" fill="none" stroke="#222" stroke-width="1"/><path d="M2.4 2.6h4.2" stroke="#222" stroke-width="1.4"/></svg></span><span class="wb" style="left:353.4px"><svg width="9" height="9"><path d="M2.5 2.7l4 4M6.5 2.7l-4 4" stroke="#111" stroke-width="1.5"/></svg></span></div><svg class="v3d" style="left:2px;top:12px" width="363" height="271" viewBox="659 333 363 271"><defs><linearGradient id="bg1" x1="0" y1="0" x2="0" y2="1"><stop offset="0" stop-color="#343468"/><stop offset="1" stop-color="#9897b1"/></linearGradient></defs><rect x="659" y="333" width="363" height="271" fill="url(#bg1)"/><path d="M852.4 387.1 L857.9 387.6 L857.9 410.2 L852.4 409.7Z" fill="#09b409" stroke="#09b409" stroke-width="0.5"/>
<path d="M857.9 387.6 L863.3 388.4 L863.3 411 L857.9 410.2Z" fill="#09b409" stroke="#09b409" stroke-width="0.5"/>
<path d="M815.4 388.6 L820.8 387.8 L820.8 410.4 L815.4 411.2Z" fill="#09a909" stroke="#09a909" stroke-width="0.5"/>
<path d="M863.3 388.4 L868.7 389.3 L868.7 411.9 L863.3 411Z" fill="#09b409" stroke="#09b409" stroke-width="0.5"/>
<path d="M810.1 389.6 L815.4 388.6 L815.4 411.2 L810.1 412.2Z" fill="#09a609" stroke="#09a609" stroke-width="0.5"/>
<path d="M868.7 389.3 L874 390.4 L874 413 L868.7 411.9Z" fill="#09b309" stroke="#09b309" stroke-width="0.5"/>
<path d="M804.8 390.8 L810.1 389.6 L810.1 412.2 L804.8 413.4Z" fill="#08a308" stroke="#08a308" stroke-width="0.5"/>
<path d="M874 390.4 L879.2 391.7 L879.2 414.4 L874 413Z" fill="#09b209" stroke="#09b209" stroke-width="0.5"/>
<path d="M799.6 392.2 L804.8 390.8 L804.8 413.4 L799.6 414.8Z" fill="#089f08" stroke="#089f08" stroke-width="0.5"/>
<path d="M879.2 391.7 L884.3 393.3 L884.3 415.9 L879.2 414.4Z" fill="#09b109" stroke="#09b109" stroke-width="0.5"/>
<path d="M794.6 393.8 L799.6 392.2 L799.6 414.8 L794.6 416.4Z" fill="#089c08" stroke="#089c08" stroke-width="0.5"/>
<path d="M884.3 393.3 L889.3 394.9 L889.3 417.6 L884.3 415.9Z" fill="#09af09" stroke="#09af09" stroke-width="0.5"/>
<path d="M789.6 395.5 L794.6 393.8 L794.6 416.4 L789.6 418.1Z" fill="#089708" stroke="#089708" stroke-width="0.5"/>
<path d="M889.3 394.9 L894.1 396.8 L894.1 419.4 L889.3 417.6Z" fill="#09ad09" stroke="#09ad09" stroke-width="0.5"/>
<path d="M784.9 397.4 L789.6 395.5 L789.6 418.1 L784.9 420Z" fill="#089308" stroke="#089308" stroke-width="0.5"/>
<path d="M894.1 396.8 L898.8 398.9 L898.8 421.5 L894.1 419.4Z" fill="#09ab09" stroke="#09ab09" stroke-width="0.5"/>
<path d="M780.2 399.5 L784.9 397.4 L784.9 420 L780.2 422.1Z" fill="#078e07" stroke="#078e07" stroke-width="0.5"/>
<path d="M775.8 401.8 L780.2 399.5 L780.2 422.1 L775.8 424.4Z" fill="#078907" stroke="#078907" stroke-width="0.5"/>
<path d="M921.8 413.5 L925.2 416.5 L925.2 439.1 L921.8 436.1Z" fill="#089308" stroke="#089308" stroke-width="0.5"/>
<path d="M925.2 416.5 L928.2 419.7 L928.2 442.3 L925.2 439.1Z" fill="#078e07" stroke="#078e07" stroke-width="0.5"/>
<path d="M751.3 420.7 L754.3 417.5 L754.3 440.1 L751.3 443.3Z" fill="#056205" stroke="#056205" stroke-width="0.5"/>
<path d="M906.7 426.3 L921.8 413.5 L921.8 430.6 L906.7 443.4Z" fill="#066e06" stroke="#066e06" stroke-width="0.5"/>
<path d="M928.2 419.7 L931.1 422.9 L931.1 445.5 L928.2 442.3Z" fill="#078907" stroke="#078907" stroke-width="0.5"/>
<path d="M748.5 423.9 L751.3 420.7 L751.3 443.3 L748.5 446.5Z" fill="#055b05" stroke="#055b05" stroke-width="0.5"/>
<path d="M754.3 417.5 L770.7 429.5 L770.7 446.6 L754.3 434.6Z" fill="#089b08" stroke="#089b08" stroke-width="0.5"/>
<path d="M931.1 422.9 L933.6 426.3 L933.6 448.9 L931.1 445.5Z" fill="#078407" stroke="#078407" stroke-width="0.5"/>
<path d="M746 427.3 L748.5 423.9 L748.5 446.5 L746 449.9Z" fill="#045504" stroke="#045504" stroke-width="0.5"/>
<path d="M933.6 426.3 L936 429.7 L936 452.3 L933.6 448.9Z" fill="#067e06" stroke="#067e06" stroke-width="0.5"/>
<path d="M743.8 430.8 L746 427.3 L746 449.9 L743.8 453.4Z" fill="#044e04" stroke="#044e04" stroke-width="0.5"/>
<path d="M936 429.7 L938 433.2 L938 455.8 L936 452.3Z" fill="#067806" stroke="#067806" stroke-width="0.5"/>
<path d="M741.9 434.3 L743.8 430.8 L743.8 453.4 L741.9 456.9Z" fill="#034703" stroke="#034703" stroke-width="0.5"/>
<path d="M938 433.2 L939.7 436.8 L939.7 459.4 L938 455.8Z" fill="#067206" stroke="#067206" stroke-width="0.5"/>
<path d="M740.2 437.9 L741.9 434.3 L741.9 456.9 L740.2 460.5Z" fill="#034003" stroke="#034003" stroke-width="0.5"/>
<path d="M939.7 436.8 L941.2 440.4 L941.2 463.1 L939.7 459.4Z" fill="#056c05" stroke="#056c05" stroke-width="0.5"/>
<path d="M738.8 441.6 L740.2 437.9 L740.2 460.5 L738.8 464.2Z" fill="#033a03" stroke="#033a03" stroke-width="0.5"/>
<path d="M941.2 440.4 L942.4 444.1 L942.4 466.8 L941.2 463.1Z" fill="#056605" stroke="#056605" stroke-width="0.5"/>
<path d="M839.5 443.3 L840.6 443.3 L840.6 454.2 L839.5 454.2Z" fill="#09b109" stroke="#09b109" stroke-width="0.5"/>
<path d="M840.6 443.3 L841.6 443.3 L841.6 454.3 L840.6 454.2Z" fill="#09b209" stroke="#09b209" stroke-width="0.5"/>
<path d="M838.4 443.4 L839.5 443.3 L839.5 454.2 L838.4 454.3Z" fill="#09b009" stroke="#09b009" stroke-width="0.5"/>
<path d="M841.6 443.3 L842.7 443.4 L842.7 454.3 L841.6 454.3Z" fill="#09b309" stroke="#09b309" stroke-width="0.5"/>
<path d="M837.3 443.5 L838.4 443.4 L838.4 454.3 L837.3 454.4Z" fill="#09ae09" stroke="#09ae09" stroke-width="0.5"/>
<path d="M737.7 445.3 L738.8 441.6 L738.8 464.2 L737.7 467.9Z" fill="#023302" stroke="#023302" stroke-width="0.5"/>
<path d="M842.7 443.4 L843.8 443.5 L843.8 454.5 L842.7 454.3Z" fill="#09b409" stroke="#09b409" stroke-width="0.5"/>
<path d="M836.3 443.6 L837.3 443.5 L837.3 454.4 L836.3 454.5Z" fill="#09ac09" stroke="#09ac09" stroke-width="0.5"/>
<path d="M843.8 443.5 L844.8 443.7 L844.8 454.6 L843.8 454.5Z" fill="#09b409" stroke="#09b409" stroke-width="0.5"/>
<path d="M835.2 443.7 L836.3 443.6 L836.3 454.5 L835.2 454.7Z" fill="#09a909" stroke="#09a909" stroke-width="0.5"/>
<path d="M844.8 443.7 L845.9 443.9 L845.9 454.8 L844.8 454.6Z" fill="#09b409" stroke="#09b409" stroke-width="0.5"/>
<path d="M834.2 443.9 L835.2 443.7 L835.2 454.7 L834.2 454.9Z" fill="#09a609" stroke="#09a609" stroke-width="0.5"/>
<path d="M845.9 443.9 L846.9 444.1 L846.9 455 L845.9 454.8Z" fill="#09b309" stroke="#09b309" stroke-width="0.5"/>
<path d="M833.2 444.2 L834.2 443.9 L834.2 454.9 L833.2 455.1Z" fill="#08a308" stroke="#08a308" stroke-width="0.5"/>
<path d="M846.9 444.1 L847.9 444.3 L847.9 455.3 L846.9 455Z" fill="#09b209" stroke="#09b209" stroke-width="0.5"/>
<path d="M832.2 444.4 L833.2 444.2 L833.2 455.1 L832.2 455.4Z" fill="#089f08" stroke="#089f08" stroke-width="0.5"/>
<path d="M847.9 444.3 L848.9 444.6 L848.9 455.6 L847.9 455.3Z" fill="#09b109" stroke="#09b109" stroke-width="0.5"/>
<path d="M831.2 444.7 L832.2 444.4 L832.2 455.4 L831.2 455.7Z" fill="#089c08" stroke="#089c08" stroke-width="0.5"/>
<path d="M848.9 444.6 L849.9 445 L849.9 455.9 L848.9 455.6Z" fill="#09af09" stroke="#09af09" stroke-width="0.5"/>
<path d="M830.2 445.1 L831.2 444.7 L831.2 455.7 L830.2 456Z" fill="#089708" stroke="#089708" stroke-width="0.5"/>
<path d="M849.9 445 L850.8 445.3 L850.8 456.2 L849.9 455.9Z" fill="#09ad09" stroke="#09ad09" stroke-width="0.5"/>
<path d="M829.3 445.4 L830.2 445.1 L830.2 456 L829.3 456.4Z" fill="#089308" stroke="#089308" stroke-width="0.5"/>
<path d="M850.8 445.3 L851.7 445.7 L851.7 456.6 L850.8 456.2Z" fill="#09ab09" stroke="#09ab09" stroke-width="0.5"/>
<path d="M828.4 445.8 L829.3 445.4 L829.3 456.4 L828.4 456.8Z" fill="#078e07" stroke="#078e07" stroke-width="0.5"/>
<path d="M851.7 445.7 L852.6 446.1 L852.6 457.1 L851.7 456.6Z" fill="#09a809" stroke="#09a809" stroke-width="0.5"/>
<path d="M827.5 446.3 L828.4 445.8 L828.4 456.8 L827.5 457.2Z" fill="#078a07" stroke="#078a07" stroke-width="0.5"/>
<path d="M852.6 446.1 L853.4 446.6 L853.4 457.5 L852.6 457.1Z" fill="#09a609" stroke="#09a609" stroke-width="0.5"/>
<path d="M826.7 446.7 L827.5 446.3 L827.5 457.2 L826.7 457.7Z" fill="#078407" stroke="#078407" stroke-width="0.5"/>
<path d="M853.4 446.6 L854.2 447.1 L854.2 458 L853.4 457.5Z" fill="#08a208" stroke="#08a208" stroke-width="0.5"/>
<path d="M825.9 447.2 L826.7 446.7 L826.7 457.7 L825.9 458.2Z" fill="#077f07" stroke="#077f07" stroke-width="0.5"/>
<path d="M736.9 449 L737.7 445.3 L737.7 467.9 L736.9 471.6Z" fill="#023302" stroke="#023302" stroke-width="0.5"/>
<path d="M854.2 447.1 L855 447.6 L855 458.5 L854.2 458Z" fill="#089f08" stroke="#089f08" stroke-width="0.5"/>
<path d="M825.2 447.8 L825.9 447.2 L825.9 458.2 L825.2 458.7Z" fill="#067906" stroke="#067906" stroke-width="0.5"/>
<path d="M855 447.6 L855.7 448.1 L855.7 459.1 L855 458.5Z" fill="#089b08" stroke="#089b08" stroke-width="0.5"/>
<path d="M824.4 448.3 L825.2 447.8 L825.2 458.7 L824.4 459.2Z" fill="#067406" stroke="#067406" stroke-width="0.5"/>
<path d="M855.7 448.1 L856.4 448.7 L856.4 459.6 L855.7 459.1Z" fill="#089708" stroke="#089708" stroke-width="0.5"/>
<path d="M823.8 448.9 L824.4 448.3 L824.4 459.2 L823.8 459.8Z" fill="#066e06" stroke="#066e06" stroke-width="0.5"/>
<path d="M856.4 448.7 L857 449.3 L857 460.2 L856.4 459.6Z" fill="#089208" stroke="#089208" stroke-width="0.5"/>
<path d="M823.2 449.5 L823.8 448.9 L823.8 459.8 L823.2 460.4Z" fill="#056805" stroke="#056805" stroke-width="0.5"/>
<path d="M857 449.3 L857.6 449.9 L857.6 460.8 L857 460.2Z" fill="#078e07" stroke="#078e07" stroke-width="0.5"/>
<path d="M822.6 450.1 L823.2 449.5 L823.2 460.4 L822.6 461Z" fill="#056105" stroke="#056105" stroke-width="0.5"/>
<path d="M857.6 449.9 L858.2 450.5 L858.2 461.4 L857.6 460.8Z" fill="#078907" stroke="#078907" stroke-width="0.5"/>
<path d="M822 450.7 L822.6 450.1 L822.6 461 L822 461.7Z" fill="#055b05" stroke="#055b05" stroke-width="0.5"/>
<path d="M858.2 450.5 L858.7 451.2 L858.7 462.1 L858.2 461.4Z" fill="#078307" stroke="#078307" stroke-width="0.5"/>
<path d="M821.6 451.4 L822 450.7 L822 461.7 L821.6 462.3Z" fill="#045504" stroke="#045504" stroke-width="0.5"/>
<path d="M858.7 451.2 L859.1 451.8 L859.1 462.8 L858.7 462.1Z" fill="#067e06" stroke="#067e06" stroke-width="0.5"/>
<path d="M821.1 452.1 L821.6 451.4 L821.6 462.3 L821.1 463Z" fill="#044e04" stroke="#044e04" stroke-width="0.5"/>
<path d="M859.1 451.8 L859.5 452.5 L859.5 463.4 L859.1 462.8Z" fill="#067806" stroke="#067806" stroke-width="0.5"/>
<path d="M820.8 452.7 L821.1 452.1 L821.1 463 L820.8 463.7Z" fill="#034703" stroke="#034703" stroke-width="0.5"/>
<path d="M859.5 452.5 L859.9 453.2 L859.9 464.1 L859.5 463.4Z" fill="#067306" stroke="#067306" stroke-width="0.5"/>
<path d="M820.4 453.4 L820.8 452.7 L820.8 463.7 L820.4 464.4Z" fill="#034103" stroke="#034103" stroke-width="0.5"/>
<path d="M859.9 453.2 L860.2 453.9 L860.2 464.8 L859.9 464.1Z" fill="#066d06" stroke="#066d06" stroke-width="0.5"/>
<path d="M820.2 454.2 L820.4 453.4 L820.4 464.4 L820.2 465.1Z" fill="#033a03" stroke="#033a03" stroke-width="0.5"/>
<path d="M872.3 454.1 L873.4 454.2 L873.4 465.1 L872.3 465Z" fill="#09b409" stroke="#09b409" stroke-width="0.5"/>
<path d="M871.2 454.2 L872.3 454.1 L872.3 465 L871.2 465.1Z" fill="#09aa09" stroke="#09aa09" stroke-width="0.5"/>
<path d="M860.2 453.9 L860.4 454.6 L860.4 465.6 L860.2 464.8Z" fill="#056705" stroke="#056705" stroke-width="0.5"/>
<path d="M873.4 454.2 L874.5 454.5 L874.5 465.4 L873.4 465.1Z" fill="#09b009" stroke="#09b009" stroke-width="0.5"/>
<path d="M870.2 454.6 L871.2 454.2 L871.2 465.1 L870.2 465.5Z" fill="#089508" stroke="#089508" stroke-width="0.5"/>
<path d="M819.9 454.9 L820.2 454.2 L820.2 465.1 L819.9 465.8Z" fill="#023302" stroke="#023302" stroke-width="0.5"/>
<path d="M874.5 454.5 L875.3 455 L875.3 465.9 L874.5 465.4Z" fill="#08a108" stroke="#08a108" stroke-width="0.5"/>
<path d="M869.4 455.2 L870.2 454.6 L870.2 465.5 L869.4 466.1Z" fill="#067706" stroke="#067706" stroke-width="0.5"/>
<path d="M860.4 454.6 L860.6 455.4 L860.6 466.3 L860.4 465.6Z" fill="#056005" stroke="#056005" stroke-width="0.5"/>
<path d="M819.8 455.6 L819.9 454.9 L819.9 465.8 L819.8 466.5Z" fill="#023302" stroke="#023302" stroke-width="0.5"/>
<path d="M875.3 455 L875.8 455.7 L875.8 466.6 L875.3 465.9Z" fill="#078607" stroke="#078607" stroke-width="0.5"/>
<path d="M868.9 455.9 L869.4 455.2 L869.4 466.1 L868.9 466.8Z" fill="#045104" stroke="#045104" stroke-width="0.5"/>
<path d="M807.8 455.6 L809 455.7 L809 466.6 L807.8 466.5Z" fill="#09b409" stroke="#09b409" stroke-width="0.5"/>
<path d="M806.7 455.8 L807.8 455.6 L807.8 466.5 L806.7 466.7Z" fill="#09aa09" stroke="#09aa09" stroke-width="0.5"/>
<path d="M860.6 455.4 L860.7 456.1 L860.7 467 L860.6 466.3Z" fill="#045a04" stroke="#045a04" stroke-width="0.5"/>
<path d="M809 455.7 L810 456 L810 466.9 L809 466.6Z" fill="#09b009" stroke="#09b009" stroke-width="0.5"/>
<path d="M805.7 456.1 L806.7 455.8 L806.7 466.7 L805.7 467Z" fill="#089508" stroke="#089508" stroke-width="0.5"/>
<path d="M819.7 456.3 L819.8 455.6 L819.8 466.5 L819.7 467.2Z" fill="#023302" stroke="#023302" stroke-width="0.5"/>
<path d="M875.8 455.7 L876.1 456.4 L876.1 467.4 L875.8 466.6Z" fill="#056305" stroke="#056305" stroke-width="0.5"/>
<path d="M868.8 456.6 L868.9 455.9 L868.9 466.8 L868.8 467.5Z" fill="#023302" stroke="#023302" stroke-width="0.5"/>
<path d="M810 456 L810.8 456.5 L810.8 467.5 L810 466.9Z" fill="#08a108" stroke="#08a108" stroke-width="0.5"/>
<path d="M805 456.7 L805.7 456.1 L805.7 467 L805 467.6Z" fill="#067706" stroke="#067706" stroke-width="0.5"/>
<path d="M860.7 456.1 L860.8 456.8 L860.8 467.7 L860.7 467Z" fill="#045304" stroke="#045304" stroke-width="0.5"/>
<path d="M819.6 457.1 L819.7 456.3 L819.7 467.2 L819.6 468Z" fill="#023302" stroke="#023302" stroke-width="0.5"/>
<path d="M810.8 456.5 L811.4 457.2 L811.4 468.1 L810.8 467.5Z" fill="#078607" stroke="#078607" stroke-width="0.5"/>
<path d="M804.5 457.4 L805 456.7 L805 467.6 L804.5 468.3Z" fill="#045104" stroke="#045104" stroke-width="0.5"/>
<path d="M811.4 457.2 L811.6 458 L811.6 468.9 L811.4 468.1Z" fill="#056305" stroke="#056305" stroke-width="0.5"/>
<path d="M804.3 458.2 L804.5 457.4 L804.5 468.3 L804.3 469.1Z" fill="#023302" stroke="#023302" stroke-width="0.5"/>
<path d="M944 461.3 L944.2 457 L944.2 474.1 L944 478.4Z" fill="#023302" stroke="#023302" stroke-width="0.5"/>
<path d="M736.2 457.6 L736.4 461.9 L736.4 479 L736.2 474.7Z" fill="#045004" stroke="#045004" stroke-width="0.5"/>
<path d="M943.5 465.6 L944 461.3 L944 478.4 L943.5 482.7Z" fill="#023302" stroke="#023302" stroke-width="0.5"/>
<path d="M736.4 461.9 L737 466.2 L737 483.3 L736.4 479Z" fill="#045804" stroke="#045804" stroke-width="0.5"/>
<path d="M919.5 467.3 L943.5 465.6 L943.5 482.7 L919.5 484.5Z" fill="#09ae09" stroke="#09ae09" stroke-width="0.5"/>
<path d="M737 466.2 L738 470.5 L738 487.6 L737 483.3Z" fill="#055f05" stroke="#055f05" stroke-width="0.5"/>
<path d="M918.5 470.4 L919.5 467.3 L919.5 484.5 L918.5 487.6Z" fill="#023502" stroke="#023502" stroke-width="0.5"/>
<path d="M738 470.5 L762.2 471.1 L762.2 488.2 L738 487.6Z" fill="#09b209" stroke="#09b209" stroke-width="0.5"/>
<path d="M917.2 473.5 L918.5 470.4 L918.5 487.6 L917.2 490.6Z" fill="#033c03" stroke="#033c03" stroke-width="0.5"/>
<path d="M762.2 471.1 L763.5 474.1 L763.5 491.2 L762.2 488.2Z" fill="#066e06" stroke="#066e06" stroke-width="0.5"/>
<path d="M915.7 476.5 L917.2 473.5 L917.2 490.6 L915.7 493.6Z" fill="#034403" stroke="#034403" stroke-width="0.5"/>
<path d="M763.5 474.1 L765 477.1 L765 494.2 L763.5 491.2Z" fill="#067506" stroke="#067506" stroke-width="0.5"/>
<path d="M850.2 469.5 L861.7 483.7 L861.7 494.6 L850.2 480.5Z" fill="#078607" stroke="#078607" stroke-width="0.5"/>
<path d="M821.4 484.7 L831.5 470 L831.5 480.9 L821.4 495.6Z" fill="#045104" stroke="#045104" stroke-width="0.5"/>
<path d="M914 479.4 L915.7 476.5 L915.7 493.6 L914 496.6Z" fill="#044b04" stroke="#044b04" stroke-width="0.5"/>
<path d="M765 477.1 L766.8 480 L766.8 497.2 L765 494.2Z" fill="#067b06" stroke="#067b06" stroke-width="0.5"/>
<path d="M912 482.3 L914 479.4 L914 496.6 L912 499.4Z" fill="#045204" stroke="#045204" stroke-width="0.5"/>
<path d="M766.8 480 L768.9 482.9 L768.9 500 L766.8 497.2Z" fill="#078107" stroke="#078107" stroke-width="0.5"/>
<path d="M909.7 485.1 L912 482.3 L912 499.4 L909.7 502.2Z" fill="#045a04" stroke="#045a04" stroke-width="0.5"/>
<path d="M768.9 482.9 L771.2 485.6 L771.2 502.8 L768.9 500Z" fill="#078707" stroke="#078707" stroke-width="0.5"/>
<path d="M771.2 485.6 L773.7 488.3 L773.7 505.4 L771.2 502.8Z" fill="#078c07" stroke="#078c07" stroke-width="0.5"/>
<path d="M861.7 483.7 L879.3 505.3 L879.3 522.4 L861.7 500.8Z" fill="#078607" stroke="#078607" stroke-width="0.5"/>
<path d="M806.1 507 L821.4 484.7 L821.4 501.8 L806.1 524.1Z" fill="#045104" stroke="#045104" stroke-width="0.5"/>
<path d="M922.4 500.6 L926.1 497.1 L926.1 514.2 L922.4 517.7Z" fill="#056905" stroke="#056905" stroke-width="0.5"/>
<path d="M918.4 503.9 L922.4 500.6 L922.4 517.7 L918.4 521.1Z" fill="#067006" stroke="#067006" stroke-width="0.5"/>
<path d="M758.6 501.1 L762.6 504.4 L762.6 521.5 L758.6 518.2Z" fill="#089708" stroke="#089708" stroke-width="0.5"/>
<path d="M879.3 505.3 L885.8 502.5 L885.8 519.6 L879.3 522.4Z" fill="#089108" stroke="#089108" stroke-width="0.5"/>
<path d="M914.1 507.1 L918.4 503.9 L918.4 521.1 L914.1 524.2Z" fill="#067706" stroke="#067706" stroke-width="0.5"/>
<path d="M799.3 504.6 L806.1 507 L806.1 524.1 L799.3 521.7Z" fill="#09af09" stroke="#09af09" stroke-width="0.5"/>
<path d="M762.6 504.4 L767 507.5 L767 524.6 L762.6 521.5Z" fill="#089c08" stroke="#089c08" stroke-width="0.5"/>
<path d="M885.8 502.5 L904.6 512.8 L904.6 529.9 L885.8 519.6Z" fill="#09a509" stroke="#09a509" stroke-width="0.5"/>
<path d="M909.5 510 L914.1 507.1 L914.1 524.2 L909.5 527.2Z" fill="#067d06" stroke="#067d06" stroke-width="0.5"/>
<path d="M767 507.5 L771.6 510.5 L771.6 527.6 L767 524.6Z" fill="#08a108" stroke="#08a108" stroke-width="0.5"/>
<path d="M781.6 515.7 L799.3 504.6 L799.3 521.7 L781.6 532.9Z" fill="#067e06" stroke="#067e06" stroke-width="0.5"/>
<path d="M904.6 512.8 L909.5 510 L909.5 527.2 L904.6 529.9Z" fill="#078307" stroke="#078307" stroke-width="0.5"/>
<path d="M771.6 510.5 L776.5 513.2 L776.5 530.3 L771.6 527.6Z" fill="#09a409" stroke="#09a409" stroke-width="0.5"/>
<path d="M776.5 513.2 L781.6 515.7 L781.6 532.9 L776.5 530.3Z" fill="#09a809" stroke="#09a809" stroke-width="0.5"/>
<path d="M852.4 387.1 L857.9 387.6 M852.4 409.7 L857.9 410.2M857.9 387.6 L863.3 388.4 M857.9 410.2 L863.3 411M815.4 388.6 L820.8 387.8 M815.4 411.2 L820.8 410.4M863.3 388.4 L868.7 389.3 M863.3 411 L868.7 411.9M810.1 389.6 L815.4 388.6 M810.1 412.2 L815.4 411.2M868.7 389.3 L874 390.4 M868.7 411.9 L874 413M804.8 390.8 L810.1 389.6 M804.8 413.4 L810.1 412.2M874 390.4 L879.2 391.7 M874 413 L879.2 414.4M799.6 392.2 L804.8 390.8 M799.6 414.8 L804.8 413.4M879.2 391.7 L884.3 393.3 M879.2 414.4 L884.3 415.9M794.6 393.8 L799.6 392.2 M794.6 416.4 L799.6 414.8M884.3 393.3 L889.3 394.9 M884.3 415.9 L889.3 417.6M789.6 395.5 L794.6 393.8 M789.6 418.1 L794.6 416.4M889.3 394.9 L894.1 396.8 M889.3 417.6 L894.1 419.4M784.9 397.4 L789.6 395.5 M784.9 420 L789.6 418.1M894.1 396.8 L898.8 398.9 M894.1 419.4 L898.8 421.5M780.2 399.5 L784.9 397.4 M780.2 422.1 L784.9 420M775.8 401.8 L780.2 399.5 M775.8 424.4 L780.2 422.1M921.8 413.5 L925.2 416.5 M921.8 436.1 L925.2 439.1M925.2 416.5 L928.2 419.7 M925.2 439.1 L928.2 442.3M751.3 420.7 L754.3 417.5 M751.3 443.3 L754.3 440.1M906.7 426.3 L921.8 413.5 M906.7 443.4 L921.8 430.6M928.2 419.7 L931.1 422.9 M928.2 442.3 L931.1 445.5M748.5 423.9 L751.3 420.7 M748.5 446.5 L751.3 443.3M754.3 417.5 L770.7 429.5 M754.3 434.6 L770.7 446.6M931.1 422.9 L933.6 426.3 M931.1 445.5 L933.6 448.9M746 427.3 L748.5 423.9 M746 449.9 L748.5 446.5M933.6 426.3 L936 429.7 M933.6 448.9 L936 452.3M743.8 430.8 L746 427.3 M743.8 453.4 L746 449.9M936 429.7 L938 433.2 M936 452.3 L938 455.8M741.9 434.3 L743.8 430.8 M741.9 456.9 L743.8 453.4M938 433.2 L939.7 436.8 M938 455.8 L939.7 459.4M740.2 437.9 L741.9 434.3 M740.2 460.5 L741.9 456.9M939.7 436.8 L941.2 440.4 M939.7 459.4 L941.2 463.1M738.8 441.6 L740.2 437.9 M738.8 464.2 L740.2 460.5M941.2 440.4 L942.4 444.1 M941.2 463.1 L942.4 466.8M839.5 443.3 L840.6 443.3 M839.5 454.2 L840.6 454.2M840.6 443.3 L841.6 443.3 M840.6 454.2 L841.6 454.3M838.4 443.4 L839.5 443.3 M838.4 454.3 L839.5 454.2M841.6 443.3 L842.7 443.4 M841.6 454.3 L842.7 454.3M837.3 443.5 L838.4 443.4 M837.3 454.4 L838.4 454.3M737.7 445.3 L738.8 441.6 M737.7 467.9 L738.8 464.2M842.7 443.4 L843.8 443.5 M842.7 454.3 L843.8 454.5M836.3 443.6 L837.3 443.5 M836.3 454.5 L837.3 454.4M843.8 443.5 L844.8 443.7 M843.8 454.5 L844.8 454.6M835.2 443.7 L836.3 443.6 M835.2 454.7 L836.3 454.5M844.8 443.7 L845.9 443.9 M844.8 454.6 L845.9 454.8M834.2 443.9 L835.2 443.7 M834.2 454.9 L835.2 454.7M845.9 443.9 L846.9 444.1 M845.9 454.8 L846.9 455M833.2 444.2 L834.2 443.9 M833.2 455.1 L834.2 454.9M846.9 444.1 L847.9 444.3 M846.9 455 L847.9 455.3M832.2 444.4 L833.2 444.2 M832.2 455.4 L833.2 455.1M847.9 444.3 L848.9 444.6 M847.9 455.3 L848.9 455.6M831.2 444.7 L832.2 444.4 M831.2 455.7 L832.2 455.4M848.9 444.6 L849.9 445 M848.9 455.6 L849.9 455.9M830.2 445.1 L831.2 444.7 M830.2 456 L831.2 455.7M849.9 445 L850.8 445.3 M849.9 455.9 L850.8 456.2M829.3 445.4 L830.2 445.1 M829.3 456.4 L830.2 456M850.8 445.3 L851.7 445.7 M850.8 456.2 L851.7 456.6M828.4 445.8 L829.3 445.4 M828.4 456.8 L829.3 456.4M851.7 445.7 L852.6 446.1 M851.7 456.6 L852.6 457.1M827.5 446.3 L828.4 445.8 M827.5 457.2 L828.4 456.8M852.6 446.1 L853.4 446.6 M852.6 457.1 L853.4 457.5M826.7 446.7 L827.5 446.3 M826.7 457.7 L827.5 457.2M853.4 446.6 L854.2 447.1 M853.4 457.5 L854.2 458M825.9 447.2 L826.7 446.7 M825.9 458.2 L826.7 457.7M736.9 449 L737.7 445.3 M736.9 471.6 L737.7 467.9M854.2 447.1 L855 447.6 M854.2 458 L855 458.5M825.2 447.8 L825.9 447.2 M825.2 458.7 L825.9 458.2M855 447.6 L855.7 448.1 M855 458.5 L855.7 459.1M824.4 448.3 L825.2 447.8 M824.4 459.2 L825.2 458.7M855.7 448.1 L856.4 448.7 M855.7 459.1 L856.4 459.6M823.8 448.9 L824.4 448.3 M823.8 459.8 L824.4 459.2M856.4 448.7 L857 449.3 M856.4 459.6 L857 460.2M823.2 449.5 L823.8 448.9 M823.2 460.4 L823.8 459.8M857 449.3 L857.6 449.9 M857 460.2 L857.6 460.8M822.6 450.1 L823.2 449.5 M822.6 461 L823.2 460.4M857.6 449.9 L858.2 450.5 M857.6 460.8 L858.2 461.4M822 450.7 L822.6 450.1 M822 461.7 L822.6 461M858.2 450.5 L858.7 451.2 M858.2 461.4 L858.7 462.1M821.6 451.4 L822 450.7 M821.6 462.3 L822 461.7M858.7 451.2 L859.1 451.8 M858.7 462.1 L859.1 462.8M821.1 452.1 L821.6 451.4 M821.1 463 L821.6 462.3M859.1 451.8 L859.5 452.5 M859.1 462.8 L859.5 463.4M820.8 452.7 L821.1 452.1 M820.8 463.7 L821.1 463M859.5 452.5 L859.9 453.2 M859.5 463.4 L859.9 464.1M820.4 453.4 L820.8 452.7 M820.4 464.4 L820.8 463.7M859.9 453.2 L860.2 453.9 M859.9 464.1 L860.2 464.8M820.2 454.2 L820.4 453.4 M820.2 465.1 L820.4 464.4M872.3 454.1 L873.4 454.2 M872.3 465 L873.4 465.1M871.2 454.2 L872.3 454.1 M871.2 465.1 L872.3 465M860.2 453.9 L860.4 454.6 M860.2 464.8 L860.4 465.6M873.4 454.2 L874.5 454.5 M873.4 465.1 L874.5 465.4M870.2 454.6 L871.2 454.2 M870.2 465.5 L871.2 465.1M819.9 454.9 L820.2 454.2 M819.9 465.8 L820.2 465.1M874.5 454.5 L875.3 455 M874.5 465.4 L875.3 465.9M869.4 455.2 L870.2 454.6 M869.4 466.1 L870.2 465.5M860.4 454.6 L860.6 455.4 M860.4 465.6 L860.6 466.3M819.8 455.6 L819.9 454.9 M819.8 466.5 L819.9 465.8M875.3 455 L875.8 455.7 M875.3 465.9 L875.8 466.6M868.9 455.9 L869.4 455.2 M868.9 466.8 L869.4 466.1M807.8 455.6 L809 455.7 M807.8 466.5 L809 466.6M806.7 455.8 L807.8 455.6 M806.7 466.7 L807.8 466.5M860.6 455.4 L860.7 456.1 M860.6 466.3 L860.7 467M809 455.7 L810 456 M809 466.6 L810 466.9M805.7 456.1 L806.7 455.8 M805.7 467 L806.7 466.7M819.7 456.3 L819.8 455.6 M819.7 467.2 L819.8 466.5M875.8 455.7 L876.1 456.4 M875.8 466.6 L876.1 467.4M868.8 456.6 L868.9 455.9 M868.8 467.5 L868.9 466.8M810 456 L810.8 456.5 M810 466.9 L810.8 467.5M805 456.7 L805.7 456.1 M805 467.6 L805.7 467M860.7 456.1 L860.8 456.8 M860.7 467 L860.8 467.7M819.6 457.1 L819.7 456.3 M819.6 468 L819.7 467.2M810.8 456.5 L811.4 457.2 M810.8 467.5 L811.4 468.1M804.5 457.4 L805 456.7 M804.5 468.3 L805 467.6M811.4 457.2 L811.6 458 M811.4 468.1 L811.6 468.9M804.3 458.2 L804.5 457.4 M804.3 469.1 L804.5 468.3M944 461.3 L944.2 457 M944 478.4 L944.2 474.1M736.2 457.6 L736.4 461.9 M736.2 474.7 L736.4 479M943.5 465.6 L944 461.3 M943.5 482.7 L944 478.4M736.4 461.9 L737 466.2 M736.4 479 L737 483.3M919.5 467.3 L943.5 465.6 M919.5 484.5 L943.5 482.7M737 466.2 L738 470.5 M737 483.3 L738 487.6M918.5 470.4 L919.5 467.3 M918.5 487.6 L919.5 484.5M738 470.5 L762.2 471.1 M738 487.6 L762.2 488.2M917.2 473.5 L918.5 470.4 M917.2 490.6 L918.5 487.6M762.2 471.1 L763.5 474.1 M762.2 488.2 L763.5 491.2M915.7 476.5 L917.2 473.5 M915.7 493.6 L917.2 490.6M763.5 474.1 L765 477.1 M763.5 491.2 L765 494.2M850.2 469.5 L861.7 483.7 M850.2 480.5 L861.7 494.6M821.4 484.7 L831.5 470 M821.4 495.6 L831.5 480.9M914 479.4 L915.7 476.5 M914 496.6 L915.7 493.6M765 477.1 L766.8 480 M765 494.2 L766.8 497.2M912 482.3 L914 479.4 M912 499.4 L914 496.6M766.8 480 L768.9 482.9 M766.8 497.2 L768.9 500M909.7 485.1 L912 482.3 M909.7 502.2 L912 499.4M768.9 482.9 L771.2 485.6 M768.9 500 L771.2 502.8M771.2 485.6 L773.7 488.3 M771.2 502.8 L773.7 505.4M861.7 483.7 L879.3 505.3 M861.7 500.8 L879.3 522.4M806.1 507 L821.4 484.7 M806.1 524.1 L821.4 501.8M922.4 500.6 L926.1 497.1 M922.4 517.7 L926.1 514.2M918.4 503.9 L922.4 500.6 M918.4 521.1 L922.4 517.7M758.6 501.1 L762.6 504.4 M758.6 518.2 L762.6 521.5M879.3 505.3 L885.8 502.5 M879.3 522.4 L885.8 519.6M914.1 507.1 L918.4 503.9 M914.1 524.2 L918.4 521.1M799.3 504.6 L806.1 507 M799.3 521.7 L806.1 524.1M762.6 504.4 L767 507.5 M762.6 521.5 L767 524.6M885.8 502.5 L904.6 512.8 M885.8 519.6 L904.6 529.9M909.5 510 L914.1 507.1 M909.5 527.2 L914.1 524.2M767 507.5 L771.6 510.5 M767 524.6 L771.6 527.6M781.6 515.7 L799.3 504.6 M781.6 532.9 L799.3 521.7M904.6 512.8 L909.5 510 M904.6 529.9 L909.5 527.2M771.6 510.5 L776.5 513.2 M771.6 527.6 L776.5 530.3M776.5 513.2 L781.6 515.7 M776.5 530.3 L781.6 532.9M921.8 413.5 L921.8 436.1M942.4 444.1 L942.4 466.8M852.4 387.1 L852.4 409.7M898.8 398.9 L898.8 421.5M775.8 401.8 L775.8 424.4M820.8 387.8 L820.8 410.4M736.9 449 L736.9 471.6M754.3 417.5 L754.3 440.1M861.7 483.7 L861.7 500.8M879.3 505.3 L879.3 522.4M885.8 502.5 L885.8 519.6M904.6 512.8 L904.6 529.9M926.1 497.1 L926.1 514.2M909.7 485.1 L909.7 502.2M919.5 467.3 L919.5 484.5M943.5 465.6 L943.5 482.7M906.7 426.3 L906.7 443.4M921.8 413.5 L921.8 430.6M754.3 417.5 L754.3 434.6M770.7 429.5 L770.7 446.6M738 470.5 L738 487.6M762.2 471.1 L762.2 488.2M773.7 488.3 L773.7 505.4M758.6 501.1 L758.6 518.2M781.6 515.7 L781.6 532.9M799.3 504.6 L799.3 521.7M806.1 507 L806.1 524.1M821.4 484.7 L821.4 501.8M821.4 484.7 L821.4 495.6M831.5 470 L831.5 480.9M850.2 469.5 L850.2 480.5M861.7 483.7 L861.7 494.6" fill="none" stroke="#08160a" stroke-width="1.0" stroke-linecap="round"/>
<linearGradient id="g1_0" gradientUnits="userSpaceOnUse" x1="723.4" y1="0" x2="957.1" y2="0"><stop offset="0.000" stop-color="#044c04"/><stop offset="0.083" stop-color="#078e07"/><stop offset="0.167" stop-color="#08a208"/><stop offset="0.250" stop-color="#09ad09"/><stop offset="0.333" stop-color="#09b309"/><stop offset="0.417" stop-color="#09b409"/><stop offset="0.500" stop-color="#09b109"/><stop offset="0.583" stop-color="#09ab09"/><stop offset="0.667" stop-color="#08a208"/><stop offset="0.750" stop-color="#089408"/><stop offset="0.833" stop-color="#078007"/><stop offset="0.917" stop-color="#056405"/><stop offset="1.000" stop-color="#023302"/></linearGradient>
<path d="M723.4 457.3 L723.5 461.5 L724 465.6 L724.8 469.7 L725.9 473.8 L727.3 477.9 L729.1 481.9 L731.1 485.8 L733.5 489.6 L736.1 493.4 L739 497 L742.2 500.6 L745.7 504 L749.4 507.3 L753.4 510.5 L757.6 513.5 L762 516.3 L766.7 519.1 L771.5 521.6 L776.6 523.9 L781.8 526.1 L787.2 528.1 L792.7 529.9 L798.3 531.5 L804.1 532.9 L810 534.1 L815.9 535 L821.9 535.8 L828 536.3 L834.1 536.6 L840.2 536.8 L846.3 536.6 L852.4 536.3 L858.5 535.8 L864.5 535 L870.4 534.1 L876.3 532.9 L882.1 531.5 L887.7 529.9 L893.2 528.1 L898.6 526.1 L903.8 523.9 L908.9 521.6 L913.7 519.1 L918.4 516.3 L922.8 513.5 L927 510.5 L931 507.3 L934.7 504 L938.2 500.6 L941.4 497 L944.3 493.4 L946.9 489.6 L949.3 485.8 L951.3 481.9 L953.1 477.9 L954.5 473.8 L955.6 469.7 L956.4 465.6 L956.9 461.5 L957.1 457.3 L957.1 464 L956.9 468.1 L956.4 472.3 L955.6 476.4 L954.5 480.5 L953.1 484.5 L951.3 488.5 L949.3 492.4 L946.9 496.3 L944.3 500 L941.4 503.7 L938.2 507.2 L934.7 510.7 L931 514 L927 517.1 L922.8 520.1 L918.4 523 L913.7 525.7 L908.9 528.2 L903.8 530.6 L898.6 532.8 L893.2 534.8 L887.7 536.5 L882.1 538.1 L876.3 539.5 L870.4 540.7 L864.5 541.7 L858.5 542.4 L852.4 543 L846.3 543.3 L840.2 543.4 L834.1 543.3 L828 543 L821.9 542.4 L815.9 541.7 L810 540.7 L804.1 539.5 L798.3 538.1 L792.7 536.5 L787.2 534.8 L781.8 532.8 L776.6 530.6 L771.5 528.2 L766.7 525.7 L762 523 L757.6 520.1 L753.4 517.1 L749.4 514 L745.7 510.7 L742.2 507.2 L739 503.7 L736.1 500 L733.5 496.3 L731.1 492.4 L729.1 488.5 L727.3 484.5 L725.9 480.5 L724.8 476.4 L724 472.3 L723.5 468.1 L723.4 464Z" fill="url(#g1_0)" stroke="#08160a" stroke-width="1.0" stroke-linejoin="round"/>
<linearGradient id="g1_1" gradientUnits="userSpaceOnUse" x1="723.4" y1="0" x2="957.1" y2="0"><stop offset="0.000" stop-color="#023302"/><stop offset="0.083" stop-color="#023302"/><stop offset="0.167" stop-color="#023302"/><stop offset="0.250" stop-color="#023302"/><stop offset="0.333" stop-color="#023302"/><stop offset="0.417" stop-color="#023302"/><stop offset="0.500" stop-color="#023302"/><stop offset="0.583" stop-color="#023302"/><stop offset="0.667" stop-color="#023302"/><stop offset="0.750" stop-color="#023302"/><stop offset="0.833" stop-color="#023302"/><stop offset="0.917" stop-color="#023302"/><stop offset="1.000" stop-color="#023302"/></linearGradient>
<path d="M723.4 464 L723.5 468.1 L724 472.3 L724.8 476.4 L725.9 480.5 L727.3 484.5 L729.1 488.5 L731.1 492.4 L733.5 496.3 L736.1 500 L739 503.7 L742.2 507.2 L745.7 510.7 L749.4 514 L753.4 517.1 L757.6 520.1 L762 523 L766.7 525.7 L771.5 528.2 L776.6 530.6 L781.8 532.8 L787.2 534.8 L792.7 536.5 L798.3 538.1 L804.1 539.5 L810 540.7 L815.9 541.7 L821.9 542.4 L828 543 L834.1 543.3 L840.2 543.4 L846.3 543.3 L852.4 543 L858.5 542.4 L864.5 541.7 L870.4 540.7 L876.3 539.5 L882.1 538.1 L887.7 536.5 L893.2 534.8 L898.6 532.8 L903.8 530.6 L908.9 528.2 L913.7 525.7 L918.4 523 L922.8 520.1 L927 517.1 L931 514 L934.7 510.7 L938.2 507.2 L941.4 503.7 L944.3 500 L946.9 496.3 L949.3 492.4 L951.3 488.5 L953.1 484.5 L954.5 480.5 L955.6 476.4 L956.4 472.3 L956.9 468.1 L957.1 464 L951.6 468.6 L951.4 472.6 L950.9 476.5 L950.2 480.5 L949.1 484.4 L947.8 488.2 L946.1 492 L944.2 495.7 L941.9 499.4 L939.4 503 L936.6 506.5 L933.6 509.9 L930.3 513.1 L926.7 516.3 L923 519.3 L918.9 522.2 L914.7 524.9 L910.3 527.5 L905.7 529.9 L900.8 532.1 L895.9 534.2 L890.8 536.1 L885.5 537.8 L880.1 539.3 L874.6 540.6 L869 541.8 L863.4 542.7 L857.6 543.4 L851.8 543.9 L846 544.2 L840.2 544.3 L834.4 544.2 L828.6 543.9 L822.8 543.4 L817 542.7 L811.4 541.8 L805.8 540.6 L800.3 539.3 L794.9 537.8 L789.6 536.1 L784.5 534.2 L779.6 532.1 L774.7 529.9 L770.1 527.5 L765.7 524.9 L761.5 522.2 L757.4 519.3 L753.7 516.3 L750.1 513.1 L746.8 509.9 L743.8 506.5 L741 503 L738.5 499.4 L736.2 495.7 L734.3 492 L732.6 488.2 L731.3 484.4 L730.2 480.5 L729.5 476.5 L729 472.6 L728.8 468.6Z" fill="url(#g1_1)" stroke="#08160a" stroke-width="1.0" stroke-linejoin="round"/>
<linearGradient id="g1_2" gradientUnits="userSpaceOnUse" x1="723.4" y1="0" x2="957.1" y2="0"><stop offset="0.000" stop-color="#09aa09"/><stop offset="0.083" stop-color="#0bd90b"/><stop offset="0.167" stop-color="#0ce70c"/><stop offset="0.250" stop-color="#0def0d"/><stop offset="0.333" stop-color="#0df30d"/><stop offset="0.417" stop-color="#0df40d"/><stop offset="0.500" stop-color="#0df20d"/><stop offset="0.583" stop-color="#0dee0d"/><stop offset="0.667" stop-color="#0ce70c"/><stop offset="0.750" stop-color="#0cdd0c"/><stop offset="0.833" stop-color="#0bcf0b"/><stop offset="0.917" stop-color="#0abb0a"/><stop offset="1.000" stop-color="#078707"/></linearGradient>
<path d="M728.8 468.6 L729 472.6 L729.5 476.5 L730.2 480.5 L731.3 484.4 L732.6 488.2 L734.3 492 L736.2 495.7 L738.5 499.4 L741 503 L743.8 506.5 L746.8 509.9 L750.1 513.1 L753.7 516.3 L757.4 519.3 L761.5 522.2 L765.7 524.9 L770.1 527.5 L774.7 529.9 L779.6 532.1 L784.5 534.2 L789.6 536.1 L794.9 537.8 L800.3 539.3 L805.8 540.6 L811.4 541.8 L817 542.7 L822.8 543.4 L828.6 543.9 L834.4 544.2 L840.2 544.3 L846 544.2 L851.8 543.9 L857.6 543.4 L863.4 542.7 L869 541.8 L874.6 540.6 L880.1 539.3 L885.5 537.8 L890.8 536.1 L895.9 534.2 L900.8 532.1 L905.7 529.9 L910.3 527.5 L914.7 524.9 L918.9 522.2 L923 519.3 L926.7 516.3 L930.3 513.1 L933.6 509.9 L936.6 506.5 L939.4 503 L941.9 499.4 L944.2 495.7 L946.1 492 L947.8 488.2 L949.1 484.4 L950.2 480.5 L950.9 476.5 L951.4 472.6 L951.6 468.6 L957.1 473.3 L956.9 477.4 L956.4 481.6 L955.6 485.7 L954.5 489.8 L953.1 493.8 L951.3 497.8 L949.3 501.7 L946.9 505.6 L944.3 509.3 L941.4 513 L938.2 516.5 L934.7 520 L931 523.3 L927 526.4 L922.8 529.4 L918.4 532.3 L913.7 535 L908.9 537.5 L903.8 539.9 L898.6 542.1 L893.2 544 L887.7 545.8 L882.1 547.4 L876.3 548.8 L870.4 550 L864.5 551 L858.5 551.7 L852.4 552.3 L846.3 552.6 L840.2 552.7 L834.1 552.6 L828 552.3 L821.9 551.7 L815.9 551 L810 550 L804.1 548.8 L798.3 547.4 L792.7 545.8 L787.2 544 L781.8 542.1 L776.6 539.9 L771.5 537.5 L766.7 535 L762 532.3 L757.6 529.4 L753.4 526.4 L749.4 523.3 L745.7 520 L742.2 516.5 L739 513 L736.1 509.3 L733.5 505.6 L731.1 501.7 L729.1 497.8 L727.3 493.8 L725.9 489.8 L724.8 485.7 L724 481.6 L723.5 477.4 L723.4 473.3Z" fill="url(#g1_2)" stroke="#08160a" stroke-width="1.0" stroke-linejoin="round"/>
<linearGradient id="g1_3" gradientUnits="userSpaceOnUse" x1="723.4" y1="0" x2="957.1" y2="0"><stop offset="0.000" stop-color="#044c04"/><stop offset="0.083" stop-color="#078e07"/><stop offset="0.167" stop-color="#08a208"/><stop offset="0.250" stop-color="#09ad09"/><stop offset="0.333" stop-color="#09b309"/><stop offset="0.417" stop-color="#09b409"/><stop offset="0.500" stop-color="#09b109"/><stop offset="0.583" stop-color="#09ab09"/><stop offset="0.667" stop-color="#08a208"/><stop offset="0.750" stop-color="#089408"/><stop offset="0.833" stop-color="#078007"/><stop offset="0.917" stop-color="#056405"/><stop offset="1.000" stop-color="#023302"/></linearGradient>
<path d="M723.4 473.3 L723.5 477.4 L724 481.6 L724.8 485.7 L725.9 489.8 L727.3 493.8 L729.1 497.8 L731.1 501.7 L733.5 505.6 L736.1 509.3 L739 513 L742.2 516.5 L745.7 520 L749.4 523.3 L753.4 526.4 L757.6 529.4 L762 532.3 L766.7 535 L771.5 537.5 L776.6 539.9 L781.8 542.1 L787.2 544 L792.7 545.8 L798.3 547.4 L804.1 548.8 L810 550 L815.9 551 L821.9 551.7 L828 552.3 L834.1 552.6 L840.2 552.7 L846.3 552.6 L852.4 552.3 L858.5 551.7 L864.5 551 L870.4 550 L876.3 548.8 L882.1 547.4 L887.7 545.8 L893.2 544 L898.6 542.1 L903.8 539.9 L908.9 537.5 L913.7 535 L918.4 532.3 L922.8 529.4 L927 526.4 L931 523.3 L934.7 520 L938.2 516.5 L941.4 513 L944.3 509.3 L946.9 505.6 L949.3 501.7 L951.3 497.8 L953.1 493.8 L954.5 489.8 L955.6 485.7 L956.4 481.6 L956.9 477.4 L957.1 473.3 L957.1 479.9 L956.9 484.1 L956.4 488.2 L955.6 492.3 L954.5 496.4 L953.1 500.5 L951.3 504.5 L949.3 508.4 L946.9 512.2 L944.3 516 L941.4 519.6 L938.2 523.2 L934.7 526.6 L931 529.9 L927 533.1 L922.8 536.1 L918.4 539 L913.7 541.7 L908.9 544.2 L903.8 546.5 L898.6 548.7 L893.2 550.7 L887.7 552.5 L882.1 554.1 L876.3 555.5 L870.4 556.7 L864.5 557.6 L858.5 558.4 L852.4 558.9 L846.3 559.3 L840.2 559.4 L834.1 559.3 L828 558.9 L821.9 558.4 L815.9 557.6 L810 556.7 L804.1 555.5 L798.3 554.1 L792.7 552.5 L787.2 550.7 L781.8 548.7 L776.6 546.5 L771.5 544.2 L766.7 541.7 L762 539 L757.6 536.1 L753.4 533.1 L749.4 529.9 L745.7 526.6 L742.2 523.2 L739 519.6 L736.1 516 L733.5 512.2 L731.1 508.4 L729.1 504.5 L727.3 500.5 L725.9 496.4 L724.8 492.3 L724 488.2 L723.5 484.1 L723.4 479.9Z" fill="url(#g1_3)" stroke="#08160a" stroke-width="1.0" stroke-linejoin="round"/>
<path d="M957 454.5 L956.8 451.8 L956.4 449 L955.9 446.2 L955.3 443.5 L954.5 440.8 L953.6 438.1 L952.5 435.4 L951.3 432.7 L950 430.1 L948.5 427.5 L946.9 425 L945.2 422.5 L943.4 420 L941.4 417.6 L939.3 415.2 L937.1 412.9 L934.7 410.6 L932.3 408.4 L929.7 406.2 L927 404.1 L924.3 402.1 L921.4 400.1 L918.4 398.3 L915.3 396.4 L912.1 394.7 L908.9 393 L905.5 391.4 L902.1 389.9 L898.6 388.5 L895.1 387.1 L891.4 385.9 L887.7 384.7 L884 383.6 L880.2 382.6 L876.3 381.7 L872.4 380.9 L868.5 380.2 L864.5 379.6 L860.5 379 L856.5 378.6 L852.4 378.3 L848.4 378 L844.3 377.9 L840.2 377.8 L836.1 377.9 L832 378 L828 378.3 L823.9 378.6 L819.9 379 L815.9 379.6 L811.9 380.2 L808 380.9 L804.1 381.7 L800.2 382.6 L796.4 383.6 L792.7 384.7 L789 385.9 L785.3 387.1 L781.8 388.5 L778.3 389.9 L774.9 391.4 L771.5 393 L768.3 394.7 L765.1 396.4 L762 398.3 L759 400.1 L756.1 402.1 L753.4 404.1 L750.7 406.2 L748.1 408.4 L745.7 410.6 L743.3 412.9 L741.1 415.2 L739 417.6 L737 420 L735.2 422.5 L733.5 425 L731.9 427.5 L730.4 430.1 L729.1 432.7 L727.9 435.4 L726.8 438.1 L725.9 440.8 L725.1 443.5 L724.5 446.2 L724 449 L723.6 451.8 L723.4 454.5 L723.4 457.3 L723.4 460.1 L723.6 462.8 L724 465.6 L724.5 468.4 L725.1 471.1 L725.9 473.8 L726.8 476.5 L727.9 479.2 L729.1 481.9 L730.4 484.5 L731.9 487.1 L733.5 489.6 L735.2 492.1 L737 494.6 L739 497 L741.1 499.4 L743.3 501.7 L745.7 504 L748.1 506.2 L750.7 508.4 L753.4 510.5 L756.1 512.5 L759 514.5 L762 516.3 L765.1 518.2 L768.3 519.9 L771.5 521.6 L774.9 523.2 L778.3 524.7 L781.8 526.1 L785.3 527.5 L789 528.7 L792.7 529.9 L796.4 531 L800.2 532 L804.1 532.9 L808 533.7 L811.9 534.4 L815.9 535 L819.9 535.6 L823.9 536 L828 536.3 L832 536.6 L836.1 536.7 L840.2 536.8 L844.3 536.7 L848.4 536.6 L852.4 536.3 L856.5 536 L860.5 535.6 L864.5 535 L868.5 534.4 L872.4 533.7 L876.3 532.9 L880.2 532 L884 531 L887.7 529.9 L891.4 528.7 L895.1 527.5 L898.6 526.1 L902.1 524.7 L905.5 523.2 L908.9 521.6 L912.1 519.9 L915.3 518.2 L918.4 516.3 L921.4 514.5 L924.3 512.5 L927 510.5 L929.7 508.4 L932.3 506.2 L934.7 504 L937.1 501.7 L939.3 499.4 L941.4 497 L943.4 494.6 L945.2 492.1 L946.9 489.6 L948.5 487.1 L950 484.5 L951.3 481.9 L952.5 479.2 L953.6 476.5 L954.5 473.8 L955.3 471.1 L955.9 468.4 L956.4 465.6 L956.8 462.8 L957 460.1 L957.1 457.3ZM909.7 485.1 L912 482.3 L914 479.4 L915.7 476.5 L917.2 473.5 L918.5 470.4 L919.5 467.3 L943.5 465.6 L942.7 469.3 L941.6 473 L940.2 476.7 L938.5 480.3 L936.6 483.8 L934.4 487.3 L931.9 490.7 L929.1 493.9 L926.1 497.1ZM918.2 443.5 L916.9 440.5 L915.4 437.5 L913.6 434.6 L911.5 431.7 L909.2 429 L906.7 426.3 L921.8 413.5 L925.2 416.5 L928.2 419.7 L931.1 422.9 L933.6 426.3 L936 429.7 L938 433.2 L939.7 436.8 L941.2 440.4 L942.4 444.1ZM881.1 410 L877 408.5 L872.8 407.1 L868.4 405.9 L864 404.9 L859.5 404.1 L855 403.4 L852.4 387.1 L857.9 387.6 L863.3 388.4 L868.7 389.3 L874 390.4 L879.2 391.7 L884.3 393.3 L889.3 394.9 L894.1 396.8 L898.8 398.9ZM819.9 404.2 L815.5 405.1 L811.1 406.2 L806.8 407.4 L802.6 408.8 L798.5 410.4 L794.6 412.1 L775.8 401.8 L780.2 399.5 L784.9 397.4 L789.6 395.5 L794.6 393.8 L799.6 392.2 L804.8 390.8 L810.1 389.6 L815.4 388.6 L820.8 387.8ZM770.7 429.5 L768.4 432.3 L766.4 435.2 L764.7 438.1 L763.2 441.1 L761.9 444.2 L760.9 447.3 L736.9 449 L737.7 445.3 L738.8 441.6 L740.2 437.9 L741.9 434.3 L743.8 430.8 L746 427.3 L748.5 423.9 L751.3 420.7 L754.3 417.5ZM762.2 471.1 L763.5 474.1 L765 477.1 L766.8 480 L768.9 482.9 L771.2 485.6 L773.7 488.3 L758.6 501.1 L755.2 498.1 L752.2 494.9 L749.3 491.7 L746.8 488.3 L744.4 484.9 L742.4 481.4 L740.7 477.8 L739.2 474.2 L738 470.5ZM904.6 512.8 L885.8 502.5 L879.3 505.3 L850.2 469.5 L851.1 469.2 L852 468.8 L852.9 468.3 L853.7 467.9 L854.5 467.4 L855.2 466.8 L856 466.3 L856.6 465.7 L857.2 465.1 L857.8 464.5 L858.4 463.9 L858.8 463.2 L859.3 462.5 L859.6 461.9 L860 461.2 L860.2 460.4 L860.5 459.7 L860.6 459 L860.7 458.3 L860.8 457.5 L860.8 456.8 L860.7 456.1 L860.6 455.4 L860.4 454.6 L860.2 453.9 L859.9 453.2 L859.5 452.5 L859.1 451.8 L858.7 451.2 L858.2 450.5 L857.6 449.9 L857 449.3 L856.4 448.7 L855.7 448.1 L855 447.6 L854.2 447.1 L853.4 446.6 L852.6 446.1 L851.7 445.7 L850.8 445.3 L849.9 445 L848.9 444.6 L847.9 444.3 L846.9 444.1 L845.9 443.9 L844.8 443.7 L843.8 443.5 L842.7 443.4 L841.6 443.3 L840.6 443.3 L839.5 443.3 L838.4 443.4 L837.3 443.5 L836.3 443.6 L835.2 443.7 L834.2 443.9 L833.2 444.2 L832.2 444.4 L831.2 444.7 L830.2 445.1 L829.3 445.4 L828.4 445.8 L827.5 446.3 L826.7 446.7 L825.9 447.2 L825.2 447.8 L824.4 448.3 L823.8 448.9 L823.2 449.5 L822.6 450.1 L822 450.7 L821.6 451.4 L821.1 452.1 L820.8 452.7 L820.4 453.4 L820.2 454.2 L819.9 454.9 L819.8 455.6 L819.7 456.3 L819.6 457.1 L819.6 457.8 L819.7 458.5 L819.8 459.2 L820 460 L820.2 460.7 L820.5 461.4 L820.9 462.1 L821.3 462.8 L821.7 463.4 L822.2 464.1 L822.8 464.7 L823.4 465.3 L824 465.9 L824.7 466.5 L825.4 467 L826.2 467.5 L827 468 L827.8 468.5 L828.7 468.9 L829.6 469.3 L830.5 469.6 L831.5 470 L806.1 507 L799.3 504.6 L781.6 515.7 L786.2 517.8 L791 519.6 L795.9 521.3 L800.9 522.8 L806.1 524.1 L811.3 525.2 L816.6 526.2 L822 526.9 L827.4 527.5 L832.9 527.8 L838.3 528 L843.8 528 L849.3 527.7 L854.8 527.3 L860.2 526.7 L865.5 525.9 L870.8 524.9 L876 523.7 L881.1 522.3 L886.1 520.8 L890.9 519 L895.7 517.1 L900.2 515 L904.6 512.8ZM876.1 456.4 L875.8 455.7 L875.3 455 L874.5 454.5 L873.4 454.2 L872.3 454.1 L871.2 454.2 L870.2 454.6 L869.4 455.2 L868.9 455.9 L868.8 456.6 L869 457.4 L869.6 458.1 L870.4 458.6 L871.4 458.9 L872.6 459 L873.7 458.8 L874.7 458.5 L875.4 457.9 L875.9 457.2ZM811.6 458 L811.4 457.2 L810.8 456.5 L810 456 L809 455.7 L807.8 455.6 L806.7 455.8 L805.7 456.1 L805 456.7 L804.5 457.4 L804.3 458.2 L804.6 458.9 L805.1 459.6 L805.9 460.1 L807 460.4 L808.1 460.5 L809.2 460.4 L810.2 460 L811 459.4 L811.5 458.7Z" fill="#0ac50a" fill-rule="evenodd" stroke="#08160a" stroke-width="1.0" stroke-linejoin="round"/><path d="M1008.4 591 l7.2 -2.6" stroke="#b01c1c" stroke-width="1.3" fill="none"/><text x="1015.6999999999999" y="589" font-size="5.8" fill="#24242a" font-family="Liberation Sans, sans-serif">X</text><path d="M1008.4 591 l-0.4 4.6" stroke="#1c1ca8" stroke-width="1.3" fill="none"/><text x="1009.1999999999999" y="597" font-size="5.8" fill="#24242a" font-family="Liberation Sans, sans-serif">Z</text><path d="M1008.4 591 l5 6.5" stroke="#1c9a1c" stroke-width="1.3" fill="none"/><text x="1013.6999999999999" y="598.5" font-size="5.8" fill="#24242a" font-family="Liberation Sans, sans-serif">Y</text></svg></div>
<span class="t" style="left:3.6px;top:1.2px;font-size:7.8px;font-weight:bold;color:#f2f1ef;letter-spacing:0.004px">FreeCAD</span>
<span class="t" style="left:948.7px;top:1.2px;font-size:7.7px;font-weight:normal;color:#e6e4de;letter-spacing:-0.045px">vie sep 26 20:09</span>
<span class="t" style="left:897.0px;top:1.2px;font-size:6.0px;font-weight:bold;color:#3a3935;letter-spacing:-0.072px">Es</span>
<span class="t" style="left:36.5px;top:35.8px;font-size:8.0px;font-weight:normal;color:#3c3c3c;letter-spacing:-0.142px">Combo View</span>
<span class="t" style="left:39.5px;top:50.2px;font-size:8.0px;font-weight:normal;color:#3c3c3c;letter-spacing:-0.059px">Model</span>
<span class="t" style="left:70.0px;top:50.8px;font-size:8.0px;font-weight:normal;color:#3c3c3c;letter-spacing:-0.231px">Tasks</span>
<span class="t" style="left:38.7px;top:66.2px;font-size:8.0px;font-weight:normal;color:#3c3c3c;letter-spacing:0.031px">Labels &amp; Attributes</span>
<span class="t" style="left:291.2px;top:18.2px;font-size:8.0px;font-weight:normal;color:#3c3c3c;letter-spacing:0.019px">Start</span>
<span class="t" style="left:39.4px;top:325.9px;font-size:8.0px;font-weight:normal;color:#3c3c3c;letter-spacing:0.146px">Property</span>
<span class="t" style="left:93.0px;top:325.9px;font-size:8.0px;font-weight:normal;color:#3c3c3c;letter-spacing:0.025px">Value</span>
<span class="t" style="left:40.0px;top:609.8px;font-size:8.0px;font-weight:normal;color:#3c3c3c;letter-spacing:0.074px">View</span>
<span class="t" style="left:66.5px;top:609.2px;font-size:8.0px;font-weight:normal;color:#3c3c3c;letter-spacing:-0.102px">Data</span>
<span class="t" style="left:38.0px;top:626.8px;font-size:8.0px;font-weight:normal;color:#3c3c3c;letter-spacing:0.019px">Valid</span>
<span class="t" style="left:957.5px;top:627.6px;font-size:7.8px;font-weight:normal;color:#3c3c3c;letter-spacing:-0.085px">104.59 x 78.06 mm</span>
<span class="t" style="left:38.4px;top:78.2px;font-size:7.9px;font-weight:normal;color:#3c3c3c;letter-spacing:0.163px">Application</span>
<span class="t" style="left:60.5px;top:88.3px;font-size:7.9px;font-weight:bold;color:#2e2e2e;letter-spacing:-0.047px">Renacuajo-wheel-open-hardware</span>
<span class="t" style="left:71.0px;top:98.4px;font-size:7.9px;font-weight:normal;color:#9a9a9a;letter-spacing:0.067px">wheel-generic</span>
<span class="t" style="left:71.0px;top:108.5px;font-size:7.9px;font-weight:normal;color:#9a9a9a;letter-spacing:0.230px">gear-tooth-cutout</span>
<span class="t" style="left:71.0px;top:118.6px;font-size:7.9px;font-weight:normal;color:#9a9a9a;letter-spacing:0.119px">PolarPattern</span>
<span class="t" style="left:71.0px;top:128.7px;font-size:7.9px;font-weight:normal;color:#9a9a9a;letter-spacing:0.219px">perimeter</span>
<span class="t" style="left:71.0px;top:138.9px;font-size:7.9px;font-weight:normal;color:#9a9a9a;letter-spacing:0.157px">rounded-horn-cutout</span>
<span class="t" style="left:81.8px;top:149.0px;font-size:7.9px;font-weight:normal;color:#a8a8a8;letter-spacing:0.087px">rounded-horn-cutout-sketch</span>
<span class="t" style="left:71.0px;top:159.1px;font-size:7.9px;font-weight:normal;color:#9a9a9a;letter-spacing:0.107px">Shaft-drill</span>
<span class="t" style="left:71.0px;top:169.2px;font-size:7.9px;font-weight:normal;color:#9a9a9a;letter-spacing:0.120px">horn-drill-master</span>
<span class="t" style="left:81.8px;top:179.3px;font-size:7.9px;font-weight:normal;color:#a8a8a8;letter-spacing:0.097px">horn-drill-master-sketch</span>
<span class="t" style="left:71.0px;top:189.4px;font-size:7.9px;font-weight:normal;color:#9a9a9a;letter-spacing:0.049px">horn-drills001</span>
<span class="t" style="left:71.0px;top:199.6px;font-size:7.9px;font-weight:normal;color:#9a9a9a;letter-spacing:0.125px">horn-drill-room-master</span>
<span class="t" style="left:81.8px;top:209.7px;font-size:7.9px;font-weight:normal;color:#a8a8a8;letter-spacing:0.094px">horn-drill-room-master-sketch</span>
<span class="t" style="left:71.0px;top:219.8px;font-size:7.9px;font-weight:normal;color:#9a9a9a;letter-spacing:0.128px">horn-drills-room</span>
<span class="t" style="left:71.0px;top:229.9px;font-size:7.9px;font-weight:normal;color:#3c3c3c;letter-spacing:0.133px">Open-hw-cutout</span>
<span class="t" style="left:81.8px;top:240.0px;font-size:7.9px;font-weight:normal;color:#a8a8a8;letter-spacing:0.080px">open-hw-cutout-sketch</span>
<span class="t" style="left:71.0px;top:250.2px;font-size:7.9px;font-weight:bold;color:#2e2e2e;letter-spacing:-0.006px">Renacuajo-open-hardware-wheel-final</span>
<span class="t" style="left:396.3px;top:36.0px;font-size:7.8px;font-weight:bold;color:#2e2e2e;letter-spacing:-0.023px">Renacuajo-wheel-open-hardware : 4</span>
<span class="t" style="left:763.3px;top:36.0px;font-size:7.8px;font-weight:bold;color:#2e2e2e;letter-spacing:-0.023px">Renacuajo-wheel-open-hardware : 3</span>
<span class="t" style="left:396.3px;top:322.1px;font-size:7.8px;font-weight:bold;color:#2e2e2e;letter-spacing:-0.023px">Renacuajo-wheel-open-hardware : 2</span>
<span class="t" style="left:763.3px;top:322.1px;font-size:7.8px;font-weight:bold;color:#ffffff;letter-spacing:-0.023px">Renacuajo-wheel-open-hardware : 1</span>
<span class="t" style="left:304.8px;top:609.8px;font-size:7.8px;font-weight:normal;color:#3c3c3c;letter-spacing:0.002px">Renacuajo-wheel-open-hardware : 1</span>
<span class="t" style="left:466.7px;top:609.8px;font-size:7.8px;font-weight:normal;color:#3c3c3c;letter-spacing:-0.004px">Renacuajo-wheel-open-hardware : 2</span>
<span class="t" style="left:628.5px;top:609.8px;font-size:7.8px;font-weight:normal;color:#3c3c3c;letter-spacing:0.027px">Renacuajo-wheel-open-hardware : 3</span>
<span class="t" style="left:791.9px;top:609.8px;font-size:7.8px;font-weight:normal;color:#3c3c3c;letter-spacing:-0.016px">Renacuajo-wheel-open-hardware : 4</span>
</div>
</body>
</html>
